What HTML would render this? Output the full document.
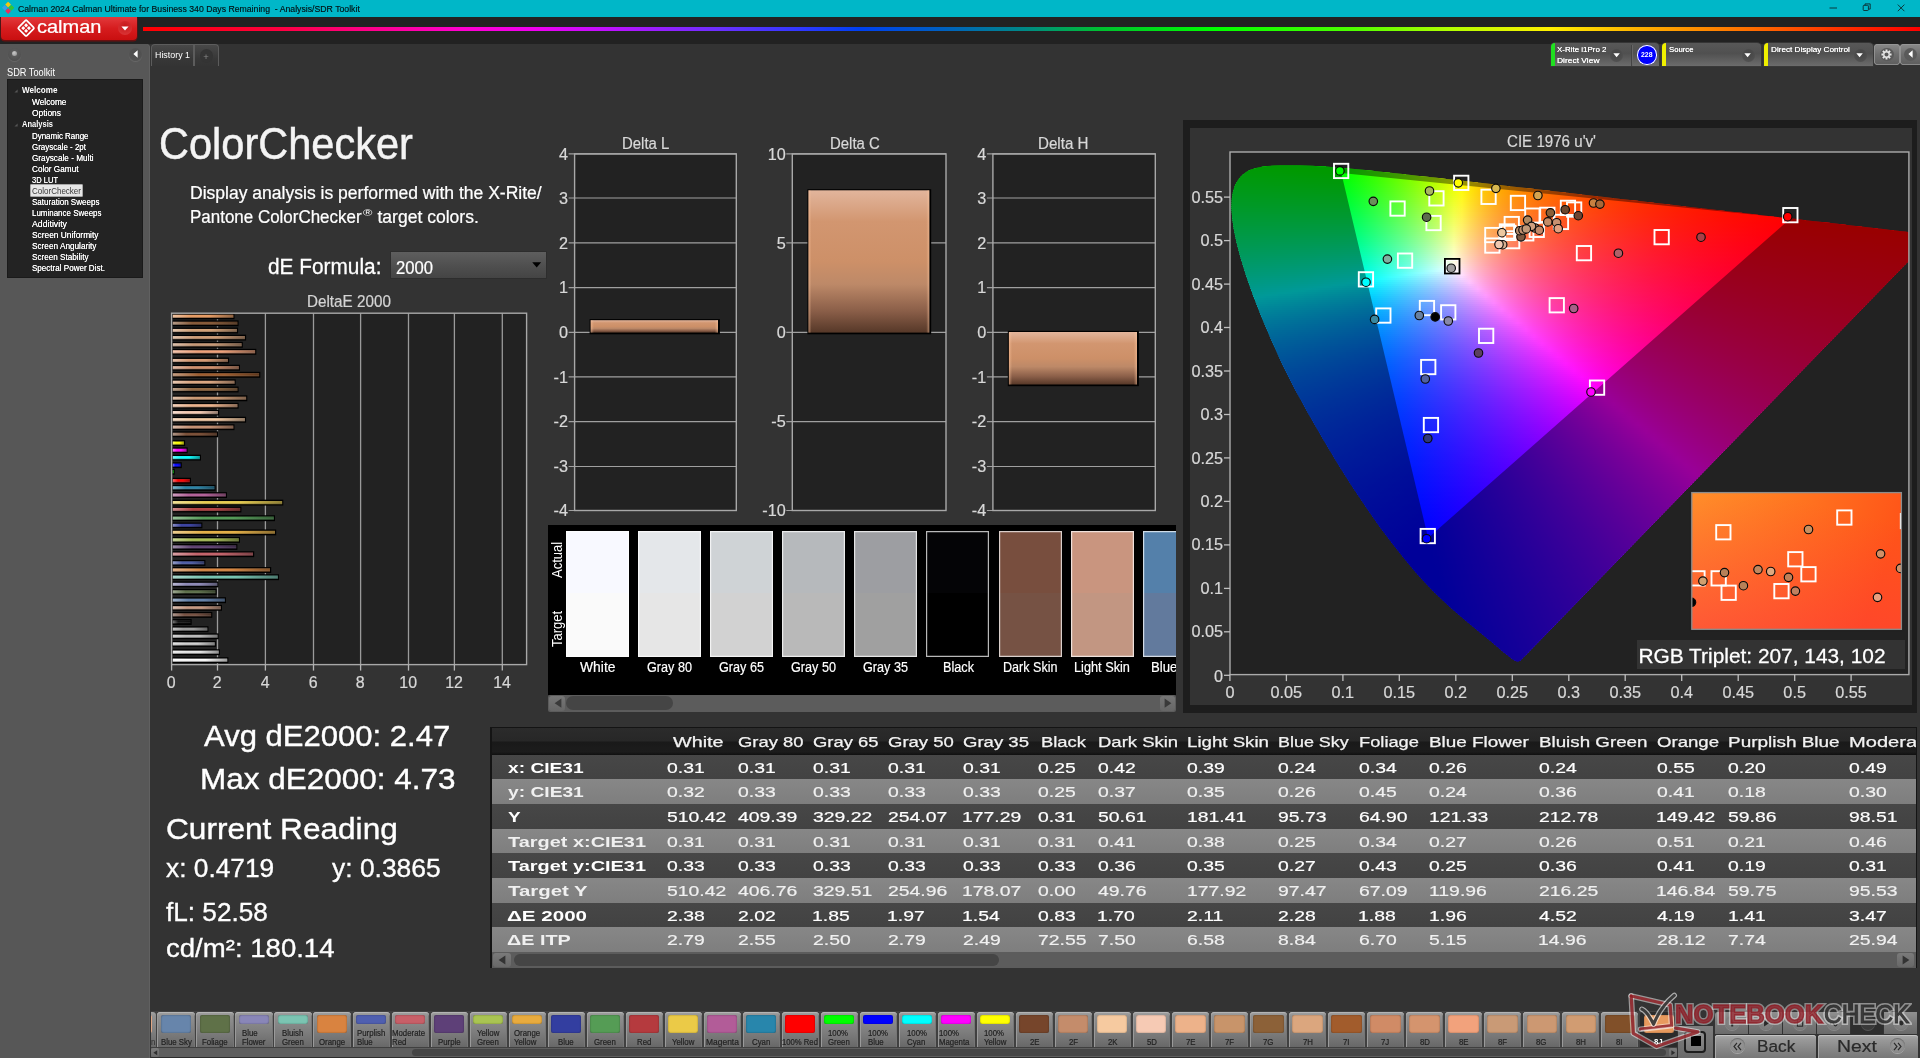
<!DOCTYPE html>
<html><head><meta charset="utf-8"><title>Calman ColorChecker</title>
<style>
html,body{margin:0;padding:0;background:#333;}
#app{will-change:transform;position:relative;width:1920px;height:1058px;overflow:hidden;background:#333;font-family:"Liberation Sans",sans-serif;}
#app div,#app span,#app svg{position:absolute;}
#app span{white-space:nowrap;line-height:1;transform-origin:0 0;}
#app svg{overflow:visible;}
#app svg text{font-family:"Liberation Sans",sans-serif;}
</style></head><body><div id="app">
<!-- top -->
<div style="left:0.00px;top:0.00px;width:1920.00px;height:17.00px;background:#00b7c8;"></div>
<svg style="left:1.8px;top:2px" width="12.4" height="12.4" viewBox="0 0 14 14"><rect x="4.6" y="0.6" width="4.6" height="4.6" fill="#f2c811" transform="rotate(45 6.9 2.9)"/><rect x="0.9" y="4.3" width="4.6" height="4.6" fill="#3aa0e8" transform="rotate(45 3.2 6.6)"/><rect x="8.3" y="4.3" width="4.6" height="4.6" fill="#35c435" transform="rotate(45 10.6 6.6)"/><rect x="4.6" y="8" width="4.6" height="4.6" fill="#e8305a" transform="rotate(45 6.9 10.3)"/></svg>
<span style="left:17.50px;top:4px;font-size:9.13px;line-height:10px;color:#021013;transform:scaleX(0.9537);white-space:pre;-webkit-text-stroke:0.15px #021013;">Calman 2024 Calman Ultimate for Business 340 Days Remaining  - Analysis/SDR Toolkit</span>
<svg style="left:1820px;top:0" width="100" height="17" viewBox="0 0 100 17" fill="none" stroke="#0c2a2e" stroke-width="0.9"><path d="M9.5 8h7.5"/><rect x="43.2" y="5.3" width="5.2" height="5.2" rx="0.8"/><path d="M45 5.3v-1.4h5.2v5.2h-1.6"/><path d="M77.8 4.6l6.6 6.6M84.4 4.6l-6.6 6.6"/></svg>
<div style="left:0.00px;top:17.00px;width:1920.00px;height:27.00px;background:#222;"></div>
<div style="left:142.50px;top:26.80px;width:1777.50px;height:4.00px;background:linear-gradient(90deg,#ff0000 0%,#ff0040 7.7%,#ff0080 12%,#ff00d0 18%,#f000f0 22%,#c010ff 26%,#6a30ff 32.5%,#3038ff 37%,#0040f0 40.3%,#0060c0 45%,#008888 49.5%,#00c030 53.9%,#00ff00 60.3%,#50ff00 68.2%,#b0ff00 73.4%,#fff000 79.1%,#ffb400 83.9%,#ff6e00 90.4%,#ff3000 95.6%,#ff0000 100%);"></div>
<div style="left:1.00px;top:17.00px;width:136.00px;height:22.60px;background:linear-gradient(#e23a3c,#d61c1e 50%,#c90f10);border-radius:0 0 4px 4px;box-shadow:0 1px 0 0.6px #6a1010;"></div>
<svg style="left:16.6px;top:19px" width="18.2" height="18.2" viewBox="0 0 20 20"><g transform="rotate(45 10 10)" fill="none" stroke="#fff" stroke-width="1.9"><rect x="3.6" y="3.6" width="12.8" height="12.8" rx="1.2"/></g><g transform="rotate(45 10 10)" fill="#fff"><rect x="6.2" y="6.2" width="3.2" height="3.2" rx="0.6"/><rect x="10.6" y="6.2" width="3.2" height="3.2" rx="0.6"/><rect x="6.2" y="10.6" width="3.2" height="3.2" rx="0.6"/><rect x="10.6" y="10.6" width="3.2" height="3.2" rx="0.6"/></g></svg>
<span style="left:37.00px;top:16px;font-size:18.30px;line-height:21px;color:#fff;-webkit-text-stroke-width:0.24px;transform:scaleX(1.0933);">calman</span>
<div style="left:117.50px;top:21.00px;width:14.00px;height:14.00px;border-radius:50%;background:radial-gradient(circle at 50% 35%,#c8181a,#dd3a3c);"></div>
<svg style="left:120.5px;top:26.2px" width="8" height="5" viewBox="0 0 8 5"><path d="M0.4 0.5h7.2L4 4.6z" fill="#fff"/></svg>
<div style="left:0.00px;top:43.50px;width:149.50px;height:1014.50px;background:#575757;border-radius:0 4px 0 0;box-shadow:inset -1px 0 0 #616161;"></div>
<div style="left:7.50px;top:47.50px;width:13.00px;height:13.00px;border-radius:50%;background:radial-gradient(circle at 50% 40%,#5a5a5a 30%,#505050 70%);box-shadow:0 1px 1px #6a6a6a;"></div>
<div style="left:11.50px;top:50.80px;width:5.00px;height:5.00px;border-radius:50%;background:radial-gradient(circle at 40% 35%,#c8c8c8,#8a8a8a);"></div>
<div style="left:128.50px;top:47.50px;width:13.00px;height:13.00px;border-radius:50%;background:radial-gradient(circle at 50% 40%,#4c4c4c,#565656);box-shadow:0 1px 1px #6a6a6a;"></div>
<svg style="left:133px;top:49.5px" width="5" height="8" viewBox="0 0 5 8"><path d="M4.6 0.3v7.4L0.4 4z" fill="#fff"/></svg>
<span style="left:6.50px;top:67px;font-size:10.29px;line-height:11px;color:#fff;transform:scaleX(0.8961);">SDR Toolkit</span>
<div style="left:7.00px;top:79.00px;width:136.00px;height:199.00px;background:#232323;box-shadow:inset 0 0 0 1px #1a1a1a;"></div>
<span style="left:22.00px;top:85px;font-size:8.55px;line-height:10px;color:#fff;font-weight:700;transform:scaleX(0.9496);">Welcome</span>
<span style="left:32.00px;top:97px;font-size:8.55px;line-height:10px;color:#fff;transform:scaleX(0.9723);text-shadow:0 0 0.6px #fff;">Welcome</span>
<span style="left:32.00px;top:108px;font-size:8.55px;line-height:10px;color:#fff;transform:scaleX(0.9841);text-shadow:0 0 0.6px #fff;">Options</span>
<span style="left:22.00px;top:119px;font-size:8.55px;line-height:10px;color:#fff;font-weight:700;transform:scaleX(0.8814);">Analysis</span>
<span style="left:32.00px;top:131px;font-size:8.55px;line-height:10px;color:#fff;transform:scaleX(0.9288);text-shadow:0 0 0.6px #fff;">Dynamic Range</span>
<span style="left:32.00px;top:142px;font-size:8.55px;line-height:10px;color:#fff;transform:scaleX(0.9314);text-shadow:0 0 0.6px #fff;">Grayscale - 2pt</span>
<span style="left:32.00px;top:153px;font-size:8.55px;line-height:10px;color:#fff;transform:scaleX(0.9588);text-shadow:0 0 0.6px #fff;">Grayscale - Multi</span>
<span style="left:32.00px;top:164px;font-size:8.55px;line-height:10px;color:#fff;transform:scaleX(0.9593);text-shadow:0 0 0.6px #fff;">Color Gamut</span>
<span style="left:32.00px;top:175px;font-size:8.55px;line-height:10px;color:#fff;transform:scaleX(0.8825);text-shadow:0 0 0.6px #fff;">3D LUT</span>
<div style="left:30.70px;top:185.40px;width:51.60px;height:10.60px;background:#e6e6e6;box-shadow:0 0 0 0.6px #fff;"></div>
<span style="left:32.00px;top:186px;font-size:8.55px;line-height:10px;color:#3a3a3a;transform:scaleX(0.9374);">ColorChecker</span>
<span style="left:32.00px;top:197px;font-size:8.55px;line-height:10px;color:#fff;transform:scaleX(0.9404);text-shadow:0 0 0.6px #fff;">Saturation Sweeps</span>
<span style="left:32.00px;top:208px;font-size:8.55px;line-height:10px;color:#fff;transform:scaleX(0.9313);text-shadow:0 0 0.6px #fff;">Luminance Sweeps</span>
<span style="left:32.00px;top:219px;font-size:8.55px;line-height:10px;color:#fff;transform:scaleX(1.0229);text-shadow:0 0 0.6px #fff;">Additivity</span>
<span style="left:32.00px;top:230px;font-size:8.55px;line-height:10px;color:#fff;transform:scaleX(0.9786);text-shadow:0 0 0.6px #fff;">Screen Uniformity</span>
<span style="left:32.00px;top:241px;font-size:8.55px;line-height:10px;color:#fff;transform:scaleX(0.9624);text-shadow:0 0 0.6px #fff;">Screen Angularity</span>
<span style="left:32.00px;top:252px;font-size:8.55px;line-height:10px;color:#fff;transform:scaleX(0.9510);text-shadow:0 0 0.6px #fff;">Screen Stability</span>
<span style="left:32.00px;top:263px;font-size:8.55px;line-height:10px;color:#fff;transform:scaleX(0.9424);text-shadow:0 0 0.6px #fff;">Spectral Power Dist.</span>
<svg style="left:14px;top:88.8px" width="4" height="4" viewBox="0 0 4 4"><path d="M3.6 0.4v3.2H0.4z" fill="#555"/></svg>
<svg style="left:14px;top:122.7px" width="4" height="4" viewBox="0 0 4 4"><path d="M3.6 0.4v3.2H0.4z" fill="#555"/></svg>
<div style="left:151.00px;top:43.60px;width:42.50px;height:23.00px;background:linear-gradient(#484848,#383838 60%,#333);border:1px solid #5c5c5c;border-bottom:none;border-radius:4px 0 0 0;box-sizing:border-box;"></div>
<div style="left:194.00px;top:43.60px;width:24.50px;height:23.00px;background:linear-gradient(#484848,#383838 60%,#333);border:1px solid #5c5c5c;border-bottom:none;border-radius:0 4px 0 0;box-sizing:border-box;"></div>
<span style="left:154.50px;top:50px;font-size:9.13px;line-height:10px;color:#fff;transform:scaleX(0.9716);">History 1</span>
<div style="left:199.50px;top:49.00px;width:13.50px;height:13.50px;border-radius:50%;background:#343434;"></div>
<span style="left:203.20px;top:51px;font-size:9.50px;line-height:11px;color:#888;">+</span>
<div style="left:150.50px;top:66.40px;width:1769.50px;height:991.60px;background:#333;"></div>
<div style="left:1551.00px;top:43.40px;width:107.50px;height:23.00px;background:linear-gradient(#585858,#505050 45%,#6c6c6c);border-radius:4px 4px 0 0;box-shadow:0 0 0 0.8px #3c3c3c;overflow:hidden;"><div style="left:0.00px;top:0.00px;width:4.00px;height:23.00px;background:#20e020;"></div></div><div style="left:1610.00px;top:48.50px;width:13.00px;height:13.00px;border-radius:50%;background:radial-gradient(circle at 50% 35%,#444,#555);"></div><svg style="left:1612.9px;top:53.2px" width="7.2" height="4.4" viewBox="0 0 8 5"><path d="M0.3 0.4h7.4L4 4.7z" fill="#fff"/></svg>
<div style="left:1631.00px;top:45.00px;width:1.00px;height:21.00px;background:#444;box-shadow:1px 0 0 #666;"></div>
<span style="left:1557.00px;top:45px;font-size:8.12px;line-height:9px;color:#fff;transform:scaleX(0.9798);text-shadow:0 0 0.5px #fff;">X-Rite i1Pro 2</span>
<span style="left:1557.00px;top:56px;font-size:8.12px;line-height:9px;color:#fff;transform:scaleX(1.0393);text-shadow:0 0 0.5px #fff;">Direct View</span>
<div style="left:1637.00px;top:45.00px;width:19.50px;height:19.50px;border-radius:50%;background:#0000ff;box-shadow:inset 0 0 0 1px #fff;"></div>
<span style="left:1641.00px;top:51px;font-size:6.96px;line-height:7px;color:#fff;font-weight:700;transform:scaleX(0.9908);">228</span>
<div style="left:1662.00px;top:43.40px;width:98.50px;height:23.00px;background:linear-gradient(#585858,#505050 45%,#6c6c6c);border-radius:4px 4px 0 0;box-shadow:0 0 0 0.8px #3c3c3c;overflow:hidden;"><div style="left:0.00px;top:0.00px;width:4.00px;height:23.00px;background:#f0f000;"></div></div><div style="left:1741.50px;top:48.50px;width:13.00px;height:13.00px;border-radius:50%;background:radial-gradient(circle at 50% 35%,#444,#555);"></div><svg style="left:1744.4px;top:53.2px" width="7.2" height="4.4" viewBox="0 0 8 5"><path d="M0.3 0.4h7.4L4 4.7z" fill="#fff"/></svg>
<span style="left:1669.00px;top:45px;font-size:8.12px;line-height:9px;color:#fff;transform:scaleX(0.9527);text-shadow:0 0 0.5px #fff;">Source</span>
<div style="left:1764.00px;top:43.40px;width:108.50px;height:23.00px;background:linear-gradient(#585858,#505050 45%,#6c6c6c);border-radius:4px 4px 0 0;box-shadow:0 0 0 0.8px #3c3c3c;overflow:hidden;"><div style="left:0.00px;top:0.00px;width:4.00px;height:23.00px;background:#f0f000;"></div></div><div style="left:1853.50px;top:48.50px;width:13.00px;height:13.00px;border-radius:50%;background:radial-gradient(circle at 50% 35%,#444,#555);"></div><svg style="left:1856.4px;top:53.2px" width="7.2" height="4.4" viewBox="0 0 8 5"><path d="M0.3 0.4h7.4L4 4.7z" fill="#fff"/></svg>
<span style="left:1771.00px;top:45px;font-size:8.12px;line-height:9px;color:#fff;transform:scaleX(1.0066);text-shadow:0 0 0.5px #fff;">Direct Display Control</span>
<div style="left:1874.00px;top:43.50px;width:25.50px;height:21.30px;background:linear-gradient(#8a8a8a,#6e6e6e 50%,#5e5e5e);border-radius:4px;box-shadow:0 0 0 0.8px #999 inset;"></div>
<div style="left:1900.00px;top:43.50px;width:24.00px;height:21.30px;background:linear-gradient(#8a8a8a,#6e6e6e 50%,#5e5e5e);border-radius:4px;box-shadow:0 0 0 0.8px #999 inset;"></div>
<div style="left:1880.00px;top:47.50px;width:13.50px;height:13.50px;border-radius:50%;background:#5a5a5a;"></div>
<svg style="left:1881.2px;top:48.8px" width="11" height="11" viewBox="0 0 24 24" fill="none" stroke="#e8e8e8"><circle cx="12" cy="12" r="6" stroke-width="3"/><g stroke-width="4.2"><path d="M12 1v4M12 19v4M1 12h4M19 12h4M4.2 4.2l2.9 2.9M16.9 16.9l2.9 2.9M4.2 19.8l2.9-2.9M16.9 7.1l2.9-2.9"/></g><circle cx="12" cy="12" r="3.2" fill="#5a5a5a" stroke="none"/></svg>
<div style="left:1903.50px;top:47.50px;width:13.50px;height:13.50px;border-radius:50%;background:#5a5a5a;"></div>
<svg style="left:1907.5px;top:50px" width="5" height="8" viewBox="0 0 5 8"><path d="M4.6 0.3v7.4L0.4 4z" fill="#fff"/></svg>
<!-- left -->
<span style="left:159.00px;top:119px;font-size:44.20px;line-height:49px;color:#f4f4f4;transform:scaleX(0.9399);-webkit-text-stroke:0.5px #f4f4f4;">ColorChecker</span>
<span style="left:190.00px;top:183px;font-size:17.54px;line-height:20px;color:#fff;-webkit-text-stroke-width:0.23px;">Display analysis is performed with the X-Rite/</span>
<span style="left:190.00px;top:207px;font-size:17.54px;line-height:20px;color:#fff;-webkit-text-stroke-width:0.23px;transform:scaleX(0.9672);">Pantone ColorChecker</span>
<span style="left:362.60px;top:207px;font-size:9.50px;line-height:11px;color:#fff;transform:scaleX(1.3429);">®</span>
<span style="left:377.50px;top:207px;font-size:17.54px;line-height:20px;color:#fff;-webkit-text-stroke-width:0.23px;">target colors.</span>
<span style="left:267.50px;top:254px;font-size:22.32px;line-height:25px;color:#fff;-webkit-text-stroke-width:0.29px;transform:scaleX(0.9337);">dE Formula:</span>
<div style="left:390.60px;top:252.00px;width:155.50px;height:26.00px;background:linear-gradient(#5e5e5e,#505050 50%,#444);box-shadow:0 0 0 0.8px #2c2c2c;"></div>
<span style="left:395.50px;top:258px;font-size:17.68px;line-height:20px;color:#fff;-webkit-text-stroke-width:0.23px;transform:scaleX(0.9406);">2000</span>
<svg style="left:531.5px;top:262px" width="9.4" height="5.6" viewBox="0 0 10 6"><path d="M0.2 0.3h9.6L5 5.8z" fill="#000"/></svg>
<span style="left:307.40px;top:292px;font-size:16.09px;line-height:18px;color:#d4d4d4;-webkit-text-stroke-width:0.21px;transform:scaleX(0.9476);">DeltaE 2000</span>
<svg style="left:0;top:0" width="560" height="700" viewBox="0 0 560 700"><rect x="171.6" y="313.2" width="355.0" height="351.4" fill="#222"/><path d="M217.5 313.2V664.6" stroke="#9a9a9a" stroke-width="1.3"/><path d="M265.4 313.2V664.6" stroke="#9a9a9a" stroke-width="1.3"/><path d="M313.5 313.2V664.6" stroke="#9a9a9a" stroke-width="1.3"/><path d="M360.6 313.2V664.6" stroke="#9a9a9a" stroke-width="1.3"/><path d="M408.5 313.2V664.6" stroke="#9a9a9a" stroke-width="1.3"/><path d="M454.4 313.2V664.6" stroke="#9a9a9a" stroke-width="1.3"/><path d="M502.3 313.2V664.6" stroke="#9a9a9a" stroke-width="1.3"/><defs><linearGradient id="bg" x1="0" y1="0" x2="0" y2="1"><stop offset="0" stop-color="#fff" stop-opacity=".12"/><stop offset=".4" stop-color="#fff" stop-opacity="0"/><stop offset="1" stop-color="#000" stop-opacity=".4"/></linearGradient><linearGradient id="bh" x1="0" y1="0" x2="1" y2="0"><stop offset="0" stop-color="#fff" stop-opacity=".4"/><stop offset=".3" stop-color="#fff" stop-opacity="0"/><stop offset=".6" stop-color="#000" stop-opacity="0"/><stop offset="1" stop-color="#000" stop-opacity=".4"/></linearGradient></defs><rect x="172.2" y="657.25" width="56.2" height="5.9" fill="#000"/><rect x="172.8" y="658.65" width="54.4" height="3.1" fill="#ffffff"/><rect x="172.8" y="658.65" width="54.4" height="3.1" fill="url(#bh)"/><rect x="172.8" y="658.65" width="54.4" height="3.1" fill="url(#bg)"/><rect x="172.2" y="649.25" width="47.7" height="5.9" fill="#000"/><rect x="172.8" y="650.65" width="45.9" height="3.1" fill="#e6e6e6"/><rect x="172.8" y="650.65" width="45.9" height="3.1" fill="url(#bh)"/><rect x="172.8" y="650.65" width="45.9" height="3.1" fill="url(#bg)"/><rect x="172.2" y="640.95" width="43.7" height="5.9" fill="#000"/><rect x="172.8" y="642.35" width="41.9" height="3.1" fill="#d0d0d0"/><rect x="172.8" y="642.35" width="41.9" height="3.1" fill="url(#bh)"/><rect x="172.8" y="642.35" width="41.9" height="3.1" fill="url(#bg)"/><rect x="172.2" y="633.35" width="46.5" height="5.9" fill="#000"/><rect x="172.8" y="634.75" width="44.7" height="3.1" fill="#b8b8b8"/><rect x="172.8" y="634.75" width="44.7" height="3.1" fill="url(#bh)"/><rect x="172.8" y="634.75" width="44.7" height="3.1" fill="url(#bg)"/><rect x="172.2" y="626.25" width="36.3" height="5.9" fill="#000"/><rect x="172.8" y="627.65" width="34.5" height="3.1" fill="#9a9a9a"/><rect x="172.8" y="627.65" width="34.5" height="3.1" fill="url(#bh)"/><rect x="172.8" y="627.65" width="34.5" height="3.1" fill="url(#bg)"/><rect x="172.2" y="619.05" width="19.5" height="5.9" fill="#000"/><rect x="172.8" y="620.45" width="17.7" height="3.1" fill="#101010"/><rect x="172.8" y="620.45" width="17.7" height="3.1" fill="url(#bh)"/><rect x="172.8" y="620.45" width="17.7" height="3.1" fill="url(#bg)"/><rect x="172.2" y="611.95" width="40.1" height="5.9" fill="#000"/><rect x="172.8" y="613.35" width="38.3" height="3.1" fill="#785040"/><rect x="172.8" y="613.35" width="38.3" height="3.1" fill="url(#bh)"/><rect x="172.8" y="613.35" width="38.3" height="3.1" fill="url(#bg)"/><rect x="172.2" y="604.85" width="49.8" height="5.9" fill="#000"/><rect x="172.8" y="606.25" width="48.0" height="3.1" fill="#c89880"/><rect x="172.8" y="606.25" width="48.0" height="3.1" fill="url(#bh)"/><rect x="172.8" y="606.25" width="48.0" height="3.1" fill="url(#bg)"/><rect x="172.2" y="597.25" width="53.8" height="5.9" fill="#000"/><rect x="172.8" y="598.65" width="52.0" height="3.1" fill="#5c7ca8"/><rect x="172.8" y="598.65" width="52.0" height="3.1" fill="url(#bh)"/><rect x="172.8" y="598.65" width="52.0" height="3.1" fill="url(#bg)"/><rect x="172.2" y="588.95" width="44.4" height="5.9" fill="#000"/><rect x="172.8" y="590.35" width="42.6" height="3.1" fill="#5c7048"/><rect x="172.8" y="590.35" width="42.6" height="3.1" fill="url(#bh)"/><rect x="172.8" y="590.35" width="42.6" height="3.1" fill="url(#bg)"/><rect x="172.2" y="581.45" width="46.3" height="5.9" fill="#000"/><rect x="172.8" y="582.85" width="44.5" height="3.1" fill="#8884b4"/><rect x="172.8" y="582.85" width="44.5" height="3.1" fill="url(#bh)"/><rect x="172.8" y="582.85" width="44.5" height="3.1" fill="url(#bg)"/><rect x="172.2" y="574.25" width="106.8" height="5.9" fill="#000"/><rect x="172.8" y="575.65" width="105.0" height="3.1" fill="#70c4b0"/><rect x="172.8" y="575.65" width="105.0" height="3.1" fill="url(#bh)"/><rect x="172.8" y="575.65" width="105.0" height="3.1" fill="url(#bg)"/><rect x="172.2" y="567.05" width="99.0" height="5.9" fill="#000"/><rect x="172.8" y="568.45" width="97.2" height="3.1" fill="#d8843c"/><rect x="172.8" y="568.45" width="97.2" height="3.1" fill="url(#bh)"/><rect x="172.8" y="568.45" width="97.2" height="3.1" fill="url(#bg)"/><rect x="172.2" y="559.95" width="33.2" height="5.9" fill="#000"/><rect x="172.8" y="561.35" width="31.4" height="3.1" fill="#4c5ca8"/><rect x="172.8" y="561.35" width="31.4" height="3.1" fill="url(#bh)"/><rect x="172.8" y="561.35" width="31.4" height="3.1" fill="url(#bg)"/><rect x="172.2" y="551.25" width="82.0" height="5.9" fill="#000"/><rect x="172.8" y="552.65" width="80.2" height="3.1" fill="#c45c64"/><rect x="172.8" y="552.65" width="80.2" height="3.1" fill="url(#bh)"/><rect x="172.8" y="552.65" width="80.2" height="3.1" fill="url(#bg)"/><rect x="172.2" y="544.05" width="65.2" height="5.9" fill="#000"/><rect x="172.8" y="545.45" width="63.4" height="3.1" fill="#5c3c70"/><rect x="172.8" y="545.45" width="63.4" height="3.1" fill="url(#bh)"/><rect x="172.8" y="545.45" width="63.4" height="3.1" fill="url(#bg)"/><rect x="172.2" y="536.95" width="67.8" height="5.9" fill="#000"/><rect x="172.8" y="538.35" width="66.0" height="3.1" fill="#a8c050"/><rect x="172.8" y="538.35" width="66.0" height="3.1" fill="url(#bh)"/><rect x="172.8" y="538.35" width="66.0" height="3.1" fill="url(#bg)"/><rect x="172.2" y="529.45" width="104.0" height="5.9" fill="#000"/><rect x="172.8" y="530.85" width="102.2" height="3.1" fill="#e4ac3c"/><rect x="172.8" y="530.85" width="102.2" height="3.1" fill="url(#bh)"/><rect x="172.8" y="530.85" width="102.2" height="3.1" fill="url(#bg)"/><rect x="172.2" y="522.45" width="30.2" height="5.9" fill="#000"/><rect x="172.8" y="523.85" width="28.4" height="3.1" fill="#30389c"/><rect x="172.8" y="523.85" width="28.4" height="3.1" fill="url(#bh)"/><rect x="172.8" y="523.85" width="28.4" height="3.1" fill="url(#bg)"/><rect x="172.2" y="515.25" width="102.8" height="5.9" fill="#000"/><rect x="172.8" y="516.65" width="101.0" height="3.1" fill="#4c9850"/><rect x="172.8" y="516.65" width="101.0" height="3.1" fill="url(#bh)"/><rect x="172.8" y="516.65" width="101.0" height="3.1" fill="url(#bg)"/><rect x="172.2" y="506.55" width="69.2" height="5.9" fill="#000"/><rect x="172.8" y="507.95" width="67.4" height="3.1" fill="#b03838"/><rect x="172.8" y="507.95" width="67.4" height="3.1" fill="url(#bh)"/><rect x="172.8" y="507.95" width="67.4" height="3.1" fill="url(#bg)"/><rect x="172.2" y="499.65" width="111.1" height="5.9" fill="#000"/><rect x="172.8" y="501.05" width="109.3" height="3.1" fill="#e8cc48"/><rect x="172.8" y="501.05" width="109.3" height="3.1" fill="url(#bh)"/><rect x="172.8" y="501.05" width="109.3" height="3.1" fill="url(#bg)"/><rect x="172.2" y="492.15" width="54.8" height="5.9" fill="#000"/><rect x="172.8" y="493.55" width="53.0" height="3.1" fill="#b45c98"/><rect x="172.8" y="493.55" width="53.0" height="3.1" fill="url(#bh)"/><rect x="172.8" y="493.55" width="53.0" height="3.1" fill="url(#bg)"/><rect x="172.2" y="484.85" width="43.4" height="5.9" fill="#000"/><rect x="172.8" y="486.25" width="41.6" height="3.1" fill="#2884a8"/><rect x="172.8" y="486.25" width="41.6" height="3.1" fill="url(#bh)"/><rect x="172.8" y="486.25" width="41.6" height="3.1" fill="url(#bg)"/><rect x="172.2" y="477.75" width="18.8" height="5.9" fill="#000"/><rect x="172.8" y="479.15" width="17.0" height="3.1" fill="#ff0000"/><rect x="172.8" y="479.15" width="17.0" height="3.1" fill="url(#bh)"/><rect x="172.8" y="479.15" width="17.0" height="3.1" fill="url(#bg)"/><rect x="172.2" y="468.85" width="2.5" height="5.9" fill="#000"/><rect x="172.8" y="470.25" width="0.8" height="3.1" fill="#00ff00"/><rect x="172.8" y="470.25" width="0.8" height="3.1" fill="url(#bh)"/><rect x="172.8" y="470.25" width="0.8" height="3.1" fill="url(#bg)"/><rect x="172.2" y="462.25" width="9.6" height="5.9" fill="#000"/><rect x="172.8" y="463.65" width="7.8" height="3.1" fill="#0000ff"/><rect x="172.8" y="463.65" width="7.8" height="3.1" fill="url(#bh)"/><rect x="172.8" y="463.65" width="7.8" height="3.1" fill="url(#bg)"/><rect x="172.2" y="454.65" width="28.8" height="5.9" fill="#000"/><rect x="172.8" y="456.05" width="27.0" height="3.1" fill="#00ffff"/><rect x="172.8" y="456.05" width="27.0" height="3.1" fill="url(#bh)"/><rect x="172.8" y="456.05" width="27.0" height="3.1" fill="url(#bg)"/><rect x="172.2" y="447.35" width="15.5" height="5.9" fill="#000"/><rect x="172.8" y="448.75" width="13.7" height="3.1" fill="#ff00ff"/><rect x="172.8" y="448.75" width="13.7" height="3.1" fill="url(#bh)"/><rect x="172.8" y="448.75" width="13.7" height="3.1" fill="url(#bg)"/><rect x="172.2" y="440.15" width="12.9" height="5.9" fill="#000"/><rect x="172.8" y="441.55" width="11.1" height="3.1" fill="#ffff00"/><rect x="172.8" y="441.55" width="11.1" height="3.1" fill="url(#bh)"/><rect x="172.8" y="441.55" width="11.1" height="3.1" fill="url(#bg)"/><rect x="172.2" y="431.35" width="46.0" height="5.9" fill="#000"/><rect x="172.8" y="432.75" width="44.2" height="3.1" fill="#74462c"/><rect x="172.8" y="432.75" width="44.2" height="3.1" fill="url(#bh)"/><rect x="172.8" y="432.75" width="44.2" height="3.1" fill="url(#bg)"/><rect x="172.2" y="424.25" width="62.3" height="5.9" fill="#000"/><rect x="172.8" y="425.65" width="60.5" height="3.1" fill="#c48c6c"/><rect x="172.8" y="425.65" width="60.5" height="3.1" fill="url(#bh)"/><rect x="172.8" y="425.65" width="60.5" height="3.1" fill="url(#bg)"/><rect x="172.2" y="416.75" width="73.9" height="5.9" fill="#000"/><rect x="172.8" y="418.15" width="72.1" height="3.1" fill="#f4c8a0"/><rect x="172.8" y="418.15" width="72.1" height="3.1" fill="url(#bh)"/><rect x="172.8" y="418.15" width="72.1" height="3.1" fill="url(#bg)"/><rect x="172.2" y="409.65" width="47.0" height="5.9" fill="#000"/><rect x="172.8" y="411.05" width="45.2" height="3.1" fill="#f4c8b0"/><rect x="172.8" y="411.05" width="45.2" height="3.1" fill="url(#bh)"/><rect x="172.8" y="411.05" width="45.2" height="3.1" fill="url(#bg)"/><rect x="172.2" y="402.75" width="66.4" height="5.9" fill="#000"/><rect x="172.8" y="404.15" width="64.6" height="3.1" fill="#ecb088"/><rect x="172.8" y="404.15" width="64.6" height="3.1" fill="url(#bh)"/><rect x="172.8" y="404.15" width="64.6" height="3.1" fill="url(#bg)"/><rect x="172.2" y="395.35" width="75.1" height="5.9" fill="#000"/><rect x="172.8" y="396.75" width="73.3" height="3.1" fill="#c8946c"/><rect x="172.8" y="396.75" width="73.3" height="3.1" fill="url(#bh)"/><rect x="172.8" y="396.75" width="73.3" height="3.1" fill="url(#bg)"/><rect x="172.2" y="386.55" width="66.4" height="5.9" fill="#000"/><rect x="172.8" y="387.95" width="64.6" height="3.1" fill="#8c6038"/><rect x="172.8" y="387.95" width="64.6" height="3.1" fill="url(#bh)"/><rect x="172.8" y="387.95" width="64.6" height="3.1" fill="url(#bg)"/><rect x="172.2" y="379.35" width="63.5" height="5.9" fill="#000"/><rect x="172.8" y="380.75" width="61.7" height="3.1" fill="#dca47c"/><rect x="172.8" y="380.75" width="61.7" height="3.1" fill="url(#bh)"/><rect x="172.8" y="380.75" width="61.7" height="3.1" fill="url(#bg)"/><rect x="172.2" y="371.85" width="88.1" height="5.9" fill="#000"/><rect x="172.8" y="373.25" width="86.3" height="3.1" fill="#a05c2c"/><rect x="172.8" y="373.25" width="86.3" height="3.1" fill="url(#bh)"/><rect x="172.8" y="373.25" width="86.3" height="3.1" fill="url(#bg)"/><rect x="172.2" y="364.75" width="67.8" height="5.9" fill="#000"/><rect x="172.8" y="366.15" width="66.0" height="3.1" fill="#d08c68"/><rect x="172.8" y="366.15" width="66.0" height="3.1" fill="url(#bh)"/><rect x="172.8" y="366.15" width="66.0" height="3.1" fill="url(#bg)"/><rect x="172.2" y="357.55" width="56.9" height="5.9" fill="#000"/><rect x="172.8" y="358.95" width="55.1" height="3.1" fill="#d4946c"/><rect x="172.8" y="358.95" width="55.1" height="3.1" fill="url(#bh)"/><rect x="172.8" y="358.95" width="55.1" height="3.1" fill="url(#bg)"/><rect x="172.2" y="348.85" width="84.1" height="5.9" fill="#000"/><rect x="172.8" y="350.25" width="82.3" height="3.1" fill="#f0a078"/><rect x="172.8" y="350.25" width="82.3" height="3.1" fill="url(#bh)"/><rect x="172.8" y="350.25" width="82.3" height="3.1" fill="url(#bg)"/><rect x="172.2" y="341.85" width="70.6" height="5.9" fill="#000"/><rect x="172.8" y="343.25" width="68.8" height="3.1" fill="#c89874"/><rect x="172.8" y="343.25" width="68.8" height="3.1" fill="url(#bh)"/><rect x="172.8" y="343.25" width="68.8" height="3.1" fill="url(#bg)"/><rect x="172.2" y="334.65" width="73.9" height="5.9" fill="#000"/><rect x="172.8" y="336.05" width="72.1" height="3.1" fill="#cc9870"/><rect x="172.8" y="336.05" width="72.1" height="3.1" fill="url(#bh)"/><rect x="172.8" y="336.05" width="72.1" height="3.1" fill="url(#bg)"/><rect x="172.2" y="327.55" width="65.9" height="5.9" fill="#000"/><rect x="172.8" y="328.95" width="64.1" height="3.1" fill="#d09c70"/><rect x="172.8" y="328.95" width="64.1" height="3.1" fill="url(#bh)"/><rect x="172.8" y="328.95" width="64.1" height="3.1" fill="url(#bg)"/><rect x="172.2" y="320.35" width="66.4" height="5.9" fill="#000"/><rect x="172.8" y="321.75" width="64.6" height="3.1" fill="#80502c"/><rect x="172.8" y="321.75" width="64.6" height="3.1" fill="url(#bh)"/><rect x="172.8" y="321.75" width="64.6" height="3.1" fill="url(#bg)"/><rect x="172.2" y="313.35" width="62.3" height="5.9" fill="#000"/><rect x="172.8" y="314.75" width="60.5" height="3.1" fill="#e8985c"/><rect x="172.8" y="314.75" width="60.5" height="3.1" fill="url(#bh)"/><rect x="172.8" y="314.75" width="60.5" height="3.1" fill="url(#bg)"/><rect x="171.6" y="313.2" width="355.0" height="351.4" fill="none" stroke="#a8a8a8" stroke-width="1.4"/><path d="M171.6 664.6v6" stroke="#b4b4b4" stroke-width="1.3"/><path d="M217.5 664.6v6" stroke="#b4b4b4" stroke-width="1.3"/><path d="M265.4 664.6v6" stroke="#b4b4b4" stroke-width="1.3"/><path d="M313.5 664.6v6" stroke="#b4b4b4" stroke-width="1.3"/><path d="M360.6 664.6v6" stroke="#b4b4b4" stroke-width="1.3"/><path d="M408.5 664.6v6" stroke="#b4b4b4" stroke-width="1.3"/><path d="M454.4 664.6v6" stroke="#b4b4b4" stroke-width="1.3"/><path d="M502.3 664.6v6" stroke="#b4b4b4" stroke-width="1.3"/></svg>
<span style="left:166.87px;top:674px;font-size:15.94px;line-height:17px;color:#d8d8d8;-webkit-text-stroke-width:0.21px;">0</span>
<span style="left:212.77px;top:674px;font-size:15.94px;line-height:17px;color:#d8d8d8;-webkit-text-stroke-width:0.21px;">2</span>
<span style="left:260.67px;top:674px;font-size:15.94px;line-height:17px;color:#d8d8d8;-webkit-text-stroke-width:0.21px;">4</span>
<span style="left:308.77px;top:674px;font-size:15.94px;line-height:17px;color:#d8d8d8;-webkit-text-stroke-width:0.21px;">6</span>
<span style="left:355.87px;top:674px;font-size:15.94px;line-height:17px;color:#d8d8d8;-webkit-text-stroke-width:0.21px;">8</span>
<span style="left:399.33px;top:674px;font-size:15.94px;line-height:17px;color:#d8d8d8;-webkit-text-stroke-width:0.21px;">10</span>
<span style="left:445.23px;top:674px;font-size:15.94px;line-height:17px;color:#d8d8d8;-webkit-text-stroke-width:0.21px;">12</span>
<span style="left:493.13px;top:674px;font-size:15.94px;line-height:17px;color:#d8d8d8;-webkit-text-stroke-width:0.21px;">14</span>
<span style="left:204.20px;top:719px;font-size:29.42px;line-height:33px;color:#fff;-webkit-text-stroke-width:0.38px;transform:scaleX(1.0558);">Avg dE2000: 2.47</span>
<span style="left:200.10px;top:762px;font-size:29.42px;line-height:33px;color:#fff;-webkit-text-stroke-width:0.38px;transform:scaleX(1.0703);">Max dE2000: 4.73</span>
<span style="left:165.90px;top:812px;font-size:29.42px;line-height:33px;color:#fff;-webkit-text-stroke-width:0.38px;transform:scaleX(1.0742);">Current Reading</span>
<span style="left:165.90px;top:854px;font-size:25.07px;line-height:28px;color:#fff;-webkit-text-stroke-width:0.33px;transform:scaleX(1.0499);">x: 0.4719</span>
<span style="left:331.80px;top:854px;font-size:25.07px;line-height:28px;color:#fff;-webkit-text-stroke-width:0.33px;transform:scaleX(1.0537);">y: 0.3865</span>
<span style="left:165.90px;top:898px;font-size:25.07px;line-height:28px;color:#fff;-webkit-text-stroke-width:0.33px;transform:scaleX(1.0442);">fL: 52.58</span>
<span style="left:165.90px;top:934px;font-size:25.07px;line-height:28px;color:#fff;-webkit-text-stroke-width:0.33px;transform:scaleX(1.0998);">cd/m²: 180.14</span>
<!-- delta -->
<svg style="left:0;top:0" width="1180" height="530" viewBox="0 0 1180 530"><defs><linearGradient id="dg" x1="0" y1="0" x2="0" y2="1"><stop offset="0" stop-color="#e2b59c"/><stop offset=".22" stop-color="#d29670"/><stop offset=".5" stop-color="#cd9068"/><stop offset=".66" stop-color="#bd8968"/><stop offset=".85" stop-color="#8a5e48"/><stop offset="1" stop-color="#563828"/></linearGradient><linearGradient id="de" x1="0" y1="0" x2="1" y2="0"><stop offset="0" stop-color="#ffc8a0" stop-opacity=".5"/><stop offset=".025" stop-color="#ffc8a0" stop-opacity="0"/><stop offset=".975" stop-color="#ffc8a0" stop-opacity="0"/><stop offset="1" stop-color="#ffc8a0" stop-opacity=".5"/></linearGradient></defs><rect x="574.6" y="153.9" width="161.7" height="356.6" fill="#222"/><path d="M568.6 153.9H736.3" stroke="#a0a0a0" stroke-width="1.2"/><path d="M568.6 198.0H736.3" stroke="#a0a0a0" stroke-width="1.2"/><path d="M568.6 242.9H736.3" stroke="#a0a0a0" stroke-width="1.2"/><path d="M568.6 287.6H736.3" stroke="#a0a0a0" stroke-width="1.2"/><path d="M568.6 332.3H736.3" stroke="#a0a0a0" stroke-width="1.2"/><path d="M568.6 376.9H736.3" stroke="#a0a0a0" stroke-width="1.2"/><path d="M568.6 421.7H736.3" stroke="#a0a0a0" stroke-width="1.2"/><path d="M568.6 466.5H736.3" stroke="#a0a0a0" stroke-width="1.2"/><path d="M568.6 510.5H736.3" stroke="#a0a0a0" stroke-width="1.2"/><rect x="574.6" y="153.9" width="161.7" height="356.6" fill="none" stroke="#a8a8a8" stroke-width="1.4"/><rect x="589.6" y="319.1" width="130.3" height="15.2" fill="#000"/><rect x="590.7" y="320.2" width="127.3" height="12.4" fill="url(#dg)"/><rect x="590.7" y="320.2" width="127.3" height="12.4" fill="url(#de)"/><rect x="792.3" y="153.9" width="153.7" height="356.6" fill="#222"/><path d="M786.3 153.9H946.0" stroke="#a0a0a0" stroke-width="1.2"/><path d="M786.3 242.9H946.0" stroke="#a0a0a0" stroke-width="1.2"/><path d="M786.3 332.3H946.0" stroke="#a0a0a0" stroke-width="1.2"/><path d="M786.3 421.7H946.0" stroke="#a0a0a0" stroke-width="1.2"/><path d="M786.3 510.5H946.0" stroke="#a0a0a0" stroke-width="1.2"/><rect x="792.3" y="153.9" width="153.7" height="356.6" fill="none" stroke="#a8a8a8" stroke-width="1.4"/><rect x="807.4" y="189.2" width="123.8" height="145.1" fill="#000"/><rect x="808.5" y="190.3" width="120.8" height="142.3" fill="url(#dg)"/><rect x="808.5" y="190.3" width="120.8" height="142.3" fill="url(#de)"/><rect x="992.9" y="153.9" width="162.4" height="356.6" fill="#222"/><path d="M986.9 153.9H1155.3" stroke="#a0a0a0" stroke-width="1.2"/><path d="M986.9 198.0H1155.3" stroke="#a0a0a0" stroke-width="1.2"/><path d="M986.9 242.9H1155.3" stroke="#a0a0a0" stroke-width="1.2"/><path d="M986.9 287.6H1155.3" stroke="#a0a0a0" stroke-width="1.2"/><path d="M986.9 332.3H1155.3" stroke="#a0a0a0" stroke-width="1.2"/><path d="M986.9 376.9H1155.3" stroke="#a0a0a0" stroke-width="1.2"/><path d="M986.9 421.7H1155.3" stroke="#a0a0a0" stroke-width="1.2"/><path d="M986.9 466.5H1155.3" stroke="#a0a0a0" stroke-width="1.2"/><path d="M986.9 510.5H1155.3" stroke="#a0a0a0" stroke-width="1.2"/><rect x="992.9" y="153.9" width="162.4" height="356.6" fill="none" stroke="#a8a8a8" stroke-width="1.4"/><rect x="1007.8" y="330.9" width="131.1" height="55.3" fill="#000"/><rect x="1008.9" y="332.0" width="128.1" height="52.5" fill="url(#dg)"/><rect x="1008.9" y="332.0" width="128.1" height="52.5" fill="url(#de)"/></svg>
<span style="left:621.70px;top:134px;font-size:16.67px;line-height:19px;color:#d8d8d8;-webkit-text-stroke-width:0.22px;transform:scaleX(0.8976);">Delta L</span>
<span style="left:558.97px;top:145px;font-size:16.23px;line-height:18px;color:#d8d8d8;-webkit-text-stroke-width:0.21px;">4</span>
<span style="left:558.97px;top:189px;font-size:16.23px;line-height:18px;color:#d8d8d8;-webkit-text-stroke-width:0.21px;">3</span>
<span style="left:558.97px;top:234px;font-size:16.23px;line-height:18px;color:#d8d8d8;-webkit-text-stroke-width:0.21px;">2</span>
<span style="left:558.97px;top:278px;font-size:16.23px;line-height:18px;color:#d8d8d8;-webkit-text-stroke-width:0.21px;">1</span>
<span style="left:558.97px;top:323px;font-size:16.23px;line-height:18px;color:#d8d8d8;-webkit-text-stroke-width:0.21px;">0</span>
<span style="left:553.57px;top:368px;font-size:16.23px;line-height:18px;color:#d8d8d8;-webkit-text-stroke-width:0.21px;">-1</span>
<span style="left:553.57px;top:412px;font-size:16.23px;line-height:18px;color:#d8d8d8;-webkit-text-stroke-width:0.21px;">-2</span>
<span style="left:553.57px;top:457px;font-size:16.23px;line-height:18px;color:#d8d8d8;-webkit-text-stroke-width:0.21px;">-3</span>
<span style="left:553.57px;top:501px;font-size:16.23px;line-height:18px;color:#d8d8d8;-webkit-text-stroke-width:0.21px;">-4</span>
<span style="left:830.00px;top:134px;font-size:16.67px;line-height:19px;color:#d8d8d8;-webkit-text-stroke-width:0.22px;transform:scaleX(0.8961);">Delta C</span>
<span style="left:767.64px;top:145px;font-size:16.23px;line-height:18px;color:#d8d8d8;-webkit-text-stroke-width:0.21px;">10</span>
<span style="left:776.67px;top:234px;font-size:16.23px;line-height:18px;color:#d8d8d8;-webkit-text-stroke-width:0.21px;">5</span>
<span style="left:776.67px;top:323px;font-size:16.23px;line-height:18px;color:#d8d8d8;-webkit-text-stroke-width:0.21px;">0</span>
<span style="left:771.27px;top:412px;font-size:16.23px;line-height:18px;color:#d8d8d8;-webkit-text-stroke-width:0.21px;">-5</span>
<span style="left:762.24px;top:501px;font-size:16.23px;line-height:18px;color:#d8d8d8;-webkit-text-stroke-width:0.21px;">-10</span>
<span style="left:1038.30px;top:134px;font-size:16.67px;line-height:19px;color:#d8d8d8;-webkit-text-stroke-width:0.22px;transform:scaleX(0.9087);">Delta H</span>
<span style="left:977.27px;top:145px;font-size:16.23px;line-height:18px;color:#d8d8d8;-webkit-text-stroke-width:0.21px;">4</span>
<span style="left:977.27px;top:189px;font-size:16.23px;line-height:18px;color:#d8d8d8;-webkit-text-stroke-width:0.21px;">3</span>
<span style="left:977.27px;top:234px;font-size:16.23px;line-height:18px;color:#d8d8d8;-webkit-text-stroke-width:0.21px;">2</span>
<span style="left:977.27px;top:278px;font-size:16.23px;line-height:18px;color:#d8d8d8;-webkit-text-stroke-width:0.21px;">1</span>
<span style="left:977.27px;top:323px;font-size:16.23px;line-height:18px;color:#d8d8d8;-webkit-text-stroke-width:0.21px;">0</span>
<span style="left:971.87px;top:368px;font-size:16.23px;line-height:18px;color:#d8d8d8;-webkit-text-stroke-width:0.21px;">-1</span>
<span style="left:971.87px;top:412px;font-size:16.23px;line-height:18px;color:#d8d8d8;-webkit-text-stroke-width:0.21px;">-2</span>
<span style="left:971.87px;top:457px;font-size:16.23px;line-height:18px;color:#d8d8d8;-webkit-text-stroke-width:0.21px;">-3</span>
<span style="left:971.87px;top:501px;font-size:16.23px;line-height:18px;color:#d8d8d8;-webkit-text-stroke-width:0.21px;">-4</span>
<!-- swatch -->
<div style="left:548.30px;top:525.00px;width:627.70px;height:170.00px;background:#000;"></div>
<div style="left:548.30px;top:525.00px;width:627.70px;height:170.00px;overflow:hidden;"><div style="left:17.70px;top:5.70px;width:63.00px;height:126.00px;background:linear-gradient(#f8f9ff 49.2%,#fafafa 49.2%);box-shadow:inset 0 0 0 1.2px rgba(255,255,255,.72);"></div><div style="left:89.80px;top:5.70px;width:63.00px;height:126.00px;background:linear-gradient(#e4e7ea 49.2%,#e6e6e6 49.2%);box-shadow:inset 0 0 0 1.2px rgba(255,255,255,.72);"></div><div style="left:161.90px;top:5.70px;width:63.00px;height:126.00px;background:linear-gradient(#cfd3d6 49.2%,#d2d2d2 49.2%);box-shadow:inset 0 0 0 1.2px rgba(255,255,255,.72);"></div><div style="left:234.00px;top:5.70px;width:63.00px;height:126.00px;background:linear-gradient(#b6b9bc 49.2%,#b9b9b9 49.2%);box-shadow:inset 0 0 0 1.2px rgba(255,255,255,.72);"></div><div style="left:306.10px;top:5.70px;width:63.00px;height:126.00px;background:linear-gradient(#9d9ea2 49.2%,#a0a0a0 49.2%);box-shadow:inset 0 0 0 1.2px rgba(255,255,255,.72);"></div><div style="left:378.20px;top:5.70px;width:63.00px;height:126.00px;background:linear-gradient(#040406 49.2%,#000000 49.2%);box-shadow:inset 0 0 0 1.2px rgba(255,255,255,.72);"></div><div style="left:450.30px;top:5.70px;width:63.00px;height:126.00px;background:linear-gradient(#784e3e 49.2%,#765244 49.2%);box-shadow:inset 0 0 0 1.2px rgba(255,255,255,.72);"></div><div style="left:522.40px;top:5.70px;width:63.00px;height:126.00px;background:linear-gradient(#c9957f 49.2%,#c29682 49.2%);box-shadow:inset 0 0 0 1.2px rgba(255,255,255,.72);"></div><div style="left:594.50px;top:5.70px;width:63.00px;height:126.00px;background:linear-gradient(#5480aa 49.2%,#627a9d 49.2%);box-shadow:inset 0 0 0 1.2px rgba(255,255,255,.72);"></div></div>
<span style="left:579.75px;top:659px;font-size:14.06px;line-height:16px;color:#fff;-webkit-text-stroke-width:0.18px;transform:scaleX(0.9879);">White</span>
<span style="left:647.10px;top:659px;font-size:14.06px;line-height:16px;color:#fff;-webkit-text-stroke-width:0.18px;transform:scaleX(0.8999);">Gray 80</span>
<span style="left:719.20px;top:659px;font-size:14.06px;line-height:16px;color:#fff;-webkit-text-stroke-width:0.18px;transform:scaleX(0.8999);">Gray 65</span>
<span style="left:791.30px;top:659px;font-size:14.06px;line-height:16px;color:#fff;-webkit-text-stroke-width:0.18px;transform:scaleX(0.8999);">Gray 50</span>
<span style="left:863.40px;top:659px;font-size:14.06px;line-height:16px;color:#fff;-webkit-text-stroke-width:0.18px;transform:scaleX(0.8999);">Gray 35</span>
<span style="left:942.50px;top:659px;font-size:14.06px;line-height:16px;color:#fff;-webkit-text-stroke-width:0.18px;transform:scaleX(0.9018);">Black</span>
<span style="left:1002.85px;top:659px;font-size:14.06px;line-height:16px;color:#fff;-webkit-text-stroke-width:0.18px;transform:scaleX(0.8944);">Dark Skin</span>
<span style="left:1074.20px;top:659px;font-size:14.06px;line-height:16px;color:#fff;-webkit-text-stroke-width:0.18px;transform:scaleX(0.9070);">Light Skin</span>
<div style="left:548.30px;top:655.00px;width:627.70px;height:30.00px;overflow:hidden;"><span style="left:602.30px;top:4px;font-size:14.06px;line-height:16px;color:#fff;-webkit-text-stroke-width:0.18px;transform:scaleX(0.9373);">Blue Sky</span></div>
<span style="left:550px;top:578px;font-size:14px;line-height:14px;color:#fff;transform-origin:0 0;transform:rotate(-90deg) scaleX(0.93);width:60px;">Actual</span>
<span style="left:550px;top:647px;font-size:14px;line-height:14px;color:#fff;transform-origin:0 0;transform:rotate(-90deg) scaleX(0.93);">Target</span>
<div style="left:548.30px;top:695.00px;width:627.70px;height:16.80px;background:#5c5c5c;border-radius:2px;"></div>
<div style="left:549.30px;top:696.00px;width:15.50px;height:14.80px;background:linear-gradient(#767676,#666);border-radius:3px;"></div>
<div style="left:1159.70px;top:696.00px;width:15.50px;height:14.80px;background:linear-gradient(#767676,#666);border-radius:3px;"></div>
<svg style="left:553.5px;top:698.2px" width="8" height="10.4" viewBox="0 0 8 10"><path d="M7.4 0.4v9.2L0.6 5z" fill="#3a3a3a"/></svg>
<svg style="left:1163.6px;top:698.2px" width="8" height="10.4" viewBox="0 0 8 10"><path d="M0.6 0.4v9.2L7.4 5z" fill="#3a3a3a"/></svg>
<div style="left:566.30px;top:696.30px;width:106.50px;height:14.20px;background:#454545;border-radius:7px;"></div>
<!-- cie -->
<div style="left:1183.00px;top:120.00px;width:733.60px;height:592.90px;background:#1d1d1d;"></div>
<div style="left:1190.20px;top:127.50px;width:721.70px;height:577.70px;background:#333;"></div>
<div style="left:1230.00px;top:152.00px;width:678.90px;height:522.60px;background:#222;"></div>
<div style="left:1230.0px;top:152.0px;width:678.9px;height:522.6px;overflow:hidden;"><div style="left:0;top:0;width:678.9px;height:522.6px;clip-path:polygon(290.0px 509.0px,289.9px 509.0px,289.9px 508.9px,289.8px 509.0px,289.7px 509.1px,289.5px 509.1px,289.3px 509.1px,289.1px 509.0px,289.0px 509.2px,288.9px 509.3px,288.8px 509.5px,288.6px 509.5px,288.4px 509.5px,288.0px 509.5px,287.7px 509.5px,287.4px 509.5px,287.0px 509.5px,286.6px 509.4px,286.2px 509.3px,285.6px 509.1px,284.8px 508.6px,283.7px 508.0px,282.5px 507.2px,281.2px 506.2px,279.6px 505.0px,277.9px 503.6px,275.8px 502.0px,273.5px 500.2px,270.9px 498.0px,268.1px 495.6px,265.1px 493.0px,261.7px 490.1px,257.9px 487.0px,253.7px 483.6px,249.1px 479.7px,244.0px 475.5px,238.5px 471.0px,232.6px 466.1px,226.2px 460.6px,219.3px 454.4px,211.9px 447.6px,204.0px 439.9px,195.4px 431.1px,185.8px 420.4px,174.8px 407.3px,162.7px 392.0px,149.8px 374.9px,136.4px 355.8px,122.3px 334.8px,107.9px 311.9px,93.4px 287.8px,79.1px 263.1px,65.3px 237.9px,52.6px 212.9px,41.5px 188.6px,31.7px 165.4px,23.2px 143.7px,16.2px 123.9px,10.7px 106.3px,6.6px 90.8px,3.8px 77.2px,2.1px 65.5px,1.5px 55.5px,1.8px 46.9px,3.0px 39.4px,5.1px 33.1px,8.1px 27.8px,11.7px 23.5px,16.0px 20.1px,20.8px 17.6px,26.0px 15.9px,31.6px 14.7px,37.5px 14.0px,43.7px 13.5px,50.0px 13.3px,56.5px 13.2px,62.9px 13.2px,69.3px 13.3px,75.8px 13.5px,82.5px 13.8px,89.4px 14.2px,96.5px 14.6px,103.8px 15.2px,111.3px 15.8px,119.1px 16.5px,127.2px 17.2px,135.6px 18.1px,144.4px 19.0px,153.5px 19.9px,163.0px 20.9px,172.8px 22.0px,183.1px 23.2px,193.8px 24.4px,205.0px 25.6px,216.6px 26.9px,228.7px 28.3px,241.3px 29.7px,254.3px 31.2px,267.8px 32.8px,281.8px 34.4px,296.2px 36.1px,311.1px 37.8px,326.4px 39.5px,342.0px 41.3px,358.0px 43.2px,374.3px 45.0px,390.8px 46.9px,407.4px 48.8px,423.8px 50.7px,439.8px 52.6px,455.7px 54.4px,471.5px 56.2px,487.0px 58.0px,502.0px 59.7px,516.2px 61.3px,529.8px 62.9px,542.8px 64.4px,555.0px 65.8px,566.6px 67.1px,577.4px 68.4px,587.5px 69.5px,596.9px 70.6px,605.6px 71.6px,613.7px 72.6px,621.3px 73.4px,628.5px 74.2px,635.2px 75.0px,641.7px 75.8px,647.6px 76.5px,653.2px 77.1px,658.4px 77.7px,663.2px 78.3px,667.6px 78.8px,671.6px 79.2px,675.0px 79.6px,678.1px 80.0px,681.0px 80.3px,683.6px 80.6px,685.9px 80.9px,688.0px 81.1px,689.8px 81.3px,691.3px 81.5px,692.6px 81.6px,693.7px 81.8px,694.8px 81.9px,695.8px 82.0px,696.8px 82.1px,697.6px 82.2px,698.4px 82.3px,699.3px 82.4px,700.1px 82.5px,700.9px 82.6px,701.7px 82.7px,702.3px 82.8px,702.8px 82.8px,703.1px 82.8px,703.4px 82.9px,703.6px 82.9px,703.8px 82.9px,703.9px 82.9px,704.0px 83.0px);"><div style="left:32px;top:12px;width:64px;height:2.5px;background:linear-gradient(90deg,#00ff00,#00ff00,#00ff00,#00ff00,#00ff00,#00ff00,#00ff00,#00ff00,#00ff00)"></div><div style="left:24px;top:14px;width:96px;height:2.5px;background:linear-gradient(90deg,#00ff04,#00ff03,#00ff02,#00ff00,#00ff00,#00ff00,#00ff00,#00ff00,#00ff00,#00ff00,#00ff00,#03ff00,#10ff00)"></div><div style="left:16px;top:16px;width:128px;height:2.5px;background:linear-gradient(90deg,#00ff08,#00ff07,#00ff06,#00ff05,#00ff03,#00ff02,#00ff01,#00ff00,#00ff00,#00ff00,#00ff00,#00ff00,#03ff00,#10ff00,#1dff00,#2bff00,#39ff00)"></div><div style="left:16px;top:18px;width:144px;height:2.5px;background:linear-gradient(90deg,#00ff0b,#00ff0a,#00ff09,#00ff08,#00ff07,#00ff05,#00ff04,#00ff03,#00ff02,#00ff00,#00ff00,#00ff00,#02ff00,#0fff00,#1cff00,#2aff00,#39ff00,#47ff00,#57ff00)"></div><div style="left:8px;top:20px;width:168px;height:2.5px;background:linear-gradient(90deg,#00ff0f,#00ff0e,#00ff0d,#00ff0c,#00ff0b,#00ff0a,#00ff08,#00ff07,#00ff06,#00ff05,#00ff04,#00ff02,#00ff01,#01ff00,#0eff00,#1cff00,#2aff00,#38ff00,#47ff00,#56ff00,#66ff00,#77ff00)"></div><div style="left:8px;top:22px;width:192px;height:2.5px;background:linear-gradient(90deg,#00ff12,#00ff11,#00ff10,#00ff0f,#00ff0e,#00ff0d,#00ff0c,#00ff0a,#00ff09,#00ff08,#00ff07,#00ff06,#00ff05,#00ff03,#0eff02,#1bff00,#29ff00,#37ff00,#46ff00,#56ff00,#66ff00,#77ff00,#88ff00,#9aff00,#acff00)"></div><div style="left:8px;top:24px;width:208px;height:2.5px;background:linear-gradient(90deg,#00ff14,#00ff14,#00ff13,#00ff12,#00ff11,#00ff10,#00ff0f,#00ff0e,#00ff0d,#00ff0b,#00ff0a,#00ff09,#00ff08,#00ff07,#0dff05,#1aff04,#28ff03,#37ff01,#46ff00,#55ff00,#66ff00,#76ff00,#88ff00,#9aff00,#acff00,#c0ff00,#d4ff00)"></div><div style="left:8px;top:26px;width:224px;height:2.5px;background:linear-gradient(90deg,#00ff17,#00ff17,#00ff16,#00ff15,#00ff14,#00ff13,#00ff12,#00ff11,#00ff10,#00ff0f,#00ff0e,#00ff0d,#00ff0b,#00ff0a,#0cff09,#1aff08,#28ff06,#36ff05,#45ff03,#55ff02,#65ff00,#76ff00,#87ff00,#9aff00,#acff00,#c0ff00,#d4ff00,#eaff00,#fffe00)"></div><div style="left:0px;top:28px;width:248px;height:2.5px;background:linear-gradient(90deg,#00ff1b,#00ff1a,#00ff1a,#00ff19,#00ff18,#00ff17,#00ff16,#00ff15,#00ff14,#00ff13,#00ff12,#00ff11,#00ff10,#00ff0f,#00ff0e,#0bff0c,#19ff0b,#27ff0a,#36ff09,#45ff07,#55ff06,#65ff04,#76ff03,#87ff01,#9aff00,#acff00,#c0ff00,#d5ff00,#eaff00,#fffe00,#ffe900,#ffd600)"></div><div style="left:0px;top:30px;width:264px;height:2.5px;background:linear-gradient(90deg,#00ff1e,#00ff1d,#00ff1d,#00ff1c,#00ff1b,#00ff1a,#00ff19,#00ff18,#00ff17,#00ff16,#00ff15,#00ff14,#00ff13,#00ff12,#00ff11,#0bff10,#18ff0f,#27ff0e,#35ff0c,#44ff0b,#54ff0a,#65ff08,#76ff07,#87ff05,#99ff04,#acff02,#c0ff00,#d5ff00,#eaff00,#fffd00,#ffe800,#ffd500,#ffc500,#ffb600)"></div><div style="left:0px;top:32px;width:280px;height:2.5px;background:linear-gradient(90deg,#00ff21,#00ff20,#00ff20,#00ff1f,#00ff1e,#00ff1d,#00ff1c,#00ff1c,#00ff1b,#00ff1a,#00ff19,#00ff18,#00ff17,#00ff16,#00ff15,#0aff14,#18ff13,#26ff11,#35ff10,#44ff0f,#54ff0e,#64ff0c,#75ff0b,#87ff09,#99ff08,#adff06,#c0ff05,#d5ff03,#ebff01,#fffd00,#ffe700,#ffd500,#ffc400,#ffb500,#ffa800,#ff9c00)"></div><div style="left:0px;top:34px;width:304px;height:2.5px;background:linear-gradient(90deg,#00ff24,#00ff23,#00ff23,#00ff22,#00ff21,#00ff20,#00ff20,#00ff1f,#00ff1e,#00ff1d,#00ff1c,#00ff1b,#00ff1a,#00ff19,#00ff18,#09ff17,#17ff16,#25ff15,#34ff14,#43ff13,#53ff12,#64ff10,#75ff0f,#87ff0e,#99ff0c,#adff0b,#c1ff09,#d5ff08,#ebff06,#fffc04,#ffe702,#ffd400,#ffc300,#ffb500,#ffa700,#ff9b00,#ff9000,#ff8600,#ff7d00)"></div><div style="left:0px;top:36px;width:320px;height:2.5px;background:linear-gradient(90deg,#00ff27,#00ff26,#00ff26,#00ff25,#00ff24,#00ff24,#00ff23,#00ff22,#00ff21,#00ff21,#00ff20,#00ff1f,#00ff1e,#00ff1d,#00ff1c,#08ff1b,#16ff1a,#25ff19,#33ff18,#43ff17,#53ff16,#63ff14,#75ff13,#87ff12,#99ff11,#adff0f,#c1ff0e,#d6ff0c,#ecff0b,#fffb09,#ffe606,#ffd304,#ffc303,#ffb401,#ffa700,#ff9b00,#ff9000,#ff8600,#ff7d00,#ff7400,#ff6d00)"></div><div style="left:0px;top:38px;width:336px;height:2.5px;background:linear-gradient(90deg,#00ff2a,#00ff2a,#00ff29,#00ff28,#00ff28,#00ff27,#00ff26,#00ff26,#00ff25,#00ff24,#00ff23,#00ff22,#00ff22,#00ff21,#00ff20,#08ff1f,#16ff1e,#24ff1d,#33ff1c,#42ff1b,#52ff1a,#63ff19,#74ff17,#86ff16,#99ff15,#adff14,#c1ff12,#d6ff11,#ecff0f,#fffb0d,#ffe60b,#ffd309,#ffc206,#ffb305,#ffa603,#ff9a02,#ff8f00,#ff8500,#ff7c00,#ff7400,#ff6c00,#ff6500,#ff5e00)"></div><div style="left:0px;top:40px;width:352px;height:2.5px;background:linear-gradient(90deg,#00ff2d,#00ff2d,#00ff2c,#00ff2b,#00ff2b,#00ff2a,#00ff2a,#00ff29,#00ff28,#00ff27,#00ff27,#00ff26,#00ff25,#00ff24,#00ff24,#07ff23,#15ff22,#23ff21,#32ff20,#42ff1f,#52ff1e,#63ff1d,#74ff1c,#86ff1b,#99ff19,#adff18,#c1ff17,#d6ff15,#edff14,#fffa12,#ffe50f,#ffd20d,#ffc10a,#ffb308,#ffa506,#ff9905,#ff8e03,#ff8402,#ff7b01,#ff7300,#ff6b00,#ff6400,#ff5e00,#ff5700,#ff5200)"></div><div style="left:0px;top:42px;width:368px;height:2.5px;background:linear-gradient(90deg,#00ff30,#00ff30,#00ff2f,#00ff2f,#00ff2e,#00ff2d,#00ff2d,#00ff2c,#00ff2c,#00ff2b,#00ff2a,#00ff2a,#00ff29,#00ff28,#00ff27,#06ff27,#14ff26,#23ff25,#32ff24,#41ff23,#52ff22,#62ff21,#74ff20,#86ff1f,#99ff1e,#adff1d,#c1ff1b,#d7ff1a,#edff19,#fffa17,#ffe414,#ffd111,#ffc10e,#ffb20c,#ffa50a,#ff9908,#ff8e07,#ff8405,#ff7b04,#ff7202,#ff6b01,#ff6400,#ff5d00,#ff5700,#ff5100,#ff4c00,#ff4700)"></div><div style="left:0px;top:44px;width:384px;height:2.5px;background:linear-gradient(90deg,#00ff33,#00ff33,#00ff32,#00ff32,#00ff31,#00ff31,#00ff30,#00ff30,#00ff2f,#00ff2e,#00ff2e,#00ff2d,#00ff2d,#00ff2c,#00ff2b,#05ff2a,#13ff2a,#22ff29,#31ff28,#41ff27,#51ff26,#62ff25,#74ff24,#86ff23,#99ff22,#adff21,#c1ff20,#d7ff1f,#edff1e,#fff91c,#ffe418,#ffd115,#ffc012,#ffb110,#ffa40e,#ff980c,#ff8d0a,#ff8308,#ff7a07,#ff7205,#ff6a04,#ff6303,#ff5c02,#ff5601,#ff5000,#ff4b00,#ff4600,#ff4100,#ff3d00)"></div><div style="left:0px;top:46px;width:408px;height:2.5px;background:linear-gradient(90deg,#00ff37,#00ff36,#00ff36,#00ff35,#00ff35,#00ff34,#00ff34,#00ff33,#00ff33,#00ff32,#00ff31,#00ff31,#00ff30,#00ff30,#00ff2f,#04ff2e,#13ff2e,#21ff2d,#30ff2c,#40ff2b,#51ff2b,#62ff2a,#73ff29,#86ff28,#99ff27,#adff26,#c1ff25,#d7ff24,#eeff23,#fff921,#ffe31d,#ffd019,#ffbf16,#ffb114,#ffa311,#ff970f,#ff8c0d,#ff820b,#ff7909,#ff7108,#ff6907,#ff6205,#ff5c04,#ff5603,#ff5002,#ff4b01,#ff4600,#ff4100,#ff3d00,#ff3800,#ff3400,#ff3100)"></div><div style="left:0px;top:48px;width:424px;height:2.5px;background:linear-gradient(90deg,#00ff3a,#00ff39,#00ff39,#00ff38,#00ff38,#00ff38,#00ff37,#00ff37,#00ff36,#00ff36,#00ff35,#00ff35,#00ff34,#00ff33,#00ff33,#04ff32,#12ff32,#21ff31,#30ff30,#40ff30,#50ff2f,#61ff2e,#73ff2d,#85ff2c,#99ff2c,#adff2b,#c2ff2a,#d7ff29,#eeff28,#fff826,#ffe221,#ffd01e,#ffbf1a,#ffb017,#ffa315,#ff9712,#ff8c10,#ff820e,#ff790c,#ff700b,#ff6909,#ff6208,#ff5b07,#ff5505,#ff4f04,#ff4a03,#ff4502,#ff4001,#ff3c00,#ff3800,#ff3400,#ff3000,#ff2d00,#ff2900)"></div><div style="left:0px;top:50px;width:440px;height:2.5px;background:linear-gradient(90deg,#00ff3d,#00ff3d,#00ff3c,#00ff3c,#00ff3b,#00ff3b,#00ff3b,#00ff3a,#00ff3a,#00ff39,#00ff39,#00ff38,#00ff38,#00ff37,#00ff37,#03ff36,#11ff36,#20ff35,#2fff34,#3fff34,#50ff33,#61ff32,#73ff32,#85ff31,#99ff30,#adff2f,#c2ff2f,#d8ff2e,#efff2d,#fff72b,#ffe226,#ffcf22,#ffbe1e,#ffaf1b,#ffa218,#ff9616,#ff8b13,#ff8111,#ff780f,#ff700e,#ff680c,#ff610a,#ff5a09,#ff5408,#ff4f07,#ff4905,#ff4404,#ff4003,#ff3b02,#ff3702,#ff3301,#ff3000,#ff2c00,#ff2900,#ff2600,#ff2300)"></div><div style="left:0px;top:52px;width:456px;height:2.5px;background:linear-gradient(90deg,#00ff40,#00ff40,#00ff3f,#00ff3f,#00ff3f,#00ff3e,#00ff3e,#00ff3e,#00ff3d,#00ff3d,#00ff3c,#00ff3c,#00ff3c,#00ff3b,#00ff3b,#02ff3a,#10ff3a,#1fff39,#2fff39,#3fff38,#4fff38,#60ff37,#72ff36,#85ff36,#99ff35,#adff34,#c2ff34,#d8ff33,#efff32,#fff730,#ffe12b,#ffce26,#ffbd22,#ffaf1f,#ffa11c,#ff9519,#ff8a17,#ff8014,#ff7712,#ff6f10,#ff670f,#ff600d,#ff5a0c,#ff540a,#ff4e09,#ff4908,#ff4407,#ff3f06,#ff3b05,#ff3704,#ff3303,#ff2f02,#ff2c01,#ff2800,#ff2500,#ff2200,#ff2000,#ff1d00)"></div><div style="left:0px;top:54px;width:472px;height:2.5px;background:linear-gradient(90deg,#00ff43,#00ff43,#00ff43,#00ff42,#00ff42,#00ff42,#00ff42,#00ff41,#00ff41,#00ff41,#00ff40,#00ff40,#00ff3f,#00ff3f,#00ff3f,#01ff3e,#10ff3e,#1eff3d,#2eff3d,#3eff3c,#4fff3c,#60ff3b,#72ff3b,#85ff3a,#98ff3a,#adff39,#c2ff39,#d8ff38,#f0ff37,#fff635,#ffe12f,#ffce2b,#ffbd27,#ffae23,#ffa020,#ff941d,#ff8a1a,#ff8018,#ff7715,#ff6e13,#ff6711,#ff6010,#ff590e,#ff530d,#ff4d0b,#ff480a,#ff4309,#ff3f08,#ff3a07,#ff3606,#ff3205,#ff2f04,#ff2b03,#ff2802,#ff2501,#ff2201,#ff1f00,#ff1c00,#ff1a00,#ff1700)"></div><div style="left:0px;top:56px;width:496px;height:2.5px;background:linear-gradient(90deg,#00ff47,#00ff46,#00ff46,#00ff46,#00ff46,#00ff45,#00ff45,#00ff45,#00ff45,#00ff44,#00ff44,#00ff44,#00ff43,#00ff43,#00ff43,#00ff42,#0fff42,#1eff42,#2dff41,#3dff41,#4eff40,#60ff40,#72ff40,#85ff3f,#98ff3f,#adff3e,#c2ff3e,#d9ff3d,#f0ff3c,#fff63a,#ffe034,#ffcd2f,#ffbc2b,#ffad27,#ffa023,#ff9420,#ff891d,#ff7f1b,#ff7618,#ff6e16,#ff6614,#ff5f12,#ff5811,#ff520f,#ff4d0e,#ff470c,#ff430b,#ff3e0a,#ff3a09,#ff3508,#ff3207,#ff2e06,#ff2b05,#ff2704,#ff2403,#ff2102,#ff1e02,#ff1c01,#ff1900,#ff1700,#ff1500,#ff1200,#ff1000)"></div><div style="left:0px;top:58px;width:512px;height:2.5px;background:linear-gradient(90deg,#00ff4a,#00ff4a,#00ff49,#00ff49,#00ff49,#00ff49,#00ff49,#00ff48,#00ff48,#00ff48,#00ff48,#00ff48,#00ff47,#00ff47,#00ff47,#00ff47,#0eff46,#1dff46,#2dff46,#3dff45,#4eff45,#5fff45,#71ff44,#84ff44,#98ff44,#adff43,#c2ff43,#d9ff42,#f1ff42,#fff53f,#ffdf39,#ffcc33,#ffbb2f,#ffac2b,#ff9f27,#ff9324,#ff8821,#ff7e1e,#ff751b,#ff6d19,#ff6517,#ff5e15,#ff5813,#ff5212,#ff4c10,#ff470f,#ff420d,#ff3d0c,#ff390b,#ff350a,#ff3109,#ff2d08,#ff2a07,#ff2706,#ff2405,#ff2104,#ff1e03,#ff1b03,#ff1902,#ff1601,#ff1401,#ff1200,#ff1000,#ff0e00,#ff0c00)"></div><div style="left:0px;top:60px;width:528px;height:2.5px;background:linear-gradient(90deg,#00ff4d,#00ff4d,#00ff4d,#00ff4d,#00ff4d,#00ff4c,#00ff4c,#00ff4c,#00ff4c,#00ff4c,#00ff4c,#00ff4b,#00ff4b,#00ff4b,#00ff4b,#00ff4b,#0dff4b,#1cff4a,#2cff4a,#3cff4a,#4dff4a,#5fff49,#71ff49,#84ff49,#98ff49,#adff48,#c3ff48,#d9ff48,#f1ff47,#fff444,#ffdf3e,#ffcc38,#ffbb33,#ffac2f,#ff9e2b,#ff9227,#ff8724,#ff7e21,#ff741e,#ff6c1c,#ff651a,#ff5e18,#ff5716,#ff5114,#ff4b12,#ff4611,#ff410f,#ff3d0e,#ff380d,#ff340c,#ff300b,#ff2d09,#ff2908,#ff2608,#ff2307,#ff2006,#ff1d05,#ff1b04,#ff1803,#ff1603,#ff1402,#ff1101,#ff0f01,#ff0d00,#ff0b00,#ff0900,#ff0800)"></div><div style="left:0px;top:62px;width:544px;height:2.5px;background:linear-gradient(90deg,#00ff50,#00ff50,#00ff50,#00ff50,#00ff50,#00ff50,#00ff50,#00ff50,#00ff50,#00ff50,#00ff50,#00ff4f,#00ff4f,#00ff4f,#00ff4f,#00ff4f,#0cff4f,#1cff4f,#2bff4f,#3cff4e,#4dff4e,#5eff4e,#71ff4e,#84ff4e,#98ff4e,#adff4d,#c3ff4d,#daff4d,#f2ff4d,#fff449,#ffde42,#ffcb3c,#ffba37,#ffab33,#ff9e2e,#ff922b,#ff8727,#ff7d24,#ff7422,#ff6c1f,#ff641d,#ff5d1a,#ff5618,#ff5017,#ff4b15,#ff4613,#ff4112,#ff3c10,#ff380f,#ff340e,#ff300d,#ff2c0b,#ff290a,#ff2609,#ff2308,#ff2007,#ff1d07,#ff1a06,#ff1805,#ff1504,#ff1304,#ff1103,#ff0f02,#ff0d02,#ff0b01,#ff0900,#ff0700,#ff0600,#ff0400)"></div><div style="left:0px;top:64px;width:560px;height:2.5px;background:linear-gradient(90deg,#00ff54,#00ff54,#00ff54,#00ff54,#00ff54,#00ff54,#00ff54,#00ff54,#00ff54,#00ff54,#00ff53,#00ff53,#00ff53,#00ff53,#00ff53,#00ff53,#0cff53,#1bff53,#2bff53,#3bff53,#4cff53,#5eff53,#70ff53,#84ff53,#98ff53,#adff53,#c3ff52,#daff52,#f2ff52,#fff34e,#ffdd47,#ffca41,#ffb93b,#ffaa37,#ff9d32,#ff912e,#ff862b,#ff7c28,#ff7325,#ff6b22,#ff631f,#ff5c1d,#ff561b,#ff5019,#ff4a17,#ff4516,#ff4014,#ff3b12,#ff3711,#ff3310,#ff2f0e,#ff2c0d,#ff280c,#ff250b,#ff220a,#ff1f09,#ff1c08,#ff1a07,#ff1707,#ff1506,#ff1305,#ff1004,#ff0e04,#ff0c03,#ff0a02,#ff0902,#ff0701,#ff0501,#ff0300,#ff0200,#ff0000)"></div><div style="left:0px;top:66px;width:576px;height:2.5px;background:linear-gradient(90deg,#00ff57,#00ff57,#00ff57,#00ff57,#00ff57,#00ff57,#00ff57,#00ff57,#00ff57,#00ff57,#00ff57,#00ff57,#00ff57,#00ff57,#00ff58,#00ff58,#0bff58,#1aff58,#2aff58,#3aff58,#4cff58,#5eff58,#70ff58,#84ff58,#98ff58,#adff58,#c3ff58,#daff58,#f3ff58,#fff354,#ffdd4c,#ffc946,#ffb940,#ffaa3b,#ff9c36,#ff9032,#ff852e,#ff7b2b,#ff7228,#ff6a25,#ff6322,#ff5c20,#ff551e,#ff4f1c,#ff491a,#ff4418,#ff3f16,#ff3b15,#ff3713,#ff3312,#ff2f10,#ff2b0f,#ff280e,#ff250d,#ff220c,#ff1f0b,#ff1c0a,#ff1909,#ff1708,#ff1407,#ff1207,#ff1006,#ff0e05,#ff0c05,#ff0a04,#ff0803,#ff0603,#ff0502,#ff0301,#ff0101,#ff0000,#ff0000,#ff0000)"></div><div style="left:0px;top:68px;width:600px;height:2.5px;background:linear-gradient(90deg,#00ff5b,#00ff5b,#00ff5b,#00ff5b,#00ff5b,#00ff5b,#00ff5b,#00ff5b,#00ff5b,#00ff5b,#00ff5b,#00ff5c,#00ff5c,#00ff5c,#00ff5c,#00ff5c,#0aff5c,#19ff5c,#29ff5c,#3aff5c,#4bff5c,#5dff5d,#70ff5d,#83ff5d,#98ff5d,#adff5d,#c3ff5d,#dbff5d,#f3ff5e,#fff259,#ffdc51,#ffc94a,#ffb844,#ffa93f,#ff9b3a,#ff8f36,#ff8432,#ff7b2e,#ff722b,#ff6928,#ff6225,#ff5b23,#ff5420,#ff4e1e,#ff491c,#ff441a,#ff3f18,#ff3a17,#ff3615,#ff3214,#ff2e12,#ff2b11,#ff2710,#ff240f,#ff210e,#ff1e0d,#ff1b0c,#ff190b,#ff160a,#ff1409,#ff1208,#ff0f07,#ff0d07,#ff0b06,#ff0a05,#ff0805,#ff0604,#ff0403,#ff0303,#ff0102,#ff0002,#ff0001,#ff0001,#ff0000,#ff0000,#ff0000)"></div><div style="left:0px;top:70px;width:616px;height:2.5px;background:linear-gradient(90deg,#00ff5e,#00ff5e,#00ff5e,#00ff5e,#00ff5f,#00ff5f,#00ff5f,#00ff5f,#00ff5f,#00ff5f,#00ff5f,#00ff60,#00ff60,#00ff60,#00ff60,#00ff60,#09ff60,#19ff61,#29ff61,#39ff61,#4bff61,#5dff62,#70ff62,#83ff62,#98ff62,#adff63,#c4ff63,#dbff63,#f4ff63,#fff15e,#ffdb56,#ffc84f,#ffb748,#ffa843,#ff9b3e,#ff8f39,#ff8435,#ff7a31,#ff712e,#ff692b,#ff6128,#ff5a25,#ff5423,#ff4e21,#ff481f,#ff431d,#ff3e1b,#ff3a19,#ff3517,#ff3116,#ff2e14,#ff2a13,#ff2712,#ff2311,#ff200f,#ff1e0e,#ff1b0d,#ff180c,#ff160b,#ff130b,#ff110a,#ff0f09,#ff0d08,#ff0b07,#ff0907,#ff0706,#ff0505,#ff0405,#ff0204,#ff0103,#ff0003,#ff0002,#ff0002,#ff0001,#ff0001,#ff0000,#ff0000,#ff0000)"></div><div style="left:0px;top:72px;width:632px;height:2.5px;background:linear-gradient(90deg,#00ff62,#00ff62,#00ff62,#00ff62,#00ff62,#00ff62,#00ff63,#00ff63,#00ff63,#00ff63,#00ff64,#00ff64,#00ff64,#00ff64,#00ff64,#00ff65,#08ff65,#18ff65,#28ff66,#39ff66,#4aff66,#5cff67,#6fff67,#83ff67,#98ff68,#adff68,#c4ff68,#dbff69,#f4ff69,#fff164,#ffdb5b,#ffc754,#ffb64d,#ffa747,#ff9a42,#ff8e3d,#ff8339,#ff7935,#ff7031,#ff682e,#ff602b,#ff5928,#ff5326,#ff4d23,#ff4821,#ff421f,#ff3e1d,#ff391b,#ff351a,#ff3118,#ff2d16,#ff2915,#ff2614,#ff2312,#ff2011,#ff1d10,#ff1a0f,#ff180e,#ff150d,#ff130c,#ff110b,#ff0f0a,#ff0c0a,#ff0a09,#ff0908,#ff0707,#ff0507,#ff0306,#ff0205,#ff0005,#ff0004,#ff0004,#ff0003,#ff0003,#ff0002,#ff0002,#ff0001,#ff0001,#ff0000,#ff0000)"></div><div style="left:0px;top:74px;width:648px;height:2.5px;background:linear-gradient(90deg,#00ff65,#00ff65,#00ff66,#00ff66,#00ff66,#00ff66,#00ff67,#00ff67,#00ff67,#00ff67,#00ff68,#00ff68,#00ff68,#00ff69,#00ff69,#00ff69,#07ff6a,#17ff6a,#27ff6a,#38ff6b,#4aff6b,#5cff6c,#6fff6c,#83ff6d,#97ff6d,#adff6e,#c4ff6e,#dcff6f,#f5ff6f,#fff069,#ffda60,#ffc758,#ffb651,#ffa74b,#ff9945,#ff8d40,#ff823c,#ff7838,#ff6f34,#ff6731,#ff602e,#ff592b,#ff5228,#ff4c26,#ff4723,#ff4221,#ff3d1f,#ff381d,#ff341c,#ff301a,#ff2c18,#ff2917,#ff2616,#ff2214,#ff1f13,#ff1c12,#ff1a11,#ff1710,#ff150f,#ff120e,#ff100d,#ff0e0c,#ff0c0b,#ff0a0a,#ff0809,#ff0609,#ff0508,#ff0307,#ff0107,#ff0006,#ff0005,#ff0005,#ff0004,#ff0004,#ff0003,#ff0003,#ff0002,#ff0002,#ff0001,#ff0001,#ff0000,#ff0000)"></div><div style="left:0px;top:76px;width:664px;height:2.5px;background:linear-gradient(90deg,#00ff69,#00ff69,#00ff69,#00ff69,#00ff6a,#00ff6a,#00ff6a,#00ff6b,#00ff6b,#00ff6b,#00ff6c,#00ff6c,#00ff6d,#00ff6d,#00ff6d,#00ff6e,#07ff6e,#16ff6f,#26ff6f,#37ff70,#49ff70,#5bff71,#6eff71,#82ff72,#97ff73,#adff73,#c4ff74,#dcff75,#f5ff75,#ffef6f,#ffd965,#ffc65d,#ffb556,#ffa64f,#ff9849,#ff8c44,#ff823f,#ff783b,#ff6f37,#ff6734,#ff5f31,#ff582e,#ff522b,#ff4c28,#ff4626,#ff4124,#ff3c22,#ff3820,#ff341e,#ff301c,#ff2c1b,#ff2819,#ff2518,#ff2216,#ff1f15,#ff1c14,#ff1912,#ff1711,#ff1410,#ff120f,#ff100e,#ff0e0d,#ff0b0d,#ff0a0c,#ff080b,#ff060a,#ff0409,#ff0209,#ff0108,#ff0007,#ff0007,#ff0006,#ff0005,#ff0005,#ff0004,#ff0004,#ff0003,#ff0003,#ff0002,#ff0002,#ff0001,#ff0001,#ff0001,#ff0000)"></div><div style="left:0px;top:78px;width:680px;height:2.5px;background:linear-gradient(90deg,#00ff6c,#00ff6d,#00ff6d,#00ff6d,#00ff6e,#00ff6e,#00ff6e,#00ff6f,#00ff6f,#00ff70,#00ff70,#00ff70,#00ff71,#00ff71,#00ff72,#00ff72,#06ff73,#15ff73,#26ff74,#37ff75,#48ff75,#5bff76,#6eff77,#82ff77,#97ff78,#adff79,#c4ff7a,#dcff7b,#f6ff7b,#ffef75,#ffd86a,#ffc562,#ffb45a,#ffa553,#ff984d,#ff8c48,#ff8143,#ff773f,#ff6e3b,#ff6637,#ff5e34,#ff5730,#ff512e,#ff4b2b,#ff4628,#ff4026,#ff3c24,#ff3722,#ff3320,#ff2f1e,#ff2b1d,#ff281b,#ff2419,#ff2118,#ff1e17,#ff1b15,#ff1914,#ff1613,#ff1412,#ff1111,#ff0f10,#ff0d0f,#ff0b0e,#ff090d,#ff070c,#ff050c,#ff040b,#ff020a,#ff0009,#ff0009,#ff0008,#ff0007,#ff0007,#ff0006,#ff0006,#ff0005,#ff0004,#ff0004,#ff0003,#ff0003,#ff0002,#ff0002,#ff0002,#ff0001,#ff0001,#ff0000)"></div><div style="left:0px;top:80px;width:680px;height:2.5px;background:linear-gradient(90deg,#00ff70,#00ff70,#00ff71,#00ff71,#00ff71,#00ff72,#00ff72,#00ff73,#00ff73,#00ff74,#00ff74,#00ff75,#00ff75,#00ff76,#00ff76,#00ff77,#05ff78,#15ff78,#25ff79,#36ff7a,#48ff7a,#5aff7b,#6eff7c,#82ff7d,#97ff7e,#adff7f,#c4ff80,#ddff81,#f6ff82,#ffee7a,#ffd870,#ffc467,#ffb35f,#ffa458,#ff9751,#ff8b4c,#ff8047,#ff7642,#ff6d3e,#ff653a,#ff5e36,#ff5733,#ff5030,#ff4a2d,#ff452b,#ff4028,#ff3b26,#ff3624,#ff3222,#ff2e20,#ff2b1f,#ff271d,#ff241b,#ff211a,#ff1e19,#ff1b17,#ff1816,#ff1615,#ff1314,#ff1113,#ff0f11,#ff0d10,#ff0b10,#ff090f,#ff070e,#ff050d,#ff030c,#ff020b,#ff000b,#ff000a,#ff0009,#ff0009,#ff0008,#ff0007,#ff0007,#ff0006,#ff0006,#ff0005,#ff0004,#ff0004,#ff0003,#ff0003,#ff0003,#ff0002,#ff0002,#ff0001)"></div><div style="left:0px;top:82px;width:680px;height:2.5px;background:linear-gradient(90deg,#00ff73,#00ff74,#00ff74,#00ff75,#00ff75,#00ff76,#00ff76,#00ff77,#00ff77,#00ff78,#00ff78,#00ff79,#00ff7a,#00ff7a,#00ff7b,#00ff7c,#04ff7c,#14ff7d,#24ff7e,#35ff7f,#47ff80,#5aff81,#6dff81,#82ff82,#97ff83,#adff85,#c5ff86,#ddff87,#f7ff88,#ffed80,#ffd775,#ffc46b,#ffb363,#ffa45c,#ff9655,#ff8a4f,#ff7f4a,#ff7545,#ff6d41,#ff643d,#ff5d39,#ff5636,#ff5033,#ff4a30,#ff442d,#ff3f2b,#ff3a29,#ff3626,#ff3224,#ff2e22,#ff2a21,#ff271f,#ff231d,#ff201c,#ff1d1a,#ff1a19,#ff1818,#ff1516,#ff1315,#ff1014,#ff0e13,#ff0c12,#ff0a11,#ff0810,#ff060f,#ff040e,#ff030d,#ff010d,#ff000c,#ff000b,#ff000a,#ff000a,#ff0009,#ff0008,#ff0008,#ff0007,#ff0007,#ff0006,#ff0006,#ff0005,#ff0005,#ff0004,#ff0004,#ff0003,#ff0003,#ff0002)"></div><div style="left:0px;top:84px;width:680px;height:2.5px;background:linear-gradient(90deg,#00ff77,#00ff78,#00ff78,#00ff79,#00ff79,#00ff7a,#00ff7a,#00ff7b,#00ff7c,#00ff7c,#00ff7d,#00ff7d,#00ff7e,#00ff7f,#00ff80,#00ff80,#03ff81,#13ff82,#23ff83,#35ff84,#47ff85,#59ff86,#6dff87,#82ff88,#97ff89,#adff8a,#c5ff8c,#deff8d,#f7ff8e,#ffed86,#ffd67a,#ffc370,#ffb268,#ffa360,#ff9559,#ff8953,#ff7e4e,#ff7549,#ff6c44,#ff6440,#ff5c3c,#ff5539,#ff4f36,#ff4933,#ff4430,#ff3e2d,#ff3a2b,#ff3529,#ff3127,#ff2d25,#ff2923,#ff2621,#ff231f,#ff201e,#ff1d1c,#ff1a1b,#ff1719,#ff1518,#ff1217,#ff1016,#ff0e15,#ff0c14,#ff0a13,#ff0812,#ff0611,#ff0410,#ff020f,#ff010e,#ff000d,#ff000c,#ff000c,#ff000b,#ff000a,#ff000a,#ff0009,#ff0008,#ff0008,#ff0007,#ff0007,#ff0006,#ff0006,#ff0005,#ff0005,#ff0004,#ff0004,#ff0003)"></div><div style="left:0px;top:86px;width:680px;height:2.5px;background:linear-gradient(90deg,#00ff7b,#00ff7b,#00ff7c,#00ff7c,#00ff7d,#00ff7e,#00ff7e,#00ff7f,#00ff80,#00ff80,#00ff81,#00ff82,#00ff83,#00ff84,#00ff84,#00ff85,#02ff86,#12ff87,#23ff88,#34ff89,#46ff8a,#59ff8b,#6dff8d,#81ff8e,#97ff8f,#adff90,#c5ff92,#deff93,#f8ff95,#ffec8b,#ffd680,#ffc275,#ffb16c,#ffa264,#ff955d,#ff8957,#ff7e51,#ff744c,#ff6b48,#ff6343,#ff5b3f,#ff553c,#ff4e38,#ff4835,#ff4332,#ff3e30,#ff392d,#ff352b,#ff3029,#ff2d27,#ff2925,#ff2523,#ff2221,#ff1f20,#ff1c1e,#ff191d,#ff171b,#ff141a,#ff1219,#ff0f17,#ff0d16,#ff0b15,#ff0914,#ff0713,#ff0512,#ff0411,#ff0210,#ff000f,#ff000f,#ff000e,#ff000d,#ff000c,#ff000c,#ff000b,#ff000a,#ff000a,#ff0009,#ff0008,#ff0008,#ff0007,#ff0007,#ff0006,#ff0006,#ff0005,#ff0005,#ff0004)"></div><div style="left:0px;top:88px;width:680px;height:2.5px;background:linear-gradient(90deg,#00ff7e,#00ff7f,#00ff80,#00ff80,#00ff81,#00ff82,#00ff82,#00ff83,#00ff84,#00ff85,#00ff86,#00ff86,#00ff87,#00ff88,#00ff89,#00ff8a,#01ff8b,#11ff8c,#22ff8d,#33ff8e,#46ff90,#58ff91,#6cff92,#81ff94,#97ff95,#adff97,#c5ff98,#deff9a,#f9ff9b,#ffeb91,#ffd585,#ffc17a,#ffb071,#ffa169,#ff9461,#ff885b,#ff7d55,#ff7350,#ff6a4b,#ff6246,#ff5b42,#ff543f,#ff4d3b,#ff4838,#ff4235,#ff3d32,#ff3830,#ff342d,#ff302b,#ff2c29,#ff2827,#ff2525,#ff2123,#ff1e21,#ff1b20,#ff191e,#ff161d,#ff141b,#ff111a,#ff0f19,#ff0d18,#ff0b17,#ff0916,#ff0714,#ff0513,#ff0313,#ff0112,#ff0011,#ff0010,#ff000f,#ff000e,#ff000e,#ff000d,#ff000c,#ff000b,#ff000b,#ff000a,#ff0009,#ff0009,#ff0008,#ff0008,#ff0007,#ff0007,#ff0006,#ff0006,#ff0005)"></div><div style="left:0px;top:90px;width:680px;height:2.5px;background:linear-gradient(90deg,#00ff82,#00ff83,#00ff84,#00ff84,#00ff85,#00ff86,#00ff87,#00ff87,#00ff88,#00ff89,#00ff8a,#00ff8b,#00ff8c,#00ff8d,#00ff8e,#00ff8f,#00ff90,#10ff91,#21ff93,#33ff94,#45ff95,#58ff97,#6cff98,#81ff99,#97ff9b,#adff9d,#c5ff9e,#dfffa0,#f9ffa2,#ffeb97,#ffd48a,#ffc17f,#ffaf76,#ffa06d,#ff9366,#ff875f,#ff7c59,#ff7253,#ff694e,#ff6149,#ff5a45,#ff5341,#ff4d3e,#ff473b,#ff4137,#ff3c35,#ff3832,#ff332f,#ff2f2d,#ff2b2b,#ff2829,#ff2427,#ff2125,#ff1e23,#ff1b22,#ff1820,#ff151f,#ff131d,#ff111c,#ff0e1b,#ff0c19,#ff0a18,#ff0817,#ff0616,#ff0415,#ff0314,#ff0113,#ff0012,#ff0011,#ff0010,#ff0010,#ff000f,#ff000e,#ff000d,#ff000d,#ff000c,#ff000b,#ff000b,#ff000a,#ff0009,#ff0009,#ff0008,#ff0008,#ff0007,#ff0007,#ff0006)"></div><div style="left:0px;top:92px;width:680px;height:2.5px;background:linear-gradient(90deg,#00ff86,#00ff87,#00ff87,#00ff88,#00ff89,#00ff8a,#00ff8b,#00ff8c,#00ff8d,#00ff8e,#00ff8e,#00ff90,#00ff91,#00ff92,#00ff93,#00ff94,#00ff95,#0fff96,#20ff98,#32ff99,#44ff9b,#58ff9c,#6cff9e,#81ff9f,#96ffa1,#adffa3,#c6ffa5,#dfffa7,#faffa9,#ffea9d,#ffd390,#ffc084,#ffaf7a,#ffa072,#ff926a,#ff8663,#ff7b5c,#ff7257,#ff6951,#ff614d,#ff5948,#ff5244,#ff4c41,#ff463d,#ff413a,#ff3c37,#ff3734,#ff3332,#ff2f2f,#ff2b2d,#ff272b,#ff2429,#ff2027,#ff1d25,#ff1a24,#ff1822,#ff1520,#ff121f,#ff101d,#ff0e1c,#ff0c1b,#ff0a1a,#ff0819,#ff0617,#ff0416,#ff0215,#ff0014,#ff0013,#ff0013,#ff0012,#ff0011,#ff0010,#ff000f,#ff000e,#ff000e,#ff000d,#ff000c,#ff000c,#ff000b,#ff000a,#ff000a,#ff0009,#ff0009,#ff0008,#ff0008,#ff0007)"></div><div style="left:0px;top:94px;width:680px;height:2.5px;background:linear-gradient(90deg,#00ff8a,#00ff8b,#00ff8b,#00ff8c,#00ff8d,#00ff8e,#00ff8f,#00ff90,#00ff91,#00ff92,#00ff93,#00ff94,#00ff95,#00ff96,#00ff98,#00ff99,#00ff9a,#0fff9c,#20ff9d,#31ff9f,#44ffa0,#57ffa2,#6bffa4,#80ffa5,#96ffa7,#aeffa9,#c6ffab,#dfffae,#faffb0,#ffe9a3,#ffd395,#ffbf89,#ffae7f,#ff9f76,#ff916e,#ff8567,#ff7b60,#ff715a,#ff6855,#ff6050,#ff584b,#ff5247,#ff4b43,#ff4640,#ff403d,#ff3b3a,#ff3637,#ff3234,#ff2e32,#ff2a2f,#ff262d,#ff232b,#ff2029,#ff1d27,#ff1a25,#ff1724,#ff1422,#ff1221,#ff101f,#ff0d1e,#ff0b1c,#ff091b,#ff071a,#ff0519,#ff0318,#ff0217,#ff0016,#ff0015,#ff0014,#ff0013,#ff0012,#ff0011,#ff0010,#ff0010,#ff000f,#ff000e,#ff000e,#ff000d,#ff000c,#ff000c,#ff000b,#ff000a,#ff000a,#ff0009,#ff0009,#ff0008)"></div><div style="left:0px;top:96px;width:680px;height:2.5px;background:linear-gradient(90deg,#00ff8e,#00ff8f,#00ff8f,#00ff90,#00ff91,#00ff92,#00ff93,#00ff94,#00ff95,#00ff96,#00ff98,#00ff99,#00ff9a,#00ff9b,#00ff9d,#00ff9e,#00ffa0,#0effa1,#1fffa3,#31ffa4,#43ffa6,#56ffa8,#6bffaa,#80ffac,#96ffae,#aeffb0,#c6ffb2,#e0ffb4,#fbffb7,#ffe9a9,#ffd29b,#ffbe8f,#ffad84,#ff9e7a,#ff9172,#ff856a,#ff7a64,#ff705e,#ff6758,#ff5f53,#ff584e,#ff514a,#ff4b46,#ff4543,#ff3f3f,#ff3a3c,#ff3639,#ff3136,#ff2d34,#ff2931,#ff262f,#ff222d,#ff1f2b,#ff1c29,#ff1927,#ff1625,#ff1424,#ff1122,#ff0f21,#ff0d1f,#ff0b1e,#ff091d,#ff071c,#ff051a,#ff0319,#ff0118,#ff0017,#ff0016,#ff0015,#ff0014,#ff0013,#ff0013,#ff0012,#ff0011,#ff0010,#ff000f,#ff000f,#ff000e,#ff000d,#ff000d,#ff000c,#ff000b,#ff000b,#ff000a,#ff000a,#ff0009)"></div><div style="left:8px;top:98px;width:672px;height:2.5px;background:linear-gradient(90deg,#00ff92,#00ff93,#00ff94,#00ff95,#00ff96,#00ff98,#00ff99,#00ff9a,#00ff9b,#00ff9c,#00ff9e,#00ff9f,#00ffa0,#00ffa2,#00ffa3,#00ffa5,#0dffa6,#1effa8,#30ffaa,#42ffac,#56ffae,#6affb0,#80ffb2,#96ffb4,#aeffb6,#c6ffb9,#e0ffbb,#fcffbe,#ffe8af,#ffd1a1,#ffbd94,#ffac89,#ff9d7f,#ff9076,#ff846e,#ff7967,#ff6f61,#ff665b,#ff5e56,#ff5751,#ff504d,#ff4a49,#ff4445,#ff3f42,#ff3a3f,#ff353b,#ff3139,#ff2d36,#ff2934,#ff2531,#ff222f,#ff1f2d,#ff1b2b,#ff1929,#ff1627,#ff1326,#ff1124,#ff0e23,#ff0c21,#ff0a20,#ff081e,#ff061d,#ff041c,#ff021b,#ff011a,#ff0019,#ff0018,#ff0017,#ff0016,#ff0015,#ff0014,#ff0013,#ff0012,#ff0011,#ff0011,#ff0010,#ff000f,#ff000e,#ff000e,#ff000d,#ff000d,#ff000c,#ff000b,#ff000b,#ff000a)"></div><div style="left:8px;top:100px;width:672px;height:2.5px;background:linear-gradient(90deg,#00ff96,#00ff97,#00ff99,#00ff9a,#00ff9b,#00ff9c,#00ff9d,#00ff9e,#00ffa0,#00ffa1,#00ffa2,#00ffa4,#00ffa5,#00ffa7,#00ffa8,#00ffaa,#0cffac,#1dffae,#2fffaf,#42ffb1,#55ffb4,#6affb6,#7fffb8,#96ffba,#aeffbd,#c7ffbf,#e1ffc2,#fcffc5,#ffe7b5,#ffd0a6,#ffbd99,#ffab8e,#ff9c83,#ff8f7a,#ff8372,#ff786b,#ff6e65,#ff665f,#ff5e59,#ff5655,#ff4f50,#ff494c,#ff4348,#ff3e44,#ff3941,#ff343e,#ff303b,#ff2c38,#ff2836,#ff2533,#ff2131,#ff1e2f,#ff1b2d,#ff182b,#ff1529,#ff1327,#ff1026,#ff0e24,#ff0c23,#ff0a21,#ff0820,#ff061f,#ff041d,#ff021c,#ff001b,#ff001a,#ff0019,#ff0018,#ff0017,#ff0016,#ff0015,#ff0014,#ff0013,#ff0013,#ff0012,#ff0011,#ff0010,#ff0010,#ff000f,#ff000e,#ff000e,#ff000d,#ff000c,#ff000c,#ff000b)"></div><div style="left:8px;top:102px;width:672px;height:2.5px;background:linear-gradient(90deg,#00ff9a,#00ff9c,#00ff9d,#00ff9e,#00ff9f,#00ffa0,#00ffa2,#00ffa3,#00ffa4,#00ffa6,#00ffa7,#00ffa9,#00ffaa,#00ffac,#00ffae,#00ffaf,#0bffb1,#1cffb3,#2effb5,#41ffb7,#55ffba,#6affbc,#7fffbe,#96ffc1,#aeffc4,#c7ffc6,#e1ffc9,#fdffcc,#ffe6bc,#ffd0ac,#ffbc9e,#ffab92,#ff9c88,#ff8e7f,#ff8276,#ff776f,#ff6e68,#ff6562,#ff5d5d,#ff5558,#ff4f53,#ff484f,#ff434b,#ff3d47,#ff3844,#ff3440,#ff2f3d,#ff2b3b,#ff2838,#ff2435,#ff2133,#ff1d31,#ff1a2f,#ff172d,#ff152b,#ff1229,#ff1027,#ff0d26,#ff0b24,#ff0923,#ff0721,#ff0520,#ff031f,#ff011e,#ff001c,#ff001b,#ff001a,#ff0019,#ff0018,#ff0017,#ff0016,#ff0015,#ff0015,#ff0014,#ff0013,#ff0012,#ff0011,#ff0011,#ff0010,#ff000f,#ff000f,#ff000e,#ff000d,#ff000d,#ff000c)"></div><div style="left:8px;top:104px;width:672px;height:2.5px;background:linear-gradient(90deg,#00ff9f,#00ffa0,#00ffa1,#00ffa2,#00ffa3,#00ffa5,#00ffa6,#00ffa7,#00ffa9,#00ffaa,#00ffac,#00ffae,#00ffaf,#00ffb1,#00ffb3,#00ffb5,#0affb7,#1bffb9,#2effbb,#41ffbd,#54ffc0,#69ffc2,#7fffc5,#96ffc7,#aeffca,#c7ffcd,#e2ffd0,#feffd4,#ffe6c2,#ffcfb2,#ffbba4,#ffaa97,#ff9b8d,#ff8d83,#ff817a,#ff7773,#ff6d6c,#ff6466,#ff5c60,#ff555b,#ff4e56,#ff4851,#ff424d,#ff3d4a,#ff3846,#ff3343,#ff2f40,#ff2b3d,#ff273a,#ff2338,#ff2035,#ff1d33,#ff1a31,#ff172f,#ff142d,#ff122b,#ff0f29,#ff0d28,#ff0b26,#ff0924,#ff0723,#ff0522,#ff0320,#ff011f,#ff001e,#ff001d,#ff001c,#ff001b,#ff001a,#ff0019,#ff0018,#ff0017,#ff0016,#ff0015,#ff0014,#ff0013,#ff0013,#ff0012,#ff0011,#ff0010,#ff0010,#ff000f,#ff000e,#ff000e,#ff000d)"></div><div style="left:8px;top:106px;width:672px;height:2.5px;background:linear-gradient(90deg,#00ffa3,#00ffa4,#00ffa5,#00ffa6,#00ffa8,#00ffa9,#00ffab,#00ffac,#00ffae,#00ffaf,#00ffb1,#00ffb3,#00ffb4,#00ffb6,#00ffb8,#00ffba,#09ffbc,#1bffbf,#2dffc1,#40ffc3,#54ffc6,#69ffc8,#7fffcb,#96ffce,#aeffd1,#c7ffd4,#e2ffd8,#feffdb,#ffe5c8,#ffceb7,#ffbaa9,#ffa99c,#ff9a91,#ff8c87,#ff807f,#ff7677,#ff6c70,#ff6369,#ff5b63,#ff545e,#ff4d59,#ff4754,#ff4150,#ff3c4c,#ff3749,#ff3245,#ff2e42,#ff2a3f,#ff263c,#ff233a,#ff1f37,#ff1c35,#ff1933,#ff1631,#ff142f,#ff112d,#ff0f2b,#ff0c29,#ff0a28,#ff0826,#ff0625,#ff0423,#ff0222,#ff0121,#ff001f,#ff001e,#ff001d,#ff001c,#ff001b,#ff001a,#ff0019,#ff0018,#ff0017,#ff0016,#ff0015,#ff0014,#ff0014,#ff0013,#ff0012,#ff0011,#ff0011,#ff0010,#ff000f,#ff000f,#ff000e)"></div><div style="left:8px;top:108px;width:672px;height:2.5px;background:linear-gradient(90deg,#00ffa7,#00ffa8,#00ffa9,#00ffab,#00ffac,#00ffae,#00ffaf,#00ffb1,#00ffb2,#00ffb4,#00ffb6,#00ffb8,#00ffba,#00ffbc,#00ffbe,#00ffc0,#08ffc2,#1affc4,#2cffc7,#3fffc9,#53ffcc,#68ffcf,#7effd2,#95ffd5,#aeffd8,#c7ffdc,#e2ffdf,#ffffe3,#ffe4cf,#ffcdbd,#ffb9ae,#ffa8a1,#ff9996,#ff8c8c,#ff8083,#ff757b,#ff6b73,#ff626d,#ff5a67,#ff5361,#ff4c5c,#ff4657,#ff4153,#ff3b4f,#ff364b,#ff3248,#ff2d44,#ff2941,#ff263e,#ff223c,#ff1f39,#ff1c37,#ff1935,#ff1632,#ff1330,#ff112f,#ff0e2d,#ff0c2b,#ff0a29,#ff0828,#ff0626,#ff0425,#ff0223,#ff0022,#ff0021,#ff0020,#ff001e,#ff001d,#ff001c,#ff001b,#ff001a,#ff0019,#ff0018,#ff0017,#ff0016,#ff0016,#ff0015,#ff0014,#ff0013,#ff0013,#ff0012,#ff0011,#ff0010,#ff0010,#ff000f)"></div><div style="left:8px;top:110px;width:672px;height:2.5px;background:linear-gradient(90deg,#00ffab,#00ffac,#00ffae,#00ffaf,#00ffb1,#00ffb2,#00ffb4,#00ffb5,#00ffb7,#00ffb9,#00ffbb,#00ffbd,#00ffbf,#00ffc1,#00ffc3,#00ffc5,#07ffc8,#19ffca,#2bffcd,#3fffd0,#53ffd2,#68ffd5,#7effd9,#95ffdc,#aeffdf,#c8ffe3,#e3ffe7,#fffeea,#ffe3d5,#ffccc3,#ffb9b4,#ffa7a6,#ff989b,#ff8b90,#ff7f87,#ff747e,#ff6a77,#ff6270,#ff5a6a,#ff5264,#ff4c5f,#ff465a,#ff4056,#ff3b52,#ff364e,#ff314a,#ff2d47,#ff2944,#ff2541,#ff213e,#ff1e3b,#ff1b39,#ff1837,#ff1534,#ff1232,#ff1030,#ff0e2e,#ff0b2d,#ff092b,#ff0729,#ff0528,#ff0326,#ff0125,#ff0024,#ff0022,#ff0021,#ff0020,#ff001f,#ff001e,#ff001c,#ff001b,#ff001a,#ff0019,#ff0019,#ff0018,#ff0017,#ff0016,#ff0015,#ff0014,#ff0014,#ff0013,#ff0012,#ff0012,#ff0011,#ff0010)"></div><div style="left:8px;top:112px;width:672px;height:2.5px;background:linear-gradient(90deg,#00ffaf,#00ffb1,#00ffb2,#00ffb4,#00ffb5,#00ffb7,#00ffb9,#00ffba,#00ffbc,#00ffbe,#00ffc0,#00ffc2,#00ffc4,#00ffc6,#00ffc9,#00ffcb,#06ffce,#18ffd0,#2affd3,#3effd6,#52ffd9,#67ffdc,#7effdf,#95ffe3,#aeffe7,#c8ffea,#e3ffee,#fffef1,#ffe3dc,#ffccc9,#ffb8b9,#ffa6ab,#ff979f,#ff8a95,#ff7e8b,#ff7382,#ff6a7b,#ff6174,#ff596d,#ff5267,#ff4b62,#ff455d,#ff3f58,#ff3a54,#ff3550,#ff304d,#ff2c49,#ff2846,#ff2443,#ff2140,#ff1d3d,#ff1a3b,#ff1739,#ff1536,#ff1234,#ff0f32,#ff0d30,#ff0b2e,#ff092d,#ff062b,#ff0529,#ff0328,#ff0126,#ff0025,#ff0024,#ff0022,#ff0021,#ff0020,#ff001f,#ff001e,#ff001d,#ff001c,#ff001b,#ff001a,#ff0019,#ff0018,#ff0017,#ff0016,#ff0016,#ff0015,#ff0014,#ff0013,#ff0013,#ff0012,#ff0011)"></div><div style="left:8px;top:114px;width:672px;height:2.5px;background:linear-gradient(90deg,#00ffb3,#00ffb5,#00ffb6,#00ffb8,#00ffba,#00ffbb,#00ffbd,#00ffbf,#00ffc1,#00ffc3,#00ffc5,#00ffc7,#00ffca,#00ffcc,#00ffce,#00ffd1,#05ffd4,#17ffd6,#2affd9,#3dffdc,#52ffdf,#67ffe3,#7dffe6,#95ffea,#aeffee,#c8fff2,#e4fff6,#fffdf9,#ffe2e2,#ffcbcf,#ffb7bf,#ffa6b1,#ff96a4,#ff8999,#ff7d8f,#ff7286,#ff697e,#ff6077,#ff5870,#ff516a,#ff4a65,#ff4460,#ff3e5b,#ff3957,#ff3453,#ff304f,#ff2b4c,#ff2748,#ff2445,#ff2042,#ff1d40,#ff1a3d,#ff173b,#ff1438,#ff1136,#ff0f34,#ff0c32,#ff0a30,#ff082e,#ff062d,#ff042b,#ff0229,#ff0028,#ff0027,#ff0025,#ff0024,#ff0023,#ff0021,#ff0020,#ff001f,#ff001e,#ff001d,#ff001c,#ff001b,#ff001a,#ff0019,#ff0018,#ff0017,#ff0017,#ff0016,#ff0015,#ff0014,#ff0014,#ff0013,#ff0012)"></div><div style="left:8px;top:116px;width:664px;height:2.5px;background:linear-gradient(90deg,#00ffb8,#00ffb9,#00ffbb,#00ffbd,#00ffbe,#00ffc0,#00ffc2,#00ffc4,#00ffc6,#00ffc8,#00ffca,#00ffcd,#00ffcf,#00ffd1,#00ffd4,#00ffd7,#04ffda,#16ffdc,#29ffdf,#3cffe3,#51ffe6,#67ffea,#7dffed,#95fff1,#aefff5,#c8fffa,#e4fffe,#fefbff,#ffe1e9,#ffcad5,#ffb6c4,#ffa5b6,#ff96a9,#ff889d,#ff7c93,#ff728a,#ff6882,#ff5f7b,#ff5774,#ff506e,#ff4968,#ff4363,#ff3e5e,#ff385a,#ff3355,#ff2f52,#ff2b4e,#ff274b,#ff2347,#ff2044,#ff1c42,#ff193f,#ff163c,#ff133a,#ff1138,#ff0e36,#ff0c34,#ff0a32,#ff0730,#ff052e,#ff032d,#ff022b,#ff0029,#ff0028,#ff0027,#ff0025,#ff0024,#ff0023,#ff0022,#ff0020,#ff001f,#ff001e,#ff001d,#ff001c,#ff001b,#ff001a,#ff0019,#ff0019,#ff0018,#ff0017,#ff0016,#ff0015,#ff0015,#ff0014)"></div><div style="left:8px;top:118px;width:664px;height:2.5px;background:linear-gradient(90deg,#00ffbc,#00ffbe,#00ffbf,#00ffc1,#00ffc3,#00ffc5,#00ffc7,#00ffc9,#00ffcb,#00ffcd,#00ffd0,#00ffd2,#00ffd4,#00ffd7,#00ffda,#00ffdd,#03ffe0,#15ffe3,#28ffe6,#3cffe9,#50ffed,#66fff0,#7dfff4,#95fff8,#aefffd,#c7fdff,#dff8ff,#f7f3ff,#ffe0f0,#ffc9db,#ffb5ca,#ffa4bb,#ff95ae,#ff87a2,#ff7b98,#ff718e,#ff6786,#ff5e7e,#ff5677,#ff4f71,#ff496b,#ff4366,#ff3d61,#ff385c,#ff3358,#ff2e54,#ff2a50,#ff264d,#ff224a,#ff1f47,#ff1c44,#ff1941,#ff163e,#ff133c,#ff103a,#ff0e38,#ff0b36,#ff0934,#ff0732,#ff0530,#ff032e,#ff012d,#ff002b,#ff0029,#ff0028,#ff0027,#ff0025,#ff0024,#ff0023,#ff0022,#ff0021,#ff001f,#ff001e,#ff001d,#ff001c,#ff001c,#ff001b,#ff001a,#ff0019,#ff0018,#ff0017,#ff0016,#ff0016,#ff0015)"></div><div style="left:8px;top:120px;width:664px;height:2.5px;background:linear-gradient(90deg,#00ffc0,#00ffc2,#00ffc4,#00ffc6,#00ffc8,#00ffca,#00ffcc,#00ffce,#00ffd0,#00ffd2,#00ffd5,#00ffd7,#00ffda,#00ffdd,#00ffe0,#00ffe3,#02ffe6,#14ffe9,#27ffec,#3bfff0,#50fff4,#66fff7,#7dfffc,#94feff,#aafaff,#c1f5ff,#d8f1ff,#f0ecff,#ffdff6,#ffc8e2,#ffb4d0,#ffa3c0,#ff94b3,#ff86a6,#ff7b9c,#ff7092,#ff668a,#ff5e82,#ff567b,#ff4e74,#ff486e,#ff4269,#ff3c64,#ff375f,#ff325b,#ff2e57,#ff2953,#ff254f,#ff224c,#ff1e49,#ff1b46,#ff1843,#ff1540,#ff123e,#ff103c,#ff0d39,#ff0b37,#ff0935,#ff0633,#ff0432,#ff0230,#ff012e,#ff002d,#ff002b,#ff002a,#ff0028,#ff0027,#ff0025,#ff0024,#ff0023,#ff0022,#ff0021,#ff0020,#ff001f,#ff001e,#ff001d,#ff001c,#ff001b,#ff001a,#ff0019,#ff0018,#ff0018,#ff0017,#ff0016)"></div><div style="left:8px;top:122px;width:664px;height:2.5px;background:linear-gradient(90deg,#00ffc5,#00ffc6,#00ffc8,#00ffca,#00ffcc,#00ffce,#00ffd1,#00ffd3,#00ffd5,#00ffd8,#00ffda,#00ffdd,#00ffe0,#00ffe3,#00ffe5,#00ffe9,#01ffec,#13ffef,#26fff3,#3afff7,#4ffffa,#65ffff,#7afbff,#90f7ff,#a6f2ff,#bceeff,#d2e9ff,#e9e5ff,#ffdffd,#ffc7e8,#ffb3d5,#ffa2c5,#ff93b7,#ff86ab,#ff7aa0,#ff6f96,#ff658d,#ff5d85,#ff557e,#ff4e77,#ff4771,#ff416c,#ff3b66,#ff3662,#ff315d,#ff2d59,#ff2955,#ff2552,#ff214e,#ff1e4b,#ff1a48,#ff1745,#ff1442,#ff1240,#ff0f3e,#ff0d3b,#ff0a39,#ff0837,#ff0635,#ff0433,#ff0231,#ff0030,#ff002e,#ff002c,#ff002b,#ff002a,#ff0028,#ff0027,#ff0026,#ff0024,#ff0023,#ff0022,#ff0021,#ff0020,#ff001f,#ff001e,#ff001d,#ff001c,#ff001b,#ff001a,#ff0019,#ff0019,#ff0018,#ff0017)"></div><div style="left:16px;top:124px;width:648px;height:2.5px;background:linear-gradient(90deg,#00ffcb,#00ffcd,#00ffcf,#00ffd1,#00ffd3,#00ffd6,#00ffd8,#00ffda,#00ffdd,#00ffe0,#00ffe2,#00ffe5,#00ffe8,#00ffeb,#00ffef,#00fff2,#12fff6,#25fff9,#3afffd,#4efdff,#62f8ff,#77f4ff,#8cf0ff,#a1ecff,#b7e7ff,#cde3ff,#e3deff,#fad9ff,#ffc6ee,#ffb3db,#ffa1cb,#ff92bc,#ff85b0,#ff79a4,#ff6e9a,#ff6591,#ff5c89,#ff5481,#ff4d7b,#ff4674,#ff406f,#ff3b69,#ff3564,#ff3160,#ff2c5c,#ff2858,#ff2454,#ff2050,#ff1d4d,#ff1a4a,#ff1747,#ff1444,#ff1142,#ff0e3f,#ff0c3d,#ff0a3b,#ff0739,#ff0537,#ff0335,#ff0133,#ff0031,#ff0030,#ff002e,#ff002c,#ff002b,#ff002a,#ff0028,#ff0027,#ff0026,#ff0024,#ff0023,#ff0022,#ff0021,#ff0020,#ff001f,#ff001e,#ff001d,#ff001c,#ff001b,#ff001a,#ff001a,#ff0019)"></div><div style="left:16px;top:126px;width:648px;height:2.5px;background:linear-gradient(90deg,#00ffd0,#00ffd2,#00ffd4,#00ffd6,#00ffd8,#00ffdb,#00ffdd,#00ffe0,#00ffe2,#00ffe5,#00ffe8,#00ffeb,#00ffee,#00fff1,#00fff5,#00fff8,#11fffc,#24feff,#38faff,#4bf6ff,#5ff2ff,#73eeff,#88e9ff,#9ce5ff,#b2e1ff,#c7dcff,#ddd7ff,#f3d3ff,#ffc6f4,#ffb2e1,#ffa0d0,#ff91c1,#ff84b4,#ff78a9,#ff6d9e,#ff6495,#ff5b8d,#ff5385,#ff4c7e,#ff4578,#ff3f72,#ff3a6c,#ff3567,#ff3062,#ff2b5e,#ff275a,#ff2356,#ff2053,#ff1c4f,#ff194c,#ff1649,#ff1346,#ff1044,#ff0e41,#ff0b3f,#ff093d,#ff073a,#ff0538,#ff0336,#ff0135,#ff0033,#ff0031,#ff0030,#ff002e,#ff002c,#ff002b,#ff002a,#ff0028,#ff0027,#ff0026,#ff0025,#ff0023,#ff0022,#ff0021,#ff0020,#ff001f,#ff001e,#ff001d,#ff001c,#ff001c,#ff001b,#ff001a)"></div><div style="left:16px;top:128px;width:648px;height:2.5px;background:linear-gradient(90deg,#00ffd4,#00ffd6,#00ffd9,#00ffdb,#00ffdd,#00ffe0,#00ffe2,#00ffe5,#00ffe8,#00ffeb,#00ffee,#00fff1,#00fff4,#00fff8,#00fffb,#00ffff,#10fbff,#23f7ff,#35f3ff,#49efff,#5cebff,#70e7ff,#84e3ff,#98dfff,#addaff,#c2d6ff,#d7d1ff,#edcdff,#ffc5fb,#ffb1e7,#ff9fd5,#ff90c6,#ff83b9,#ff77ad,#ff6ca2,#ff6399,#ff5a90,#ff5288,#ff4b81,#ff457b,#ff3f75,#ff396f,#ff346a,#ff2f65,#ff2b61,#ff275d,#ff2359,#ff1f55,#ff1c52,#ff184e,#ff154b,#ff1348,#ff1046,#ff0d43,#ff0b41,#ff093e,#ff063c,#ff043a,#ff0238,#ff0036,#ff0034,#ff0033,#ff0031,#ff002f,#ff002e,#ff002c,#ff002b,#ff002a,#ff0028,#ff0027,#ff0026,#ff0025,#ff0024,#ff0022,#ff0021,#ff0020,#ff001f,#ff001e,#ff001e,#ff001d,#ff001c,#ff001b)"></div><div style="left:16px;top:130px;width:648px;height:2.5px;background:linear-gradient(90deg,#00ffd9,#00ffdb,#00ffdd,#00ffe0,#00ffe2,#00ffe5,#00ffe8,#00ffea,#00ffed,#00fff0,#00fff3,#00fff7,#00fffa,#00fffe,#00fdff,#00f9ff,#0ff5ff,#21f1ff,#33edff,#46e9ff,#59e5ff,#6ce1ff,#80ddff,#94d8ff,#a8d4ff,#bdd0ff,#d2cbff,#e7c7ff,#fdc2ff,#ffb0ed,#ff9edb,#ff8fcb,#ff82be,#ff76b1,#ff6ca7,#ff629d,#ff5994,#ff528c,#ff4a85,#ff447e,#ff3e78,#ff3872,#ff336d,#ff2e68,#ff2a63,#ff265f,#ff225b,#ff1e57,#ff1b54,#ff1851,#ff154d,#ff124a,#ff0f48,#ff0d45,#ff0a43,#ff0840,#ff063e,#ff043c,#ff023a,#ff0038,#ff0036,#ff0034,#ff0033,#ff0031,#ff002f,#ff002e,#ff002c,#ff002b,#ff002a,#ff0028,#ff0027,#ff0026,#ff0025,#ff0024,#ff0023,#ff0022,#ff0021,#ff0020,#ff001f,#ff001e,#ff001d,#ff001c)"></div><div style="left:16px;top:132px;width:648px;height:2.5px;background:linear-gradient(90deg,#00ffdd,#00ffe0,#00ffe2,#00ffe5,#00ffe7,#00ffea,#00ffed,#00fff0,#00fff3,#00fff6,#00fff9,#00fffd,#00feff,#00faff,#00f6ff,#00f3ff,#0defff,#1febff,#31e7ff,#44e3ff,#56dfff,#69dbff,#7cd7ff,#90d3ff,#a4ceff,#b8caff,#ccc5ff,#e1c1ff,#f6bcff,#ffaff3,#ff9ee0,#ff8ed0,#ff81c2,#ff75b6,#ff6bab,#ff61a1,#ff5998,#ff518f,#ff4a88,#ff4381,#ff3d7b,#ff3875,#ff326f,#ff2e6a,#ff2966,#ff2561,#ff215d,#ff1e5a,#ff1a56,#ff1753,#ff1450,#ff114d,#ff0f4a,#ff0c47,#ff0a44,#ff0742,#ff0540,#ff033e,#ff013b,#ff003a,#ff0038,#ff0036,#ff0034,#ff0032,#ff0031,#ff002f,#ff002e,#ff002c,#ff002b,#ff002a,#ff0028,#ff0027,#ff0026,#ff0025,#ff0024,#ff0023,#ff0022,#ff0021,#ff0020,#ff001f,#ff001e,#ff001d)"></div><div style="left:16px;top:134px;width:640px;height:2.5px;background:linear-gradient(90deg,#00ffe2,#00ffe5,#00ffe7,#00ffea,#00ffed,#00ffef,#00fff2,#00fff5,#00fff8,#00fffc,#00ffff,#00fbff,#00f8ff,#00f4ff,#00f0ff,#00edff,#0ce9ff,#1ee5ff,#2fe1ff,#41ddff,#54d9ff,#66d5ff,#79d1ff,#8ccdff,#a0c9ff,#b3c4ff,#c7c0ff,#dcbbff,#f0b7ff,#ffaef9,#ff9de6,#ff8dd6,#ff80c7,#ff74ba,#ff6aaf,#ff60a5,#ff589b,#ff5093,#ff498b,#ff4284,#ff3c7e,#ff3778,#ff3272,#ff2d6d,#ff2968,#ff2464,#ff2160,#ff1d5c,#ff1a58,#ff1755,#ff1452,#ff114f,#ff0e4c,#ff0c49,#ff0946,#ff0744,#ff0542,#ff033f,#ff013d,#ff003b,#ff0039,#ff0037,#ff0036,#ff0034,#ff0032,#ff0031,#ff002f,#ff002e,#ff002c,#ff002b,#ff002a,#ff0028,#ff0027,#ff0026,#ff0025,#ff0024,#ff0023,#ff0022,#ff0021,#ff0020,#ff001f)"></div><div style="left:16px;top:136px;width:640px;height:2.5px;background:linear-gradient(90deg,#00ffe7,#00ffea,#00ffec,#00ffef,#00fff2,#00fff5,#00fff8,#00fffb,#00fffe,#00fcff,#00f9ff,#00f6ff,#00f2ff,#00eeff,#00ebff,#00e7ff,#0be3ff,#1cdfff,#2edcff,#3fd8ff,#51d4ff,#63d0ff,#76ccff,#88c7ff,#9cc3ff,#afbfff,#c2bbff,#d6b6ff,#ebb2ff,#ffadff,#ff9cec,#ff8ddb,#ff7fcc,#ff73bf,#ff69b3,#ff5fa9,#ff579f,#ff4f96,#ff488f,#ff4187,#ff3c81,#ff367b,#ff3175,#ff2c70,#ff286b,#ff2466,#ff2062,#ff1c5e,#ff195b,#ff1657,#ff1354,#ff1051,#ff0d4e,#ff0b4b,#ff0948,#ff0646,#ff0443,#ff0241,#ff003f,#ff003d,#ff003b,#ff0039,#ff0037,#ff0035,#ff0034,#ff0032,#ff0031,#ff002f,#ff002e,#ff002c,#ff002b,#ff002a,#ff0029,#ff0027,#ff0026,#ff0025,#ff0024,#ff0023,#ff0022,#ff0021,#ff0020)"></div><div style="left:16px;top:138px;width:640px;height:2.5px;background:linear-gradient(90deg,#00ffec,#00ffee,#00fff1,#00fff4,#00fff7,#00fffa,#00fffd,#00feff,#00faff,#00f7ff,#00f3ff,#00f0ff,#00ecff,#00e9ff,#00e5ff,#00e2ff,#0adeff,#1bdaff,#2cd6ff,#3dd2ff,#4fceff,#60caff,#73c6ff,#85c2ff,#98beff,#abbaff,#beb5ff,#d1b1ff,#e5adff,#f9a8ff,#ff9bf1,#ff8ce0,#ff7ed1,#ff72c3,#ff68b7,#ff5ead,#ff56a3,#ff4e9a,#ff4792,#ff418b,#ff3b84,#ff357e,#ff3078,#ff2c73,#ff276e,#ff2369,#ff1f65,#ff1c61,#ff185d,#ff1559,#ff1256,#ff0f53,#ff0d50,#ff0a4d,#ff084a,#ff0648,#ff0445,#ff0243,#ff0041,#ff003e,#ff003c,#ff003a,#ff0039,#ff0037,#ff0035,#ff0034,#ff0032,#ff0030,#ff002f,#ff002e,#ff002c,#ff002b,#ff002a,#ff0029,#ff0027,#ff0026,#ff0025,#ff0024,#ff0023,#ff0022,#ff0021)"></div><div style="left:16px;top:140px;width:640px;height:2.5px;background:linear-gradient(90deg,#00fff1,#00fff3,#00fff6,#00fff9,#00fffc,#00ffff,#00fbff,#00f8ff,#00f5ff,#00f1ff,#00eeff,#00ebff,#00e7ff,#00e3ff,#00e0ff,#00dcff,#09d9ff,#19d5ff,#2ad1ff,#3bcdff,#4cc9ff,#5ec5ff,#70c1ff,#82bdff,#94b9ff,#a6b5ff,#b9b1ff,#ccacff,#e0a8ff,#f3a3ff,#ff9af7,#ff8be5,#ff7dd6,#ff72c8,#ff67bc,#ff5eb1,#ff55a7,#ff4d9e,#ff4695,#ff408e,#ff3a87,#ff3481,#ff2f7b,#ff2b75,#ff2670,#ff226b,#ff1f67,#ff1b63,#ff185f,#ff155b,#ff1258,#ff0f55,#ff0c52,#ff0a4f,#ff074c,#ff0549,#ff0347,#ff0144,#ff0042,#ff0040,#ff003e,#ff003c,#ff003a,#ff0038,#ff0037,#ff0035,#ff0033,#ff0032,#ff0030,#ff002f,#ff002e,#ff002c,#ff002b,#ff002a,#ff0029,#ff0027,#ff0026,#ff0025,#ff0024,#ff0023,#ff0022)"></div><div style="left:16px;top:142px;width:632px;height:2.5px;background:linear-gradient(90deg,#00fff6,#00fff8,#00fffb,#00fffe,#00fcff,#00f9ff,#00f6ff,#00f3ff,#00efff,#00ecff,#00e9ff,#00e5ff,#00e2ff,#00deff,#00dbff,#00d7ff,#08d3ff,#18d0ff,#28ccff,#39c8ff,#4ac4ff,#5bc0ff,#6dbcff,#7eb8ff,#90b4ff,#a2b0ff,#b5acff,#c8a8ff,#dba3ff,#ee9fff,#ff99fd,#ff8aea,#ff7cdb,#ff71cc,#ff66c0,#ff5db5,#ff54aa,#ff4ca1,#ff4599,#ff3f91,#ff398a,#ff3484,#ff2f7e,#ff2a78,#ff2673,#ff226e,#ff1e6a,#ff1a65,#ff1761,#ff145e,#ff115a,#ff0e57,#ff0c54,#ff0951,#ff074e,#ff054b,#ff0249,#ff0046,#ff0044,#ff0042,#ff0040,#ff003e,#ff003c,#ff003a,#ff0038,#ff0036,#ff0035,#ff0033,#ff0032,#ff0030,#ff002f,#ff002e,#ff002c,#ff002b,#ff002a,#ff0029,#ff0028,#ff0026,#ff0025,#ff0024)"></div><div style="left:16px;top:144px;width:632px;height:2.5px;background:linear-gradient(90deg,#00fffb,#00fffe,#00fdff,#00faff,#00f7ff,#00f4ff,#00f1ff,#00eeff,#00eaff,#00e7ff,#00e4ff,#00e0ff,#00ddff,#00d9ff,#00d6ff,#00d2ff,#06ceff,#16cbff,#27c7ff,#37c3ff,#48bfff,#59bcff,#6ab8ff,#7bb4ff,#8db0ff,#9eabff,#b1a7ff,#c3a3ff,#d69fff,#e99aff,#fc96ff,#ff89f0,#ff7be0,#ff70d1,#ff65c4,#ff5cb9,#ff53ae,#ff4ca5,#ff459c,#ff3e94,#ff388d,#ff3387,#ff2e80,#ff297b,#ff2575,#ff2171,#ff1d6c,#ff1a68,#ff1664,#ff1360,#ff105c,#ff0e59,#ff0b56,#ff0953,#ff0650,#ff044d,#ff024a,#ff0048,#ff0046,#ff0043,#ff0041,#ff003f,#ff003d,#ff003b,#ff003a,#ff0038,#ff0036,#ff0035,#ff0033,#ff0032,#ff0030,#ff002f,#ff002e,#ff002c,#ff002b,#ff002a,#ff0029,#ff0028,#ff0027,#ff0025)"></div><div style="left:24px;top:146px;width:624px;height:2.5px;background:linear-gradient(90deg,#00fbff,#00f8ff,#00f5ff,#00f2ff,#00efff,#00ecff,#00e9ff,#00e5ff,#00e2ff,#00dfff,#00dbff,#00d8ff,#00d4ff,#00d1ff,#00cdff,#05caff,#15c6ff,#25c2ff,#35bfff,#46bbff,#56b7ff,#67b3ff,#78afff,#89abff,#9ba7ff,#ada3ff,#bf9fff,#d19aff,#e396ff,#f692ff,#ff88f5,#ff7ae4,#ff6fd6,#ff64c9,#ff5bbd,#ff52b2,#ff4ba9,#ff44a0,#ff3d98,#ff3890,#ff328a,#ff2d83,#ff297e,#ff2478,#ff2073,#ff1c6e,#ff196a,#ff1666,#ff1362,#ff105e,#ff0d5b,#ff0a58,#ff0855,#ff0652,#ff034f,#ff014c,#ff004a,#ff0047,#ff0045,#ff0043,#ff0041,#ff003f,#ff003d,#ff003b,#ff0039,#ff0038,#ff0036,#ff0034,#ff0033,#ff0032,#ff0030,#ff002f,#ff002d,#ff002c,#ff002b,#ff002a,#ff0029,#ff0028,#ff0027)"></div><div style="left:24px;top:148px;width:624px;height:2.5px;background:linear-gradient(90deg,#00f6ff,#00f3ff,#00f0ff,#00edff,#00eaff,#00e7ff,#00e4ff,#00e1ff,#00ddff,#00daff,#00d7ff,#00d3ff,#00d0ff,#00ccff,#00c9ff,#04c5ff,#14c1ff,#24beff,#33baff,#43b6ff,#54b2ff,#64afff,#75abff,#86a7ff,#97a3ff,#a99fff,#ba9aff,#cc96ff,#de92ff,#f18eff,#ff87fb,#ff7aea,#ff6eda,#ff63cd,#ff5ac1,#ff52b6,#ff4aac,#ff43a3,#ff3d9b,#ff3794,#ff318d,#ff2c86,#ff2880,#ff237b,#ff2076,#ff1c71,#ff186c,#ff1568,#ff1264,#ff0f60,#ff0c5d,#ff0a5a,#ff0757,#ff0554,#ff0351,#ff014e,#ff004b,#ff0049,#ff0047,#ff0045,#ff0042,#ff0040,#ff003e,#ff003d,#ff003b,#ff0039,#ff0037,#ff0036,#ff0034,#ff0033,#ff0031,#ff0030,#ff002f,#ff002d,#ff002c,#ff002b,#ff002a,#ff0029,#ff0028)"></div><div style="left:24px;top:150px;width:616px;height:2.5px;background:linear-gradient(90deg,#00f2ff,#00efff,#00ecff,#00e9ff,#00e5ff,#00e2ff,#00dfff,#00dcff,#00d9ff,#00d5ff,#00d2ff,#00cfff,#00cbff,#00c8ff,#00c4ff,#03c1ff,#13bdff,#22b9ff,#32b6ff,#41b2ff,#51aeff,#62aaff,#72a6ff,#83a2ff,#949eff,#a59aff,#b696ff,#c892ff,#da8eff,#ec8aff,#fe85ff,#ff79ef,#ff6ddf,#ff62d1,#ff59c5,#ff51ba,#ff49b0,#ff42a7,#ff3c9e,#ff3697,#ff3190,#ff2c89,#ff2783,#ff237d,#ff1f78,#ff1b73,#ff186f,#ff146a,#ff1166,#ff0e63,#ff0c5f,#ff095c,#ff0758,#ff0455,#ff0253,#ff0050,#ff004d,#ff004b,#ff0048,#ff0046,#ff0044,#ff0042,#ff0040,#ff003e,#ff003c,#ff003a,#ff0039,#ff0037,#ff0036,#ff0034,#ff0033,#ff0031,#ff0030,#ff002f,#ff002d,#ff002c,#ff002b,#ff002a)"></div><div style="left:24px;top:152px;width:616px;height:2.5px;background:linear-gradient(90deg,#00edff,#00eaff,#00e7ff,#00e4ff,#00e1ff,#00deff,#00dbff,#00d7ff,#00d4ff,#00d1ff,#00cdff,#00caff,#00c7ff,#00c3ff,#00c0ff,#03bcff,#11b9ff,#21b5ff,#30b1ff,#40aeff,#4faaff,#5fa6ff,#6fa2ff,#809eff,#909aff,#a196ff,#b292ff,#c38eff,#d58aff,#e786ff,#f981ff,#ff78f4,#ff6ce4,#ff61d6,#ff58c9,#ff50be,#ff48b4,#ff41aa,#ff3ba2,#ff359a,#ff3093,#ff2b8c,#ff2686,#ff2280,#ff1e7b,#ff1a76,#ff1771,#ff146d,#ff1169,#ff0e65,#ff0b61,#ff095e,#ff065a,#ff0457,#ff0254,#ff0052,#ff004f,#ff004c,#ff004a,#ff0048,#ff0046,#ff0043,#ff0041,#ff0040,#ff003e,#ff003c,#ff003a,#ff0039,#ff0037,#ff0035,#ff0034,#ff0033,#ff0031,#ff0030,#ff002f,#ff002d,#ff002c,#ff002b)"></div><div style="left:24px;top:154px;width:616px;height:2.5px;background:linear-gradient(90deg,#00e8ff,#00e5ff,#00e2ff,#00dfff,#00dcff,#00d9ff,#00d6ff,#00d3ff,#00d0ff,#00ccff,#00c9ff,#00c6ff,#00c2ff,#00bfff,#00bcff,#02b8ff,#10b5ff,#1fb1ff,#2eadff,#3eaaff,#4da6ff,#5da2ff,#6d9eff,#7d9aff,#8d97ff,#9e93ff,#ae8fff,#bf8aff,#d086ff,#e282ff,#f37eff,#ff77f9,#ff6be9,#ff60da,#ff57cd,#ff4fc2,#ff47b7,#ff40ae,#ff3aa5,#ff349d,#ff2f96,#ff2a8f,#ff2589,#ff2183,#ff1d7d,#ff1a78,#ff1674,#ff136f,#ff106b,#ff0d67,#ff0a63,#ff0860,#ff055c,#ff0359,#ff0156,#ff0053,#ff0051,#ff004e,#ff004c,#ff0049,#ff0047,#ff0045,#ff0043,#ff0041,#ff003f,#ff003d,#ff003c,#ff003a,#ff0038,#ff0037,#ff0035,#ff0034,#ff0032,#ff0031,#ff0030,#ff002f,#ff002d,#ff002c)"></div><div style="left:24px;top:156px;width:616px;height:2.5px;background:linear-gradient(90deg,#00e4ff,#00e1ff,#00deff,#00dbff,#00d8ff,#00d5ff,#00d2ff,#00cfff,#00cbff,#00c8ff,#00c5ff,#00c2ff,#00beff,#00bbff,#00b7ff,#01b4ff,#0fb0ff,#1eadff,#2da9ff,#3ca6ff,#4ba2ff,#5a9eff,#6a9aff,#7a97ff,#8a93ff,#9a8fff,#ab8bff,#bb87ff,#cc83ff,#dd7fff,#ef7aff,#ff76fe,#ff6aed,#ff60df,#ff56d2,#ff4ec6,#ff46bb,#ff3fb1,#ff39a8,#ff33a0,#ff2e99,#ff2992,#ff258b,#ff2186,#ff1d80,#ff197b,#ff1676,#ff1271,#ff0f6d,#ff0c69,#ff0a65,#ff0762,#ff055e,#ff035b,#ff0058,#ff0055,#ff0053,#ff0050,#ff004d,#ff004b,#ff0049,#ff0047,#ff0045,#ff0043,#ff0041,#ff003f,#ff003d,#ff003b,#ff003a,#ff0038,#ff0037,#ff0035,#ff0034,#ff0032,#ff0031,#ff0030,#ff002f,#ff002d)"></div><div style="left:24px;top:158px;width:608px;height:2.5px;background:linear-gradient(90deg,#00e0ff,#00ddff,#00daff,#00d7ff,#00d4ff,#00d1ff,#00ceff,#00caff,#00c7ff,#00c4ff,#00c1ff,#00beff,#00baff,#00b7ff,#00b3ff,#00b0ff,#0eadff,#1da9ff,#2ba5ff,#3aa2ff,#499eff,#589aff,#6897ff,#7793ff,#878fff,#978bff,#a787ff,#b783ff,#c87fff,#d97bff,#ea77ff,#fb73ff,#ff69f2,#ff5fe3,#ff55d6,#ff4dca,#ff45bf,#ff3fb5,#ff38ac,#ff33a4,#ff2d9c,#ff2895,#ff248e,#ff2088,#ff1c83,#ff187d,#ff1578,#ff1274,#ff0f6f,#ff0c6b,#ff0968,#ff0764,#ff0460,#ff025d,#ff005a,#ff0057,#ff0054,#ff0052,#ff004f,#ff004d,#ff004a,#ff0048,#ff0046,#ff0044,#ff0042,#ff0040,#ff003e,#ff003d,#ff003b,#ff0039,#ff0038,#ff0036,#ff0035,#ff0034,#ff0032,#ff0031,#ff0030)"></div><div style="left:24px;top:160px;width:608px;height:2.5px;background:linear-gradient(90deg,#00dcff,#00d9ff,#00d6ff,#00d3ff,#00d0ff,#00cdff,#00caff,#00c6ff,#00c3ff,#00c0ff,#00bdff,#00baff,#00b6ff,#00b3ff,#00b0ff,#00acff,#0da9ff,#1ba5ff,#2aa2ff,#389eff,#479aff,#5697ff,#6593ff,#748fff,#848cff,#9488ff,#a384ff,#b480ff,#c47cff,#d478ff,#e574ff,#f66fff,#ff68f7,#ff5ee8,#ff54da,#ff4cce,#ff45c3,#ff3eb9,#ff37af,#ff32a7,#ff2d9f,#ff2898,#ff2391,#ff1f8b,#ff1b85,#ff1780,#ff147b,#ff1176,#ff0e72,#ff0b6e,#ff096a,#ff0666,#ff0462,#ff015f,#ff005c,#ff0059,#ff0056,#ff0053,#ff0051,#ff004e,#ff004c,#ff004a,#ff0048,#ff0046,#ff0044,#ff0042,#ff0040,#ff003e,#ff003c,#ff003b,#ff0039,#ff0038,#ff0036,#ff0035,#ff0033,#ff0032,#ff0031)"></div><div style="left:24px;top:162px;width:608px;height:2.5px;background:linear-gradient(90deg,#00d8ff,#00d5ff,#00d2ff,#00cfff,#00ccff,#00c9ff,#00c6ff,#00c3ff,#00bfff,#00bcff,#00b9ff,#00b6ff,#00b3ff,#00afff,#00acff,#00a8ff,#0ca5ff,#1aa2ff,#289eff,#379bff,#4597ff,#5493ff,#6390ff,#728cff,#8188ff,#9084ff,#a080ff,#b07cff,#c079ff,#d074ff,#e170ff,#f16cff,#ff67fc,#ff5dec,#ff53de,#ff4bd2,#ff44c6,#ff3dbc,#ff37b3,#ff31aa,#ff2ca2,#ff279b,#ff2294,#ff1e8e,#ff1a88,#ff1782,#ff137d,#ff1078,#ff0d74,#ff0a70,#ff086c,#ff0568,#ff0364,#ff0161,#ff005e,#ff005b,#ff0058,#ff0055,#ff0053,#ff0050,#ff004e,#ff004b,#ff0049,#ff0047,#ff0045,#ff0043,#ff0041,#ff003f,#ff003e,#ff003c,#ff003a,#ff0039,#ff0037,#ff0036,#ff0035,#ff0033,#ff0032)"></div><div style="left:24px;top:164px;width:608px;height:2.5px;background:linear-gradient(90deg,#00d4ff,#00d1ff,#00ceff,#00cbff,#00c8ff,#00c5ff,#00c2ff,#00bfff,#00bcff,#00b8ff,#00b5ff,#00b2ff,#00afff,#00acff,#00a8ff,#00a5ff,#0ba1ff,#199eff,#279bff,#3597ff,#4393ff,#5290ff,#608cff,#6f88ff,#7e85ff,#8d81ff,#9d7dff,#ac79ff,#bc75ff,#cc71ff,#dc6dff,#ec69ff,#fd65ff,#ff5cf1,#ff52e3,#ff4ad6,#ff43ca,#ff3cc0,#ff36b6,#ff30ad,#ff2ba5,#ff269e,#ff2297,#ff1d90,#ff1a8b,#ff1685,#ff1380,#ff107b,#ff0d76,#ff0a72,#ff076e,#ff056a,#ff0266,#ff0063,#ff0060,#ff005d,#ff005a,#ff0057,#ff0054,#ff0052,#ff004f,#ff004d,#ff004b,#ff0049,#ff0047,#ff0045,#ff0043,#ff0041,#ff003f,#ff003d,#ff003c,#ff003a,#ff0039,#ff0037,#ff0036,#ff0034,#ff0033)"></div><div style="left:32px;top:166px;width:592px;height:2.5px;background:linear-gradient(90deg,#00cdff,#00caff,#00c7ff,#00c4ff,#00c1ff,#00beff,#00bbff,#00b8ff,#00b5ff,#00b2ff,#00aeff,#00abff,#00a8ff,#00a5ff,#00a1ff,#0a9eff,#189bff,#2697ff,#3394ff,#4290ff,#508cff,#5e89ff,#6d85ff,#7c82ff,#8a7eff,#9a7aff,#a976ff,#b872ff,#c86eff,#d86aff,#e866ff,#f862ff,#ff5bf6,#ff51e7,#ff49da,#ff42ce,#ff3bc3,#ff35ba,#ff2fb1,#ff2aa8,#ff25a1,#ff219a,#ff1d93,#ff198d,#ff1587,#ff1282,#ff0f7d,#ff0c79,#ff0974,#ff0770,#ff046c,#ff0268,#ff0065,#ff0062,#ff005f,#ff005c,#ff0059,#ff0056,#ff0053,#ff0051,#ff004f,#ff004c,#ff004a,#ff0048,#ff0046,#ff0044,#ff0042,#ff0040,#ff003f,#ff003d,#ff003b,#ff003a,#ff0038,#ff0037,#ff0036)"></div><div style="left:32px;top:168px;width:592px;height:2.5px;background:linear-gradient(90deg,#00c9ff,#00c6ff,#00c3ff,#00c0ff,#00bdff,#00baff,#00b7ff,#00b4ff,#00b1ff,#00aeff,#00abff,#00a8ff,#00a4ff,#00a1ff,#009eff,#099bff,#1797ff,#2494ff,#3290ff,#408dff,#4e89ff,#5c86ff,#6a82ff,#797eff,#887bff,#9677ff,#a673ff,#b56fff,#c46bff,#d467ff,#e463ff,#f45fff,#ff5afa,#ff51eb,#ff48de,#ff41d2,#ff3ac7,#ff34bd,#ff2eb4,#ff29ac,#ff24a4,#ff209d,#ff1c96,#ff1890,#ff158a,#ff1185,#ff0e80,#ff0b7b,#ff0876,#ff0672,#ff036e,#ff016a,#ff0067,#ff0064,#ff0060,#ff005d,#ff005a,#ff0058,#ff0055,#ff0053,#ff0050,#ff004e,#ff004c,#ff0049,#ff0047,#ff0045,#ff0044,#ff0042,#ff0040,#ff003e,#ff003d,#ff003b,#ff003a,#ff0038,#ff0037)"></div><div style="left:32px;top:170px;width:592px;height:2.5px;background:linear-gradient(90deg,#00c5ff,#00c3ff,#00c0ff,#00bdff,#00baff,#00b7ff,#00b4ff,#00b1ff,#00aeff,#00abff,#00a7ff,#00a4ff,#00a1ff,#009eff,#009bff,#0897ff,#1694ff,#2391ff,#308dff,#3e8aff,#4c86ff,#5a83ff,#687fff,#767bff,#8578ff,#9374ff,#a270ff,#b16cff,#c069ff,#d065ff,#df61ff,#ef5dff,#ff59ff,#ff50f0,#ff47e2,#ff40d6,#ff39cb,#ff33c1,#ff2eb7,#ff28af,#ff24a7,#ff1fa0,#ff1b99,#ff1793,#ff148d,#ff1187,#ff0d82,#ff0b7d,#ff0879,#ff0574,#ff0370,#ff016d,#ff0069,#ff0065,#ff0062,#ff005f,#ff005c,#ff0059,#ff0057,#ff0054,#ff0052,#ff004f,#ff004d,#ff004b,#ff0049,#ff0047,#ff0045,#ff0043,#ff0041,#ff0040,#ff003e,#ff003c,#ff003b,#ff0039,#ff0038)"></div><div style="left:32px;top:172px;width:592px;height:2.5px;background:linear-gradient(90deg,#00c2ff,#00bfff,#00bcff,#00b9ff,#00b6ff,#00b3ff,#00b0ff,#00adff,#00aaff,#00a7ff,#00a4ff,#00a1ff,#009eff,#009bff,#0097ff,#0794ff,#1491ff,#228dff,#2f8aff,#3c87ff,#4a83ff,#5880ff,#667cff,#7478ff,#8275ff,#9171ff,#9f6dff,#ae6aff,#bd66ff,#cc62ff,#db5eff,#eb5aff,#fa56ff,#ff4ff4,#ff46e6,#ff3fda,#ff38cf,#ff32c4,#ff2dbb,#ff28b2,#ff23aa,#ff1ea2,#ff1a9c,#ff1795,#ff138f,#ff108a,#ff0d84,#ff0a80,#ff077b,#ff0577,#ff0272,#ff006f,#ff006b,#ff0067,#ff0064,#ff0061,#ff005e,#ff005b,#ff0058,#ff0056,#ff0053,#ff0051,#ff004f,#ff004c,#ff004a,#ff0048,#ff0046,#ff0045,#ff0043,#ff0041,#ff003f,#ff003e,#ff003c,#ff003b,#ff0039)"></div><div style="left:32px;top:174px;width:584px;height:2.5px;background:linear-gradient(90deg,#00beff,#00bcff,#00b9ff,#00b6ff,#00b3ff,#00b0ff,#00adff,#00aaff,#00a7ff,#00a4ff,#00a1ff,#009eff,#009bff,#0097ff,#0094ff,#0791ff,#138eff,#208aff,#2e87ff,#3b83ff,#4880ff,#567dff,#6479ff,#7175ff,#7f72ff,#8e6eff,#9c6bff,#ab67ff,#b963ff,#c85fff,#d75bff,#e657ff,#f653ff,#ff4ef9,#ff45eb,#ff3ede,#ff37d2,#ff31c8,#ff2cbe,#ff27b5,#ff22ad,#ff1ea5,#ff1a9e,#ff1698,#ff1292,#ff0f8c,#ff0c87,#ff0982,#ff067d,#ff0479,#ff0275,#ff0071,#ff006d,#ff0069,#ff0066,#ff0063,#ff0060,#ff005d,#ff005a,#ff0057,#ff0055,#ff0052,#ff0050,#ff004e,#ff004c,#ff004a,#ff0048,#ff0046,#ff0044,#ff0042,#ff0041,#ff003f,#ff003d,#ff003c)"></div><div style="left:32px;top:176px;width:584px;height:2.5px;background:linear-gradient(90deg,#00bbff,#00b8ff,#00b5ff,#00b3ff,#00b0ff,#00adff,#00aaff,#00a7ff,#00a4ff,#00a1ff,#009eff,#009bff,#0097ff,#0094ff,#0091ff,#068eff,#128bff,#1f87ff,#2c84ff,#3981ff,#477dff,#547aff,#6176ff,#6f73ff,#7d6fff,#8b6bff,#9968ff,#a764ff,#b660ff,#c45dff,#d359ff,#e255ff,#f151ff,#ff4dfd,#ff44ef,#ff3de2,#ff36d6,#ff30cb,#ff2bc1,#ff26b8,#ff21b0,#ff1da8,#ff19a1,#ff159b,#ff1294,#ff0e8f,#ff0b89,#ff0884,#ff067f,#ff037b,#ff0177,#ff0073,#ff006f,#ff006b,#ff0068,#ff0065,#ff0062,#ff005f,#ff005c,#ff0059,#ff0057,#ff0054,#ff0052,#ff004f,#ff004d,#ff004b,#ff0049,#ff0047,#ff0045,#ff0044,#ff0042,#ff0040,#ff003f,#ff003d)"></div><div style="left:32px;top:178px;width:584px;height:2.5px;background:linear-gradient(90deg,#00b8ff,#00b5ff,#00b2ff,#00afff,#00acff,#00aaff,#00a7ff,#00a4ff,#00a1ff,#009eff,#009bff,#0098ff,#0094ff,#0091ff,#008eff,#058bff,#1188ff,#1e84ff,#2b81ff,#387eff,#457aff,#5277ff,#5f73ff,#6d70ff,#7a6cff,#8869ff,#9665ff,#a462ff,#b35eff,#c15aff,#d056ff,#de53ff,#ed4fff,#fc4bff,#ff43f3,#ff3ce6,#ff36da,#ff30cf,#ff2ac5,#ff25bc,#ff20b3,#ff1cab,#ff18a4,#ff149d,#ff1197,#ff0e91,#ff0b8c,#ff0887,#ff0582,#ff037d,#ff0079,#ff0075,#ff0071,#ff006d,#ff006a,#ff0066,#ff0063,#ff0060,#ff005d,#ff005b,#ff0058,#ff0056,#ff0053,#ff0051,#ff004f,#ff004d,#ff004b,#ff0049,#ff0047,#ff0045,#ff0043,#ff0042,#ff0040,#ff003e)"></div><div style="left:32px;top:180px;width:584px;height:2.5px;background:linear-gradient(90deg,#00b5ff,#00b2ff,#00afff,#00acff,#00a9ff,#00a6ff,#00a4ff,#00a1ff,#009eff,#009bff,#0098ff,#0095ff,#0091ff,#008eff,#008bff,#0488ff,#1085ff,#1d82ff,#2a7eff,#367bff,#4378ff,#5074ff,#5d71ff,#6b6dff,#786aff,#8666ff,#9363ff,#a15fff,#af5bff,#bd58ff,#cc54ff,#da50ff,#e94cff,#f848ff,#ff42f7,#ff3bea,#ff35de,#ff2fd2,#ff29c8,#ff24bf,#ff1fb6,#ff1bae,#ff17a7,#ff14a0,#ff109a,#ff0d94,#ff0a8e,#ff0789,#ff0484,#ff027f,#ff007b,#ff0077,#ff0073,#ff006f,#ff006c,#ff0068,#ff0065,#ff0062,#ff005f,#ff005c,#ff005a,#ff0057,#ff0055,#ff0052,#ff0050,#ff004e,#ff004c,#ff004a,#ff0048,#ff0046,#ff0045,#ff0043,#ff0041,#ff0040)"></div><div style="left:32px;top:182px;width:576px;height:2.5px;background:linear-gradient(90deg,#00b1ff,#00afff,#00acff,#00a9ff,#00a6ff,#00a3ff,#00a1ff,#009eff,#009bff,#0098ff,#0095ff,#0092ff,#008fff,#008bff,#0088ff,#0385ff,#1082ff,#1c7fff,#287cff,#3578ff,#4275ff,#4e72ff,#5b6eff,#686bff,#7667ff,#8364ff,#9160ff,#9e5dff,#ac59ff,#ba55ff,#c852ff,#d74eff,#e54aff,#f446ff,#ff41fc,#ff3aee,#ff34e1,#ff2ed6,#ff28cc,#ff23c2,#ff1fb9,#ff1ab1,#ff16aa,#ff13a3,#ff0f9c,#ff0c96,#ff0991,#ff068b,#ff0486,#ff0181,#ff007d,#ff0079,#ff0075,#ff0071,#ff006e,#ff006a,#ff0067,#ff0064,#ff0061,#ff005e,#ff005b,#ff0059,#ff0056,#ff0054,#ff0052,#ff0050,#ff004d,#ff004b,#ff004a,#ff0048,#ff0046,#ff0044,#ff0042)"></div><div style="left:32px;top:184px;width:576px;height:2.5px;background:linear-gradient(90deg,#00aeff,#00acff,#00a9ff,#00a6ff,#00a3ff,#00a0ff,#009eff,#009bff,#0098ff,#0095ff,#0092ff,#008fff,#008cff,#0089ff,#0086ff,#0382ff,#0f7fff,#1b7cff,#2779ff,#3376ff,#4072ff,#4d6fff,#596cff,#6668ff,#7365ff,#8161ff,#8e5eff,#9b5aff,#a957ff,#b753ff,#c54fff,#d34cff,#e148ff,#ef44ff,#fe40ff,#ff39f2,#ff33e5,#ff2dda,#ff27cf,#ff22c5,#ff1ebd,#ff1ab4,#ff16ad,#ff12a6,#ff0f9f,#ff0b99,#ff0893,#ff068e,#ff0389,#ff0184,#ff007f,#ff007b,#ff0077,#ff0073,#ff006f,#ff006c,#ff0069,#ff0066,#ff0063,#ff0060,#ff005d,#ff005a,#ff0058,#ff0055,#ff0053,#ff0051,#ff004f,#ff004d,#ff004b,#ff0049,#ff0047,#ff0045,#ff0044)"></div><div style="left:40px;top:186px;width:568px;height:2.5px;background:linear-gradient(90deg,#00a9ff,#00a6ff,#00a3ff,#00a0ff,#009eff,#009bff,#0098ff,#0095ff,#0092ff,#008fff,#008cff,#0089ff,#0086ff,#0083ff,#0280ff,#0e7dff,#1a79ff,#2676ff,#3273ff,#3e70ff,#4b6cff,#5869ff,#6466ff,#7162ff,#7e5fff,#8b5bff,#9958ff,#a654ff,#b451ff,#c14dff,#cf49ff,#dd46ff,#eb42ff,#fa3eff,#ff38f6,#ff32e9,#ff2cdd,#ff26d3,#ff22c9,#ff1dc0,#ff19b7,#ff15b0,#ff11a8,#ff0ea2,#ff0b9b,#ff0895,#ff0590,#ff028b,#ff0086,#ff0081,#ff007d,#ff0079,#ff0075,#ff0071,#ff006e,#ff006a,#ff0067,#ff0064,#ff0061,#ff005f,#ff005c,#ff0059,#ff0057,#ff0055,#ff0052,#ff0050,#ff004e,#ff004c,#ff004a,#ff0048,#ff0047,#ff0045)"></div><div style="left:40px;top:188px;width:568px;height:2.5px;background:linear-gradient(90deg,#00a6ff,#00a3ff,#00a0ff,#009dff,#009bff,#0098ff,#0095ff,#0092ff,#008fff,#008cff,#0089ff,#0086ff,#0083ff,#0080ff,#017dff,#0d7aff,#1977ff,#2574ff,#3171ff,#3d6dff,#496aff,#5667ff,#6263ff,#6f60ff,#7c5dff,#8959ff,#9656ff,#a352ff,#b14fff,#be4bff,#cc47ff,#da44ff,#e840ff,#f63cff,#ff37fa,#ff31ed,#ff2be1,#ff26d6,#ff21cc,#ff1cc3,#ff18ba,#ff14b2,#ff10ab,#ff0da4,#ff0a9e,#ff0798,#ff0492,#ff028d,#ff0088,#ff0084,#ff007f,#ff007b,#ff0077,#ff0073,#ff0070,#ff006c,#ff0069,#ff0066,#ff0063,#ff0060,#ff005e,#ff005b,#ff0059,#ff0056,#ff0054,#ff0052,#ff0050,#ff004e,#ff004c,#ff004a,#ff0048,#ff0046)"></div><div style="left:40px;top:190px;width:560px;height:2.5px;background:linear-gradient(90deg,#00a3ff,#00a0ff,#009dff,#009bff,#0098ff,#0095ff,#0092ff,#008fff,#008dff,#008aff,#0087ff,#0084ff,#0081ff,#007eff,#007bff,#0c78ff,#1874ff,#2471ff,#2f6eff,#3b6bff,#4868ff,#5464ff,#6061ff,#6d5eff,#7a5aff,#8657ff,#9353ff,#a050ff,#ae4cff,#bb49ff,#c845ff,#d642ff,#e43eff,#f23aff,#ff36fe,#ff30f1,#ff2ae5,#ff25da,#ff20cf,#ff1bc6,#ff17bd,#ff13b5,#ff10ae,#ff0ca7,#ff09a0,#ff069a,#ff0495,#ff018f,#ff008a,#ff0086,#ff0081,#ff007d,#ff0079,#ff0075,#ff0072,#ff006e,#ff006b,#ff0068,#ff0065,#ff0062,#ff005f,#ff005d,#ff005a,#ff0058,#ff0055,#ff0053,#ff0051,#ff004f,#ff004d,#ff004b,#ff0049)"></div><div style="left:40px;top:192px;width:560px;height:2.5px;background:linear-gradient(90deg,#00a0ff,#009dff,#009bff,#0098ff,#0095ff,#0092ff,#0090ff,#008dff,#008aff,#0087ff,#0084ff,#0081ff,#007eff,#007bff,#0078ff,#0b75ff,#1772ff,#226fff,#2e6cff,#3a68ff,#4665ff,#5262ff,#5e5fff,#6b5bff,#7758ff,#8455ff,#9151ff,#9e4eff,#ab4aff,#b847ff,#c543ff,#d240ff,#e03cff,#ee38ff,#fc35ff,#ff2ff5,#ff29e8,#ff24dd,#ff1fd3,#ff1ac9,#ff16c0,#ff12b8,#ff0fb1,#ff0caa,#ff08a3,#ff069d,#ff0397,#ff0092,#ff008d,#ff0088,#ff0083,#ff007f,#ff007b,#ff0077,#ff0073,#ff0070,#ff006d,#ff0069,#ff0066,#ff0064,#ff0061,#ff005e,#ff005c,#ff0059,#ff0057,#ff0055,#ff0052,#ff0050,#ff004e,#ff004c,#ff004b)"></div><div style="left:40px;top:194px;width:560px;height:2.5px;background:linear-gradient(90deg,#009dff,#009bff,#0098ff,#0095ff,#0093ff,#0090ff,#008dff,#008aff,#0087ff,#0084ff,#0082ff,#007fff,#007cff,#0079ff,#0076ff,#0a73ff,#1670ff,#216cff,#2d69ff,#3966ff,#4563ff,#5160ff,#5d5dff,#6959ff,#7556ff,#8253ff,#8e4fff,#9b4cff,#a848ff,#b545ff,#c241ff,#cf3eff,#dc3aff,#ea37ff,#f833ff,#ff2ef9,#ff28ec,#ff23e1,#ff1ed6,#ff1acc,#ff15c3,#ff12bb,#ff0eb4,#ff0bac,#ff08a6,#ff059f,#ff029a,#ff0094,#ff008f,#ff008a,#ff0085,#ff0081,#ff007d,#ff0079,#ff0075,#ff0072,#ff006e,#ff006b,#ff0068,#ff0065,#ff0062,#ff0060,#ff005d,#ff005b,#ff0058,#ff0056,#ff0054,#ff0052,#ff0050,#ff004e,#ff004c)"></div><div style="left:40px;top:196px;width:560px;height:2.5px;background:linear-gradient(90deg,#009bff,#0098ff,#0095ff,#0093ff,#0090ff,#008dff,#008aff,#0088ff,#0085ff,#0082ff,#007fff,#007cff,#0079ff,#0076ff,#0073ff,#0a70ff,#156dff,#206aff,#2c67ff,#3764ff,#4361ff,#4f5eff,#5b5aff,#6757ff,#7354ff,#7f51ff,#8c4dff,#984aff,#a546ff,#b243ff,#bf3fff,#cc3cff,#d938ff,#e635ff,#f431ff,#ff2dfd,#ff27f0,#ff22e4,#ff1dda,#ff19d0,#ff15c7,#ff11be,#ff0db6,#ff0aaf,#ff07a8,#ff04a2,#ff019c,#ff0096,#ff0091,#ff008c,#ff0088,#ff0083,#ff007f,#ff007b,#ff0077,#ff0074,#ff0070,#ff006d,#ff006a,#ff0067,#ff0064,#ff0061,#ff005f,#ff005c,#ff005a,#ff0057,#ff0055,#ff0053,#ff0051,#ff004f,#ff004d)"></div><div style="left:40px;top:198px;width:552px;height:2.5px;background:linear-gradient(90deg,#0098ff,#0095ff,#0093ff,#0090ff,#008dff,#008bff,#0088ff,#0085ff,#0082ff,#0080ff,#007dff,#007aff,#0077ff,#0074ff,#0071ff,#096eff,#146bff,#1f68ff,#2b65ff,#3662ff,#425fff,#4d5bff,#5958ff,#6555ff,#7152ff,#7d4eff,#894bff,#9648ff,#a244ff,#af41ff,#bc3eff,#c83aff,#d537ff,#e333ff,#f02fff,#fd2cff,#ff26f4,#ff21e8,#ff1cdd,#ff18d3,#ff14ca,#ff10c1,#ff0cb9,#ff09b2,#ff06ab,#ff03a4,#ff019e,#ff0099,#ff0093,#ff008e,#ff008a,#ff0085,#ff0081,#ff007d,#ff0079,#ff0075,#ff0072,#ff006f,#ff006c,#ff0068,#ff0066,#ff0063,#ff0060,#ff005e,#ff005b,#ff0059,#ff0057,#ff0054,#ff0052,#ff0050)"></div><div style="left:40px;top:200px;width:552px;height:2.5px;background:linear-gradient(90deg,#0096ff,#0093ff,#0090ff,#008eff,#008bff,#0088ff,#0086ff,#0083ff,#0080ff,#007dff,#007aff,#0077ff,#0075ff,#0072ff,#006fff,#086cff,#1369ff,#1e66ff,#2963ff,#3560ff,#405dff,#4c59ff,#5756ff,#6353ff,#6f50ff,#7b4dff,#8749ff,#9346ff,#a043ff,#ac3fff,#b93cff,#c538ff,#d235ff,#df31ff,#ec2eff,#f92aff,#ff25f8,#ff20eb,#ff1be0,#ff17d6,#ff13cd,#ff0fc4,#ff0cbc,#ff08b5,#ff05ae,#ff03a7,#ff00a1,#ff009b,#ff0096,#ff0091,#ff008c,#ff0087,#ff0083,#ff007f,#ff007b,#ff0077,#ff0074,#ff0070,#ff006d,#ff006a,#ff0067,#ff0064,#ff0062,#ff005f,#ff005d,#ff005a,#ff0058,#ff0056,#ff0054,#ff0052)"></div><div style="left:40px;top:202px;width:552px;height:2.5px;background:linear-gradient(90deg,#0093ff,#0090ff,#008eff,#008bff,#0089ff,#0086ff,#0083ff,#0080ff,#007eff,#007bff,#0078ff,#0075ff,#0072ff,#006fff,#006dff,#076aff,#1267ff,#1d64ff,#2861ff,#335eff,#3f5aff,#4a57ff,#5654ff,#6151ff,#6d4eff,#794bff,#8547ff,#9144ff,#9d41ff,#a93dff,#b63aff,#c237ff,#cf33ff,#dc30ff,#e92cff,#f628ff,#ff24fb,#ff1fef,#ff1ae4,#ff16d9,#ff12d0,#ff0ec7,#ff0bbf,#ff08b7,#ff05b0,#ff02aa,#ff00a3,#ff009d,#ff0098,#ff0093,#ff008e,#ff0089,#ff0085,#ff0081,#ff007d,#ff0079,#ff0076,#ff0072,#ff006f,#ff006c,#ff0069,#ff0066,#ff0063,#ff0061,#ff005e,#ff005c,#ff0059,#ff0057,#ff0055,#ff0053)"></div><div style="left:48px;top:204px;width:544px;height:2.5px;background:linear-gradient(90deg,#008eff,#008bff,#0089ff,#0086ff,#0083ff,#0081ff,#007eff,#007bff,#0079ff,#0076ff,#0073ff,#0070ff,#006dff,#006aff,#0767ff,#1164ff,#1c62ff,#275eff,#325bff,#3d58ff,#4955ff,#5452ff,#5f4fff,#6b4cff,#7749ff,#8245ff,#8e42ff,#9a3fff,#a73cff,#b338ff,#bf35ff,#cc31ff,#d82eff,#e52aff,#f227ff,#ff23ff,#ff1ef3,#ff1ae7,#ff15dd,#ff11d3,#ff0dca,#ff0ac2,#ff07ba,#ff04b3,#ff01ac,#ff00a6,#ff00a0,#ff009a,#ff0095,#ff0090,#ff008b,#ff0087,#ff0083,#ff007f,#ff007b,#ff0077,#ff0074,#ff0071,#ff006d,#ff006a,#ff0068,#ff0065,#ff0062,#ff0060,#ff005d,#ff005b,#ff0059,#ff0056,#ff0054)"></div><div style="left:48px;top:206px;width:544px;height:2.5px;background:linear-gradient(90deg,#008cff,#0089ff,#0086ff,#0084ff,#0081ff,#007fff,#007cff,#0079ff,#0076ff,#0074ff,#0071ff,#006eff,#006bff,#0068ff,#0665ff,#1162ff,#1b5fff,#265cff,#3159ff,#3c56ff,#4753ff,#5250ff,#5e4dff,#694aff,#7547ff,#8044ff,#8c40ff,#983dff,#a43aff,#b037ff,#bc33ff,#c930ff,#d52cff,#e229ff,#ee25ff,#fb22ff,#ff1df6,#ff19eb,#ff14e0,#ff10d6,#ff0dcd,#ff09c5,#ff06bd,#ff03b5,#ff00af,#ff00a8,#ff00a2,#ff009d,#ff0097,#ff0092,#ff008d,#ff0089,#ff0085,#ff0081,#ff007d,#ff0079,#ff0076,#ff0072,#ff006f,#ff006c,#ff0069,#ff0066,#ff0064,#ff0061,#ff005f,#ff005c,#ff005a,#ff0058,#ff0056)"></div><div style="left:48px;top:208px;width:536px;height:2.5px;background:linear-gradient(90deg,#0089ff,#0087ff,#0084ff,#0082ff,#007fff,#007cff,#007aff,#0077ff,#0074ff,#0071ff,#006fff,#006cff,#0069ff,#0066ff,#0563ff,#1060ff,#1a5dff,#255aff,#3058ff,#3b55ff,#4651ff,#514eff,#5c4bff,#6748ff,#7345ff,#7e42ff,#8a3fff,#963bff,#a138ff,#ad35ff,#b932ff,#c52eff,#d22bff,#de27ff,#eb24ff,#f720ff,#ff1cfa,#ff18ee,#ff13e3,#ff0fd9,#ff0cd0,#ff08c8,#ff05c0,#ff02b8,#ff00b1,#ff00ab,#ff00a5,#ff009f,#ff0099,#ff0094,#ff0090,#ff008b,#ff0087,#ff0083,#ff007f,#ff007b,#ff0077,#ff0074,#ff0071,#ff006e,#ff006b,#ff0068,#ff0065,#ff0063,#ff0060,#ff005e,#ff005b,#ff0059)"></div><div style="left:48px;top:210px;width:536px;height:2.5px;background:linear-gradient(90deg,#0087ff,#0085ff,#0082ff,#007fff,#007dff,#007aff,#0077ff,#0075ff,#0072ff,#006fff,#006dff,#006aff,#0067ff,#0064ff,#0561ff,#0f5eff,#195bff,#2459ff,#2f56ff,#3953ff,#4450ff,#4f4dff,#5a4aff,#6546ff,#7143ff,#7c40ff,#883dff,#933aff,#9f37ff,#ab33ff,#b730ff,#c32dff,#cf29ff,#db26ff,#e722ff,#f41fff,#ff1bfe,#ff17f2,#ff13e7,#ff0fdd,#ff0bd3,#ff08ca,#ff04c2,#ff02bb,#ff00b4,#ff00ad,#ff00a7,#ff00a1,#ff009c,#ff0097,#ff0092,#ff008d,#ff0089,#ff0085,#ff0081,#ff007d,#ff0079,#ff0076,#ff0073,#ff006f,#ff006c,#ff006a,#ff0067,#ff0064,#ff0062,#ff005f,#ff005d,#ff005b)"></div><div style="left:48px;top:212px;width:536px;height:2.5px;background:linear-gradient(90deg,#0085ff,#0082ff,#0080ff,#007dff,#007bff,#0078ff,#0075ff,#0073ff,#0070ff,#006dff,#006aff,#0068ff,#0065ff,#0062ff,#045fff,#0e5cff,#195aff,#2357ff,#2e54ff,#3851ff,#434eff,#4e4bff,#5948ff,#6445ff,#6f42ff,#7a3eff,#853bff,#9138ff,#9c35ff,#a832ff,#b42eff,#c02bff,#cc28ff,#d824ff,#e421ff,#f01eff,#fd1aff,#ff16f5,#ff12ea,#ff0ee0,#ff0ad6,#ff07cd,#ff04c5,#ff01be,#ff00b6,#ff00b0,#ff00a9,#ff00a4,#ff009e,#ff0099,#ff0094,#ff008f,#ff008b,#ff0086,#ff0082,#ff007f,#ff007b,#ff0078,#ff0074,#ff0071,#ff006e,#ff006b,#ff0068,#ff0066,#ff0063,#ff0061,#ff005e,#ff005c)"></div><div style="left:48px;top:214px;width:536px;height:2.5px;background:linear-gradient(90deg,#0083ff,#0080ff,#007eff,#007bff,#0078ff,#0076ff,#0073ff,#0071ff,#006eff,#006bff,#0068ff,#0066ff,#0063ff,#0060ff,#035dff,#0d5bff,#1858ff,#2255ff,#2c52ff,#374fff,#424cff,#4c49ff,#5746ff,#6243ff,#6d40ff,#783dff,#833aff,#8f37ff,#9a33ff,#a530ff,#b12dff,#bd2aff,#c926ff,#d523ff,#e120ff,#ed1cff,#f919ff,#ff15f9,#ff11ed,#ff0de3,#ff09d9,#ff06d0,#ff03c8,#ff00c0,#ff00b9,#ff00b2,#ff00ac,#ff00a6,#ff00a0,#ff009b,#ff0096,#ff0091,#ff008d,#ff0088,#ff0084,#ff0080,#ff007d,#ff0079,#ff0076,#ff0073,#ff0070,#ff006d,#ff006a,#ff0067,#ff0065,#ff0062,#ff0060,#ff005d)"></div><div style="left:48px;top:216px;width:528px;height:2.5px;background:linear-gradient(90deg,#0081ff,#007eff,#007bff,#0079ff,#0076ff,#0074ff,#0071ff,#006fff,#006cff,#0069ff,#0067ff,#0064ff,#0061ff,#005eff,#035cff,#0d59ff,#1756ff,#2153ff,#2b50ff,#364dff,#404aff,#4b47ff,#5644ff,#6041ff,#6b3eff,#763bff,#8138ff,#8c35ff,#9832ff,#a32fff,#ae2bff,#ba28ff,#c625ff,#d122ff,#dd1eff,#e91bff,#f518ff,#ff14fc,#ff10f1,#ff0ce6,#ff08dc,#ff05d3,#ff02cb,#ff00c3,#ff00bc,#ff00b5,#ff00ae,#ff00a8,#ff00a3,#ff009d,#ff0098,#ff0093,#ff008f,#ff008a,#ff0086,#ff0082,#ff007f,#ff007b,#ff0078,#ff0074,#ff0071,#ff006e,#ff006b,#ff0069,#ff0066,#ff0064,#ff0061)"></div><div style="left:48px;top:218px;width:528px;height:2.5px;background:linear-gradient(90deg,#007eff,#007cff,#0079ff,#0077ff,#0074ff,#0072ff,#006fff,#006dff,#006aff,#0067ff,#0065ff,#0062ff,#005fff,#005cff,#025aff,#0c57ff,#1654ff,#2051ff,#2a4eff,#354bff,#3f49ff,#4946ff,#5443ff,#5f40ff,#693dff,#743aff,#7f37ff,#8a33ff,#9530ff,#a12dff,#ac2aff,#b727ff,#c324ff,#ce20ff,#da1dff,#e61aff,#f216ff,#fe13ff,#ff0ff4,#ff0be9,#ff08df,#ff04d6,#ff01ce,#ff00c6,#ff00be,#ff00b7,#ff00b1,#ff00ab,#ff00a5,#ff009f,#ff009a,#ff0095,#ff0091,#ff008c,#ff0088,#ff0084,#ff0080,#ff007d,#ff0079,#ff0076,#ff0073,#ff0070,#ff006d,#ff006a,#ff0068,#ff0065,#ff0062)"></div><div style="left:56px;top:220px;width:520px;height:2.5px;background:linear-gradient(90deg,#007aff,#0077ff,#0075ff,#0072ff,#0070ff,#006dff,#006bff,#0068ff,#0065ff,#0063ff,#0060ff,#005dff,#005bff,#0158ff,#0b55ff,#1552ff,#1f4fff,#294dff,#334aff,#3e47ff,#4844ff,#5341ff,#5d3eff,#683bff,#7238ff,#7d35ff,#8832ff,#932fff,#9e2cff,#a929ff,#b525ff,#c022ff,#cc1fff,#d71cff,#e318ff,#ef15ff,#fb12ff,#ff0ef8,#ff0aed,#ff07e3,#ff03d9,#ff00d1,#ff00c8,#ff00c1,#ff00ba,#ff00b3,#ff00ad,#ff00a7,#ff00a2,#ff009c,#ff0097,#ff0093,#ff008e,#ff008a,#ff0086,#ff0082,#ff007e,#ff007b,#ff0078,#ff0074,#ff0071,#ff006f,#ff006c,#ff0069,#ff0066,#ff0064)"></div><div style="left:56px;top:222px;width:520px;height:2.5px;background:linear-gradient(90deg,#0078ff,#0075ff,#0073ff,#0070ff,#006eff,#006bff,#0069ff,#0066ff,#0063ff,#0061ff,#005eff,#005cff,#0059ff,#0156ff,#0b53ff,#1451ff,#1e4eff,#284bff,#3248ff,#3d45ff,#4742ff,#513fff,#5b3dff,#663aff,#7137ff,#7b34ff,#8631ff,#912dff,#9c2aff,#a727ff,#b224ff,#bd21ff,#c91eff,#d41aff,#e017ff,#eb14ff,#f711ff,#ff0dfb,#ff09f0,#ff06e6,#ff03dc,#ff00d3,#ff00cb,#ff00c4,#ff00bc,#ff00b6,#ff00af,#ff00a9,#ff00a4,#ff009e,#ff0099,#ff0095,#ff0090,#ff008c,#ff0088,#ff0084,#ff0080,#ff007d,#ff0079,#ff0076,#ff0073,#ff0070,#ff006d,#ff006a,#ff0068,#ff0065)"></div><div style="left:56px;top:224px;width:512px;height:2.5px;background:linear-gradient(90deg,#0076ff,#0073ff,#0071ff,#006eff,#006cff,#0069ff,#0067ff,#0064ff,#0062ff,#005fff,#005cff,#005aff,#0057ff,#0054ff,#0a52ff,#144fff,#1d4cff,#2749ff,#3146ff,#3b44ff,#4541ff,#503eff,#5a3bff,#6438ff,#6f35ff,#7932ff,#842fff,#8f2cff,#9a29ff,#a526ff,#b023ff,#bb20ff,#c61cff,#d119ff,#dd16ff,#e813ff,#f40fff,#ff0cff,#ff08f3,#ff05e9,#ff02df,#ff00d6,#ff00ce,#ff00c6,#ff00bf,#ff00b8,#ff00b2,#ff00ac,#ff00a6,#ff00a1,#ff009c,#ff0097,#ff0092,#ff008e,#ff008a,#ff0086,#ff0082,#ff007e,#ff007b,#ff0078,#ff0075,#ff0072,#ff006f,#ff006c,#ff0069)"></div><div style="left:56px;top:226px;width:512px;height:2.5px;background:linear-gradient(90deg,#0074ff,#0072ff,#006fff,#006dff,#006aff,#0068ff,#0065ff,#0062ff,#0060ff,#005dff,#005bff,#0058ff,#0055ff,#0053ff,#0950ff,#134dff,#1d4aff,#2648ff,#3045ff,#3a42ff,#443fff,#4e3cff,#5839ff,#6337ff,#6d34ff,#7731ff,#822eff,#8d2bff,#9728ff,#a225ff,#ad21ff,#b81eff,#c31bff,#ce18ff,#da15ff,#e512ff,#f00eff,#fc0bff,#ff07f7,#ff04ec,#ff01e2,#ff00d9,#ff00d1,#ff00c9,#ff00c1,#ff00bb,#ff00b4,#ff00ae,#ff00a8,#ff00a3,#ff009e,#ff0099,#ff0094,#ff0090,#ff008c,#ff0088,#ff0084,#ff0080,#ff007d,#ff0079,#ff0076,#ff0073,#ff0070,#ff006d,#ff006b)"></div><div style="left:56px;top:228px;width:512px;height:2.5px;background:linear-gradient(90deg,#0072ff,#0070ff,#006dff,#006bff,#0068ff,#0066ff,#0063ff,#0061ff,#005eff,#005cff,#0059ff,#0056ff,#0054ff,#0051ff,#094eff,#124cff,#1c49ff,#2546ff,#2f43ff,#3941ff,#433eff,#4d3bff,#5738ff,#6135ff,#6b32ff,#762fff,#802cff,#8b29ff,#9526ff,#a023ff,#ab20ff,#b51dff,#c01aff,#cb17ff,#d714ff,#e210ff,#ed0dff,#f90aff,#ff07fa,#ff03ef,#ff00e5,#ff00dc,#ff00d4,#ff00cc,#ff00c4,#ff00bd,#ff00b6,#ff00b0,#ff00aa,#ff00a5,#ff00a0,#ff009b,#ff0096,#ff0092,#ff008d,#ff0089,#ff0086,#ff0082,#ff007e,#ff007b,#ff0078,#ff0075,#ff0072,#ff006f,#ff006c)"></div><div style="left:56px;top:230px;width:512px;height:2.5px;background:linear-gradient(90deg,#0070ff,#006eff,#006bff,#0069ff,#0066ff,#0064ff,#0061ff,#005fff,#005cff,#005aff,#0057ff,#0055ff,#0052ff,#004fff,#084dff,#114aff,#1b47ff,#2445ff,#2e42ff,#383fff,#423cff,#4c39ff,#5537ff,#6034ff,#6a31ff,#742eff,#7e2bff,#8928ff,#9325ff,#9e22ff,#a81fff,#b31cff,#be19ff,#c916ff,#d413ff,#df0fff,#ea0cff,#f509ff,#ff06fd,#ff02f2,#ff00e8,#ff00df,#ff00d6,#ff00ce,#ff00c7,#ff00c0,#ff00b9,#ff00b3,#ff00ad,#ff00a7,#ff00a2,#ff009d,#ff0098,#ff0094,#ff008f,#ff008b,#ff0087,#ff0084,#ff0080,#ff007d,#ff0079,#ff0076,#ff0073,#ff0070,#ff006e)"></div><div style="left:56px;top:232px;width:504px;height:2.5px;background:linear-gradient(90deg,#006eff,#006cff,#006aff,#0067ff,#0065ff,#0062ff,#0060ff,#005dff,#005bff,#0058ff,#0056ff,#0053ff,#0050ff,#004eff,#074bff,#1148ff,#1a46ff,#2443ff,#2d40ff,#373eff,#403bff,#4a38ff,#5435ff,#5e32ff,#682fff,#722dff,#7c2aff,#8727ff,#9124ff,#9b21ff,#a61eff,#b11bff,#bb18ff,#c615ff,#d111ff,#dc0eff,#e70bff,#f208ff,#fd05ff,#ff01f6,#ff00eb,#ff00e2,#ff00d9,#ff00d1,#ff00c9,#ff00c2,#ff00bb,#ff00b5,#ff00af,#ff00a9,#ff00a4,#ff009f,#ff009a,#ff0095,#ff0091,#ff008d,#ff0089,#ff0085,#ff0082,#ff007e,#ff007b,#ff0078,#ff0075,#ff0072)"></div><div style="left:56px;top:234px;width:504px;height:2.5px;background:linear-gradient(90deg,#006dff,#006aff,#0068ff,#0065ff,#0063ff,#0061ff,#005eff,#005cff,#0059ff,#0057ff,#0054ff,#0051ff,#004fff,#004cff,#074aff,#1047ff,#1944ff,#2342ff,#2c3fff,#363cff,#3f39ff,#4937ff,#5334ff,#5d31ff,#662eff,#702bff,#7a28ff,#8525ff,#8f23ff,#9920ff,#a41dff,#ae1aff,#b917ff,#c313ff,#ce10ff,#d90dff,#e40aff,#ef07ff,#fa04ff,#ff01f9,#ff00ee,#ff00e5,#ff00dc,#ff00d4,#ff00cc,#ff00c5,#ff00be,#ff00b7,#ff00b1,#ff00ab,#ff00a6,#ff00a1,#ff009c,#ff0097,#ff0093,#ff008f,#ff008b,#ff0087,#ff0083,#ff0080,#ff007d,#ff0079,#ff0076,#ff0073)"></div><div style="left:64px;top:236px;width:496px;height:2.5px;background:linear-gradient(90deg,#0068ff,#0066ff,#0064ff,#0061ff,#005fff,#005cff,#005aff,#0057ff,#0055ff,#0052ff,#0050ff,#004dff,#004bff,#0648ff,#0f45ff,#1843ff,#2240ff,#2b3dff,#353bff,#3e38ff,#4835ff,#5132ff,#5b30ff,#652dff,#6f2aff,#7927ff,#8324ff,#8d21ff,#971eff,#a11bff,#ac18ff,#b615ff,#c112ff,#cb0fff,#d60cff,#e109ff,#ec06ff,#f703ff,#ff00fc,#ff00f2,#ff00e8,#ff00df,#ff00d6,#ff00ce,#ff00c7,#ff00c0,#ff00ba,#ff00b3,#ff00ae,#ff00a8,#ff00a3,#ff009e,#ff0099,#ff0095,#ff0091,#ff008d,#ff0089,#ff0085,#ff0082,#ff007e,#ff007b,#ff0078,#ff0075)"></div><div style="left:64px;top:238px;width:496px;height:2.5px;background:linear-gradient(90deg,#0067ff,#0064ff,#0062ff,#0060ff,#005dff,#005bff,#0058ff,#0056ff,#0053ff,#0051ff,#004eff,#004cff,#0049ff,#0647ff,#0f44ff,#1841ff,#213fff,#2a3cff,#3439ff,#3d37ff,#4634ff,#5031ff,#5a2eff,#632cff,#6d29ff,#7726ff,#8123ff,#8b20ff,#951dff,#9f1aff,#a917ff,#b414ff,#be11ff,#c90eff,#d30bff,#de08ff,#e905ff,#f402ff,#ff00ff,#ff00f5,#ff00eb,#ff00e2,#ff00d9,#ff00d1,#ff00ca,#ff00c3,#ff00bc,#ff00b6,#ff00b0,#ff00aa,#ff00a5,#ff00a0,#ff009b,#ff0097,#ff0093,#ff008e,#ff008b,#ff0087,#ff0083,#ff0080,#ff007d,#ff0079,#ff0076)"></div><div style="left:64px;top:240px;width:488px;height:2.5px;background:linear-gradient(90deg,#0065ff,#0063ff,#0060ff,#005eff,#005cff,#0059ff,#0057ff,#0054ff,#0052ff,#004fff,#004dff,#004aff,#0048ff,#0545ff,#0e42ff,#1740ff,#203dff,#293bff,#3238ff,#3c35ff,#4533ff,#4f30ff,#582dff,#622aff,#6b27ff,#7525ff,#7f22ff,#891fff,#931cff,#9d19ff,#a716ff,#b113ff,#bc10ff,#c60dff,#d10aff,#db07ff,#e604ff,#f101ff,#fc00ff,#ff00f8,#ff00ee,#ff00e4,#ff00dc,#ff00d4,#ff00cc,#ff00c5,#ff00be,#ff00b8,#ff00b2,#ff00ac,#ff00a7,#ff00a2,#ff009d,#ff0099,#ff0094,#ff0090,#ff008c,#ff0089,#ff0085,#ff0082,#ff007e,#ff007b)"></div><div style="left:64px;top:242px;width:488px;height:2.5px;background:linear-gradient(90deg,#0063ff,#0061ff,#005fff,#005cff,#005aff,#0058ff,#0055ff,#0053ff,#0050ff,#004eff,#004bff,#0049ff,#0046ff,#0444ff,#0d41ff,#163eff,#1f3cff,#2839ff,#3137ff,#3b34ff,#4431ff,#4d2fff,#572cff,#6029ff,#6a26ff,#7423ff,#7d21ff,#871eff,#911bff,#9b18ff,#a515ff,#af12ff,#b90fff,#c40cff,#ce09ff,#d806ff,#e303ff,#ee00ff,#f800ff,#ff00fb,#ff00f1,#ff00e7,#ff00df,#ff00d6,#ff00cf,#ff00c7,#ff00c1,#ff00ba,#ff00b4,#ff00af,#ff00a9,#ff00a4,#ff009f,#ff009b,#ff0096,#ff0092,#ff008e,#ff008a,#ff0087,#ff0083,#ff0080,#ff007d)"></div><div style="left:64px;top:244px;width:488px;height:2.5px;background:linear-gradient(90deg,#0062ff,#005fff,#005dff,#005bff,#0058ff,#0056ff,#0054ff,#0051ff,#004fff,#004cff,#004aff,#0047ff,#0045ff,#0442ff,#0d40ff,#153dff,#1e3bff,#2738ff,#3035ff,#3a33ff,#4330ff,#4c2dff,#552bff,#5f28ff,#6825ff,#7222ff,#7c1fff,#851dff,#8f1aff,#9917ff,#a314ff,#ad11ff,#b70eff,#c10bff,#cb08ff,#d605ff,#e002ff,#eb00ff,#f500ff,#ff00fe,#ff00f4,#ff00ea,#ff00e1,#ff00d9,#ff00d1,#ff00ca,#ff00c3,#ff00bd,#ff00b7,#ff00b1,#ff00ab,#ff00a6,#ff00a1,#ff009d,#ff0098,#ff0094,#ff0090,#ff008c,#ff0088,#ff0085,#ff0081,#ff007e)"></div><div style="left:64px;top:246px;width:488px;height:2.5px;background:linear-gradient(90deg,#0060ff,#005eff,#005cff,#0059ff,#0057ff,#0054ff,#0052ff,#0050ff,#004dff,#004bff,#0048ff,#0046ff,#0043ff,#0341ff,#0c3eff,#153cff,#1e39ff,#2737ff,#2f34ff,#3931ff,#422fff,#4b2cff,#5429ff,#5d27ff,#6724ff,#7021ff,#7a1eff,#831cff,#8d19ff,#9716ff,#a113ff,#ab10ff,#b50dff,#bf0aff,#c907ff,#d304ff,#dd01ff,#e800ff,#f200ff,#fd00ff,#ff00f7,#ff00ed,#ff00e4,#ff00dc,#ff00d4,#ff00cc,#ff00c5,#ff00bf,#ff00b9,#ff00b3,#ff00ad,#ff00a8,#ff00a3,#ff009e,#ff009a,#ff0096,#ff0092,#ff008e,#ff008a,#ff0086,#ff0083,#ff0080)"></div><div style="left:64px;top:248px;width:480px;height:2.5px;background:linear-gradient(90deg,#005fff,#005cff,#005aff,#0058ff,#0055ff,#0053ff,#0051ff,#004eff,#004cff,#0049ff,#0047ff,#0044ff,#0042ff,#033fff,#0b3dff,#143aff,#1d38ff,#2635ff,#2f33ff,#3730ff,#412dff,#4a2bff,#5328ff,#5c25ff,#6523ff,#6f20ff,#781dff,#821aff,#8b18ff,#9515ff,#9f12ff,#a80fff,#b20cff,#bc09ff,#c606ff,#d004ff,#db01ff,#e500ff,#ef00ff,#fa00ff,#ff00fa,#ff00f0,#ff00e7,#ff00de,#ff00d6,#ff00cf,#ff00c8,#ff00c1,#ff00bb,#ff00b5,#ff00af,#ff00aa,#ff00a5,#ff00a0,#ff009c,#ff0098,#ff0093,#ff008f,#ff008c,#ff0088,#ff0085)"></div><div style="left:72px;top:250px;width:472px;height:2.5px;background:linear-gradient(90deg,#005bff,#0059ff,#0056ff,#0054ff,#0052ff,#004fff,#004dff,#004aff,#0048ff,#0046ff,#0043ff,#0041ff,#023eff,#0b3cff,#1339ff,#1c37ff,#2534ff,#2e31ff,#362fff,#3f2cff,#482aff,#5127ff,#5b24ff,#6422ff,#6d1fff,#761cff,#8019ff,#8917ff,#9314ff,#9d11ff,#a60eff,#b00bff,#ba08ff,#c406ff,#ce03ff,#d800ff,#e200ff,#ec00ff,#f700ff,#ff00fd,#ff00f3,#ff00ea,#ff00e1,#ff00d9,#ff00d1,#ff00ca,#ff00c4,#ff00bd,#ff00b7,#ff00b2,#ff00ac,#ff00a7,#ff00a2,#ff009e,#ff0099,#ff0095,#ff0091,#ff008d,#ff008a,#ff0086)"></div><div style="left:72px;top:252px;width:472px;height:2.5px;background:linear-gradient(90deg,#0059ff,#0057ff,#0055ff,#0052ff,#0050ff,#004eff,#004bff,#0049ff,#0047ff,#0044ff,#0042ff,#003fff,#023dff,#0a3aff,#1338ff,#1b35ff,#2433ff,#2d30ff,#352eff,#3e2bff,#4728ff,#5026ff,#5923ff,#6221ff,#6c1eff,#751bff,#7e18ff,#8816ff,#9113ff,#9b10ff,#a40dff,#ae0aff,#b808ff,#c105ff,#cb02ff,#d500ff,#df00ff,#ea00ff,#f400ff,#fe00ff,#ff00f6,#ff00ec,#ff00e4,#ff00dc,#ff00d4,#ff00cd,#ff00c6,#ff00bf,#ff00b9,#ff00b4,#ff00ae,#ff00a9,#ff00a4,#ff00a0,#ff009b,#ff0097,#ff0093,#ff008f,#ff008b,#ff0088)"></div><div style="left:72px;top:254px;width:472px;height:2.5px;background:linear-gradient(90deg,#0058ff,#0056ff,#0053ff,#0051ff,#004fff,#004cff,#004aff,#0048ff,#0045ff,#0043ff,#0040ff,#003eff,#013cff,#0a39ff,#1237ff,#1b34ff,#2332ff,#2c2fff,#342cff,#3d2aff,#4627ff,#4f25ff,#5822ff,#611fff,#6a1dff,#731aff,#7c17ff,#8615ff,#8f12ff,#990fff,#a20cff,#ac0aff,#b507ff,#bf04ff,#c901ff,#d300ff,#dd00ff,#e700ff,#f100ff,#fb00ff,#ff00f9,#ff00ef,#ff00e6,#ff00de,#ff00d6,#ff00cf,#ff00c8,#ff00c2,#ff00bc,#ff00b6,#ff00b0,#ff00ab,#ff00a6,#ff00a1,#ff009d,#ff0099,#ff0095,#ff0091,#ff008d,#ff0089)"></div><div style="left:72px;top:256px;width:464px;height:2.5px;background:linear-gradient(90deg,#0056ff,#0054ff,#0052ff,#0050ff,#004dff,#004bff,#0049ff,#0046ff,#0044ff,#0042ff,#003fff,#003dff,#013aff,#0938ff,#1135ff,#1a33ff,#2230ff,#2b2eff,#342bff,#3c29ff,#4526ff,#4e24ff,#5721ff,#601eff,#691cff,#7219ff,#7b16ff,#8414ff,#8d11ff,#970eff,#a00bff,#aa09ff,#b306ff,#bd03ff,#c600ff,#d000ff,#da00ff,#e400ff,#ee00ff,#f800ff,#ff00fc,#ff00f2,#ff00e9,#ff00e1,#ff00d9,#ff00d2,#ff00cb,#ff00c4,#ff00be,#ff00b8,#ff00b2,#ff00ad,#ff00a8,#ff00a3,#ff009f,#ff009b,#ff0096,#ff0092,#ff008f)"></div><div style="left:72px;top:258px;width:464px;height:2.5px;background:linear-gradient(90deg,#0055ff,#0053ff,#0050ff,#004eff,#004cff,#004aff,#0047ff,#0045ff,#0043ff,#0040ff,#003eff,#003bff,#0039ff,#0837ff,#1134ff,#1932ff,#222fff,#2a2dff,#332aff,#3b28ff,#4425ff,#4d23ff,#5520ff,#5e1dff,#671bff,#7018ff,#7915ff,#8213ff,#8c10ff,#950dff,#9e0bff,#a708ff,#b105ff,#ba02ff,#c400ff,#ce00ff,#d800ff,#e100ff,#eb00ff,#f500ff,#ff00ff,#ff00f5,#ff00ec,#ff00e3,#ff00db,#ff00d4,#ff00cd,#ff00c6,#ff00c0,#ff00ba,#ff00b4,#ff00af,#ff00aa,#ff00a5,#ff00a1,#ff009c,#ff0098,#ff0094,#ff0090)"></div><div style="left:72px;top:260px;width:464px;height:2.5px;background:linear-gradient(90deg,#0054ff,#0051ff,#004fff,#004dff,#004bff,#0048ff,#0046ff,#0044ff,#0041ff,#003fff,#003dff,#003aff,#0038ff,#0835ff,#1033ff,#1831ff,#212eff,#292cff,#3229ff,#3a27ff,#4324ff,#4b21ff,#541fff,#5d1cff,#661aff,#6f17ff,#7814ff,#8112ff,#8a0fff,#930cff,#9c0aff,#a507ff,#af04ff,#b801ff,#c200ff,#cb00ff,#d500ff,#df00ff,#e900ff,#f200ff,#fc00ff,#ff00f8,#ff00ef,#ff00e6,#ff00de,#ff00d6,#ff00cf,#ff00c9,#ff00c2,#ff00bc,#ff00b7,#ff00b1,#ff00ac,#ff00a7,#ff00a3,#ff009e,#ff009a,#ff0096,#ff0092)"></div><div style="left:72px;top:262px;width:464px;height:2.5px;background:linear-gradient(90deg,#0052ff,#0050ff,#004eff,#004bff,#0049ff,#0047ff,#0045ff,#0042ff,#0040ff,#003eff,#003bff,#0039ff,#0037ff,#0734ff,#0f32ff,#182fff,#202dff,#282aff,#3128ff,#3925ff,#4223ff,#4a20ff,#531eff,#5c1bff,#6419ff,#6d16ff,#7613ff,#7f11ff,#880eff,#910bff,#9a09ff,#a306ff,#ad03ff,#b601ff,#bf00ff,#c900ff,#d300ff,#dc00ff,#e600ff,#f000ff,#f900ff,#ff00fb,#ff00f1,#ff00e9,#ff00e1,#ff00d9,#ff00d2,#ff00cb,#ff00c4,#ff00be,#ff00b9,#ff00b3,#ff00ae,#ff00a9,#ff00a4,#ff00a0,#ff009c,#ff0098,#ff0094)"></div><div style="left:72px;top:264px;width:456px;height:2.5px;background:linear-gradient(90deg,#0051ff,#004fff,#004cff,#004aff,#0048ff,#0046ff,#0043ff,#0041ff,#003fff,#003cff,#003aff,#0038ff,#0035ff,#0733ff,#0f31ff,#172eff,#1f2cff,#2729ff,#3027ff,#3824ff,#4122ff,#491fff,#521dff,#5a1aff,#6318ff,#6c15ff,#7513ff,#7d10ff,#860dff,#8f0bff,#9808ff,#a105ff,#ab03ff,#b400ff,#bd00ff,#c700ff,#d000ff,#da00ff,#e300ff,#ed00ff,#f700ff,#ff00fe,#ff00f4,#ff00eb,#ff00e3,#ff00db,#ff00d4,#ff00cd,#ff00c7,#ff00c1,#ff00bb,#ff00b5,#ff00b0,#ff00ab,#ff00a6,#ff00a2,#ff009d,#ff0099)"></div><div style="left:80px;top:266px;width:448px;height:2.5px;background:linear-gradient(90deg,#004dff,#004bff,#0049ff,#0047ff,#0044ff,#0042ff,#0040ff,#003eff,#003bff,#0039ff,#0037ff,#0034ff,#0632ff,#0e30ff,#162dff,#1e2bff,#2728ff,#2f26ff,#3723ff,#4021ff,#481eff,#501cff,#5919ff,#6217ff,#6a14ff,#7312ff,#7c0fff,#850cff,#8e0aff,#9607ff,#a004ff,#a902ff,#b200ff,#bb00ff,#c400ff,#ce00ff,#d700ff,#e100ff,#ea00ff,#f400ff,#fe00ff,#ff00f7,#ff00ee,#ff00e6,#ff00de,#ff00d6,#ff00cf,#ff00c9,#ff00c3,#ff00bd,#ff00b7,#ff00b2,#ff00ad,#ff00a8,#ff00a4,#ff009f,#ff009b)"></div><div style="left:80px;top:268px;width:448px;height:2.5px;background:linear-gradient(90deg,#004cff,#004aff,#0048ff,#0045ff,#0043ff,#0041ff,#003fff,#003cff,#003aff,#0038ff,#0035ff,#0033ff,#0631ff,#0e2eff,#162cff,#1e2aff,#2627ff,#2e25ff,#3622ff,#3f20ff,#471dff,#4f1bff,#5818ff,#6016ff,#6913ff,#7111ff,#7a0eff,#830cff,#8c09ff,#9506ff,#9e04ff,#a701ff,#b000ff,#b900ff,#c200ff,#cb00ff,#d500ff,#de00ff,#e800ff,#f100ff,#fb00ff,#ff00fa,#ff00f1,#ff00e8,#ff00e0,#ff00d9,#ff00d2,#ff00cb,#ff00c5,#ff00bf,#ff00b9,#ff00b4,#ff00af,#ff00aa,#ff00a5,#ff00a1,#ff009d)"></div><div style="left:80px;top:270px;width:448px;height:2.5px;background:linear-gradient(90deg,#004bff,#0049ff,#0046ff,#0044ff,#0042ff,#0040ff,#003dff,#003bff,#0039ff,#0037ff,#0034ff,#0032ff,#0530ff,#0d2dff,#152bff,#1d29ff,#2526ff,#2d24ff,#3521ff,#3e1fff,#461cff,#4e1aff,#5717ff,#5f15ff,#6712ff,#7010ff,#790dff,#810bff,#8a08ff,#9305ff,#9c03ff,#a500ff,#ae00ff,#b700ff,#c000ff,#c900ff,#d200ff,#dc00ff,#e500ff,#ee00ff,#f800ff,#ff00fd,#ff00f3,#ff00eb,#ff00e3,#ff00db,#ff00d4,#ff00cd,#ff00c7,#ff00c1,#ff00bb,#ff00b6,#ff00b1,#ff00ac,#ff00a7,#ff00a3,#ff009e)"></div><div style="left:80px;top:272px;width:448px;height:2.5px;background:linear-gradient(90deg,#0049ff,#0047ff,#0045ff,#0043ff,#0041ff,#003eff,#003cff,#003aff,#0038ff,#0035ff,#0033ff,#0031ff,#052fff,#0d2cff,#142aff,#1c28ff,#2425ff,#2c23ff,#3420ff,#3d1eff,#451bff,#4d19ff,#5517ff,#5e14ff,#6612ff,#6f0fff,#770cff,#800aff,#8807ff,#9105ff,#9a02ff,#a300ff,#ac00ff,#b500ff,#be00ff,#c700ff,#d000ff,#d900ff,#e200ff,#ec00ff,#f500ff,#ff00ff,#ff00f6,#ff00ed,#ff00e5,#ff00de,#ff00d6,#ff00d0,#ff00c9,#ff00c3,#ff00bd,#ff00b8,#ff00b3,#ff00ae,#ff00a9,#ff00a5,#ff00a0)"></div><div style="left:80px;top:274px;width:440px;height:2.5px;background:linear-gradient(90deg,#0048ff,#0046ff,#0044ff,#0042ff,#0040ff,#003dff,#003bff,#0039ff,#0037ff,#0034ff,#0032ff,#0030ff,#042eff,#0c2bff,#1429ff,#1c26ff,#2424ff,#2c22ff,#341fff,#3c1dff,#441bff,#4c18ff,#5416ff,#5c13ff,#6511ff,#6d0eff,#760cff,#7e09ff,#8706ff,#8f04ff,#9801ff,#a100ff,#aa00ff,#b300ff,#bb00ff,#c500ff,#ce00ff,#d700ff,#e000ff,#e900ff,#f300ff,#fc00ff,#ff00f9,#ff00f0,#ff00e8,#ff00e0,#ff00d9,#ff00d2,#ff00cb,#ff00c5,#ff00bf,#ff00ba,#ff00b5,#ff00b0,#ff00ab,#ff00a6)"></div><div style="left:80px;top:276px;width:440px;height:2.5px;background:linear-gradient(90deg,#0047ff,#0045ff,#0043ff,#0041ff,#003eff,#003cff,#003aff,#0038ff,#0036ff,#0033ff,#0031ff,#002fff,#042cff,#0b2aff,#1328ff,#1b25ff,#2323ff,#2b21ff,#331eff,#3b1cff,#431aff,#4b17ff,#5315ff,#5b12ff,#6310ff,#6c0dff,#740bff,#7d08ff,#8506ff,#8e03ff,#9601ff,#9f00ff,#a800ff,#b100ff,#b900ff,#c200ff,#cb00ff,#d400ff,#dd00ff,#e700ff,#f000ff,#f900ff,#ff00fb,#ff00f3,#ff00ea,#ff00e2,#ff00db,#ff00d4,#ff00ce,#ff00c7,#ff00c2,#ff00bc,#ff00b7,#ff00b2,#ff00ad,#ff00a8)"></div><div style="left:80px;top:278px;width:440px;height:2.5px;background:linear-gradient(90deg,#0046ff,#0044ff,#0042ff,#003fff,#003dff,#003bff,#0039ff,#0037ff,#0034ff,#0032ff,#0030ff,#002eff,#032bff,#0b29ff,#1327ff,#1a24ff,#2222ff,#2a20ff,#321dff,#3a1bff,#4219ff,#4a16ff,#5214ff,#5a11ff,#620fff,#6a0cff,#730aff,#7b07ff,#8405ff,#8c02ff,#9500ff,#9d00ff,#a600ff,#af00ff,#b700ff,#c000ff,#c900ff,#d200ff,#db00ff,#e400ff,#ed00ff,#f600ff,#ff00fe,#ff00f5,#ff00ed,#ff00e5,#ff00dd,#ff00d6,#ff00d0,#ff00ca,#ff00c4,#ff00be,#ff00b9,#ff00b3,#ff00af,#ff00aa)"></div><div style="left:88px;top:280px;width:432px;height:2.5px;background:linear-gradient(90deg,#0042ff,#0040ff,#003eff,#003cff,#003aff,#0038ff,#0036ff,#0033ff,#0031ff,#002fff,#002dff,#032aff,#0a28ff,#1226ff,#1a24ff,#2121ff,#291fff,#311dff,#391aff,#4118ff,#4915ff,#5113ff,#5911ff,#610eff,#690cff,#7109ff,#7a07ff,#8204ff,#8a02ff,#9300ff,#9b00ff,#a400ff,#ad00ff,#b500ff,#be00ff,#c700ff,#d000ff,#d900ff,#e200ff,#eb00ff,#f400ff,#fd00ff,#ff00f8,#ff00ef,#ff00e7,#ff00e0,#ff00d9,#ff00d2,#ff00cc,#ff00c6,#ff00c0,#ff00ba,#ff00b5,#ff00b0,#ff00ac)"></div><div style="left:88px;top:282px;width:424px;height:2.5px;background:linear-gradient(90deg,#0041ff,#003fff,#003dff,#003bff,#0039ff,#0037ff,#0034ff,#0032ff,#0030ff,#002eff,#002cff,#0229ff,#0a27ff,#1125ff,#1923ff,#2120ff,#281eff,#301cff,#3819ff,#4017ff,#4815ff,#5012ff,#5810ff,#600dff,#680bff,#7008ff,#7806ff,#8003ff,#8901ff,#9100ff,#9a00ff,#a200ff,#ab00ff,#b300ff,#bc00ff,#c500ff,#cd00ff,#d600ff,#df00ff,#e800ff,#f100ff,#fa00ff,#ff00fb,#ff00f2,#ff00ea,#ff00e2,#ff00db,#ff00d4,#ff00ce,#ff00c8,#ff00c2,#ff00bc,#ff00b7,#ff00b2)"></div><div style="left:88px;top:284px;width:424px;height:2.5px;background:linear-gradient(90deg,#0040ff,#003eff,#003cff,#003aff,#0038ff,#0036ff,#0033ff,#0031ff,#002fff,#002dff,#002bff,#0228ff,#0926ff,#1124ff,#1822ff,#201fff,#281dff,#2f1bff,#3718ff,#3f16ff,#4714ff,#4e11ff,#560fff,#5e0cff,#660aff,#6f08ff,#7705ff,#7f03ff,#8700ff,#8f00ff,#9800ff,#a000ff,#a900ff,#b100ff,#ba00ff,#c300ff,#cb00ff,#d400ff,#dd00ff,#e600ff,#ef00ff,#f800ff,#ff00fd,#ff00f4,#ff00ec,#ff00e5,#ff00dd,#ff00d6,#ff00d0,#ff00ca,#ff00c4,#ff00be,#ff00b9,#ff00b4)"></div><div style="left:88px;top:286px;width:424px;height:2.5px;background:linear-gradient(90deg,#003fff,#003dff,#003bff,#0039ff,#0037ff,#0035ff,#0032ff,#0030ff,#002eff,#002cff,#002aff,#0127ff,#0925ff,#1023ff,#1821ff,#1f1eff,#271cff,#2e1aff,#3617ff,#3e15ff,#4613ff,#4d10ff,#550eff,#5d0cff,#6509ff,#6d07ff,#7504ff,#7d02ff,#8600ff,#8e00ff,#9600ff,#9e00ff,#a700ff,#af00ff,#b800ff,#c000ff,#c900ff,#d200ff,#db00ff,#e300ff,#ec00ff,#f500ff,#fe00ff,#ff00f7,#ff00ef,#ff00e7,#ff00e0,#ff00d9,#ff00d2,#ff00cc,#ff00c6,#ff00c0,#ff00bb,#ff00b6)"></div><div style="left:88px;top:288px;width:424px;height:2.5px;background:linear-gradient(90deg,#003eff,#003cff,#003aff,#0038ff,#0036ff,#0033ff,#0031ff,#002fff,#002dff,#002bff,#0029ff,#0126ff,#0824ff,#1022ff,#1720ff,#1f1dff,#261bff,#2e19ff,#3517ff,#3d14ff,#4512ff,#4c10ff,#540dff,#5c0bff,#6409ff,#6c06ff,#7404ff,#7c01ff,#8400ff,#8c00ff,#9400ff,#9d00ff,#a500ff,#ad00ff,#b600ff,#be00ff,#c700ff,#d000ff,#d800ff,#e100ff,#ea00ff,#f300ff,#fc00ff,#ff00fa,#ff00f1,#ff00e9,#ff00e2,#ff00db,#ff00d4,#ff00ce,#ff00c8,#ff00c2,#ff00bd,#ff00b8)"></div><div style="left:88px;top:290px;width:416px;height:2.5px;background:linear-gradient(90deg,#003dff,#003bff,#0039ff,#0037ff,#0035ff,#0032ff,#0030ff,#002eff,#002cff,#002aff,#0028ff,#0025ff,#0823ff,#0f21ff,#161fff,#1e1dff,#251aff,#2d18ff,#3416ff,#3c13ff,#4411ff,#4b0fff,#530dff,#5b0aff,#6308ff,#6b05ff,#7303ff,#7b01ff,#8300ff,#8b00ff,#9300ff,#9b00ff,#a300ff,#ac00ff,#b400ff,#bc00ff,#c500ff,#cd00ff,#d600ff,#df00ff,#e700ff,#f000ff,#f900ff,#ff00fc,#ff00f4,#ff00ec,#ff00e4,#ff00dd,#ff00d6,#ff00d0,#ff00ca,#ff00c4,#ff00bf)"></div><div style="left:96px;top:292px;width:408px;height:2.5px;background:linear-gradient(90deg,#003aff,#0038ff,#0036ff,#0034ff,#0031ff,#002fff,#002dff,#002bff,#0029ff,#0027ff,#0025ff,#0722ff,#0f20ff,#161eff,#1d1cff,#2519ff,#2c17ff,#3415ff,#3b13ff,#4310ff,#4a0eff,#520cff,#5a09ff,#6107ff,#6905ff,#7102ff,#7900ff,#8100ff,#8900ff,#9100ff,#9900ff,#a200ff,#aa00ff,#b200ff,#ba00ff,#c300ff,#cb00ff,#d400ff,#dc00ff,#e500ff,#ee00ff,#f600ff,#ff00ff,#ff00f6,#ff00ee,#ff00e7,#ff00df,#ff00d9,#ff00d2,#ff00cc,#ff00c6,#ff00c1)"></div><div style="left:96px;top:294px;width:408px;height:2.5px;background:linear-gradient(90deg,#0039ff,#0037ff,#0035ff,#0033ff,#0030ff,#002eff,#002cff,#002aff,#0028ff,#0026ff,#0024ff,#0721ff,#0e1fff,#151dff,#1d1bff,#2419ff,#2b16ff,#3314ff,#3a12ff,#4210ff,#490dff,#510bff,#5909ff,#6006ff,#6804ff,#7002ff,#7800ff,#8000ff,#8800ff,#9000ff,#9800ff,#a000ff,#a800ff,#b000ff,#b800ff,#c100ff,#c900ff,#d200ff,#da00ff,#e300ff,#eb00ff,#f400ff,#fd00ff,#ff00f9,#ff00f1,#ff00e9,#ff00e2,#ff00db,#ff00d4,#ff00ce,#ff00c8,#ff00c3)"></div><div style="left:96px;top:296px;width:408px;height:2.5px;background:linear-gradient(90deg,#0038ff,#0036ff,#0034ff,#0032ff,#002fff,#002dff,#002bff,#0029ff,#0027ff,#0025ff,#0023ff,#0621ff,#0d1eff,#151cff,#1c1aff,#2318ff,#2b16ff,#3213ff,#3911ff,#410fff,#480dff,#500aff,#5708ff,#5f06ff,#6703ff,#6f01ff,#7600ff,#7e00ff,#8600ff,#8e00ff,#9600ff,#9e00ff,#a600ff,#ae00ff,#b600ff,#bf00ff,#c700ff,#cf00ff,#d800ff,#e000ff,#e900ff,#f100ff,#fa00ff,#ff00fb,#ff00f3,#ff00eb,#ff00e4,#ff00dd,#ff00d7,#ff00d0,#ff00ca,#ff00c5)"></div><div style="left:96px;top:298px;width:400px;height:2.5px;background:linear-gradient(90deg,#0037ff,#0035ff,#0033ff,#0031ff,#002eff,#002cff,#002aff,#0028ff,#0026ff,#0024ff,#0022ff,#0620ff,#0d1eff,#141bff,#1b19ff,#2317ff,#2a15ff,#3113ff,#3810ff,#400eff,#470cff,#4f09ff,#5607ff,#5e05ff,#6603ff,#6d00ff,#7500ff,#7d00ff,#8500ff,#8c00ff,#9400ff,#9c00ff,#a400ff,#ac00ff,#b500ff,#bd00ff,#c500ff,#cd00ff,#d600ff,#de00ff,#e600ff,#ef00ff,#f800ff,#ff00fe,#ff00f6,#ff00ee,#ff00e6,#ff00df,#ff00d9,#ff00d2,#ff00cc)"></div><div style="left:96px;top:300px;width:400px;height:2.5px;background:linear-gradient(90deg,#0036ff,#0034ff,#0032ff,#0030ff,#002eff,#002bff,#0029ff,#0027ff,#0025ff,#0023ff,#0021ff,#051fff,#0c1dff,#141bff,#1b18ff,#2216ff,#2914ff,#3012ff,#3810ff,#3f0dff,#460bff,#4e09ff,#5506ff,#5d04ff,#6402ff,#6c00ff,#7400ff,#7b00ff,#8300ff,#8b00ff,#9300ff,#9b00ff,#a300ff,#ab00ff,#b300ff,#bb00ff,#c300ff,#cb00ff,#d300ff,#dc00ff,#e400ff,#ed00ff,#f500ff,#fe00ff,#ff00f8,#ff00f0,#ff00e9,#ff00e1,#ff00db,#ff00d4,#ff00ce)"></div><div style="left:96px;top:302px;width:400px;height:2.5px;background:linear-gradient(90deg,#0035ff,#0033ff,#0031ff,#002fff,#002dff,#002bff,#0028ff,#0026ff,#0024ff,#0022ff,#0020ff,#051eff,#0c1cff,#131aff,#1a18ff,#2115ff,#2813ff,#3011ff,#370fff,#3e0dff,#450aff,#4d08ff,#5406ff,#5c04ff,#6301ff,#6b00ff,#7200ff,#7a00ff,#8200ff,#8900ff,#9100ff,#9900ff,#a100ff,#a900ff,#b100ff,#b900ff,#c100ff,#c900ff,#d100ff,#da00ff,#e200ff,#ea00ff,#f300ff,#fb00ff,#ff00fa,#ff00f2,#ff00eb,#ff00e4,#ff00dd,#ff00d7,#ff00d0)"></div><div style="left:96px;top:304px;width:400px;height:2.5px;background:linear-gradient(90deg,#0034ff,#0032ff,#0030ff,#002eff,#002cff,#002aff,#0028ff,#0026ff,#0023ff,#0021ff,#001fff,#041dff,#0b1bff,#1219ff,#1917ff,#2015ff,#2812ff,#2f10ff,#360eff,#3d0cff,#440aff,#4c07ff,#5305ff,#5b03ff,#6201ff,#6900ff,#7100ff,#7900ff,#8000ff,#8800ff,#9000ff,#9700ff,#9f00ff,#a700ff,#af00ff,#b700ff,#bf00ff,#c700ff,#cf00ff,#d700ff,#e000ff,#e800ff,#f000ff,#f900ff,#ff00fd,#ff00f5,#ff00ed,#ff00e6,#ff00df,#ff00d9,#ff00d2)"></div><div style="left:104px;top:306px;width:384px;height:2.5px;background:linear-gradient(90deg,#0031ff,#002fff,#002dff,#002bff,#0029ff,#0027ff,#0025ff,#0023ff,#0020ff,#001eff,#041cff,#0b1aff,#1218ff,#1916ff,#2014ff,#2712ff,#2e0fff,#350dff,#3c0bff,#4409ff,#4b07ff,#5204ff,#5902ff,#6100ff,#6800ff,#7000ff,#7700ff,#7f00ff,#8600ff,#8e00ff,#9600ff,#9e00ff,#a500ff,#ad00ff,#b500ff,#bd00ff,#c500ff,#cd00ff,#d500ff,#dd00ff,#e600ff,#ee00ff,#f600ff,#ff00ff,#ff00f7,#ff00ef,#ff00e8,#ff00e1,#ff00db)"></div><div style="left:104px;top:308px;width:384px;height:2.5px;background:linear-gradient(90deg,#0030ff,#002eff,#002cff,#002aff,#0028ff,#0026ff,#0024ff,#0022ff,#0020ff,#001eff,#041bff,#0a19ff,#1117ff,#1815ff,#1f13ff,#2611ff,#2d0fff,#340dff,#3b0aff,#4308ff,#4a06ff,#5104ff,#5802ff,#6000ff,#6700ff,#6e00ff,#7600ff,#7d00ff,#8500ff,#8d00ff,#9400ff,#9c00ff,#a400ff,#ac00ff,#b300ff,#bb00ff,#c300ff,#cb00ff,#d300ff,#db00ff,#e300ff,#ec00ff,#f400ff,#fc00ff,#ff00fa,#ff00f2,#ff00ea,#ff00e3,#ff00dd)"></div><div style="left:104px;top:310px;width:384px;height:2.5px;background:linear-gradient(90deg,#002fff,#002dff,#002bff,#0029ff,#0027ff,#0025ff,#0023ff,#0021ff,#001fff,#001dff,#031bff,#0a19ff,#1117ff,#1814ff,#1f12ff,#2610ff,#2d0eff,#340cff,#3b0aff,#4207ff,#4905ff,#5003ff,#5701ff,#5f00ff,#6600ff,#6d00ff,#7500ff,#7c00ff,#8400ff,#8b00ff,#9300ff,#9a00ff,#a200ff,#aa00ff,#b200ff,#b900ff,#c100ff,#c900ff,#d100ff,#d900ff,#e100ff,#e900ff,#f200ff,#fa00ff,#ff00fc,#ff00f4,#ff00ed,#ff00e6,#ff00df)"></div><div style="left:104px;top:312px;width:384px;height:2.5px;background:linear-gradient(90deg,#002eff,#002cff,#002aff,#0028ff,#0026ff,#0024ff,#0022ff,#0020ff,#001eff,#001cff,#031aff,#0a18ff,#1016ff,#1714ff,#1e12ff,#250fff,#2c0dff,#330bff,#3a09ff,#4107ff,#4805ff,#4f02ff,#5600ff,#5d00ff,#6500ff,#6c00ff,#7300ff,#7b00ff,#8200ff,#8a00ff,#9100ff,#9900ff,#a000ff,#a800ff,#b000ff,#b800ff,#bf00ff,#c700ff,#cf00ff,#d700ff,#df00ff,#e700ff,#ef00ff,#f700ff,#ff00fe,#ff00f6,#ff00ef,#ff00e8,#ff00e1)"></div><div style="left:104px;top:314px;width:376px;height:2.5px;background:linear-gradient(90deg,#002dff,#002bff,#0029ff,#0027ff,#0025ff,#0023ff,#0021ff,#001fff,#001dff,#001bff,#0219ff,#0917ff,#1015ff,#1713ff,#1d11ff,#240fff,#2b0dff,#320aff,#3908ff,#4006ff,#4704ff,#4e02ff,#5500ff,#5c00ff,#6400ff,#6b00ff,#7200ff,#7900ff,#8100ff,#8800ff,#9000ff,#9700ff,#9f00ff,#a600ff,#ae00ff,#b600ff,#be00ff,#c500ff,#cd00ff,#d500ff,#dd00ff,#e500ff,#ed00ff,#f500ff,#fd00ff,#ff00f9,#ff00f1,#ff00ea)"></div><div style="left:104px;top:316px;width:376px;height:2.5px;background:linear-gradient(90deg,#002cff,#002aff,#0028ff,#0026ff,#0024ff,#0022ff,#0020ff,#001eff,#001cff,#001aff,#0218ff,#0916ff,#0f14ff,#1612ff,#1d10ff,#240eff,#2a0cff,#310aff,#3808ff,#3f05ff,#4603ff,#4d01ff,#5400ff,#5b00ff,#6200ff,#6a00ff,#7100ff,#7800ff,#7f00ff,#8700ff,#8e00ff,#9600ff,#9d00ff,#a500ff,#ac00ff,#b400ff,#bc00ff,#c300ff,#cb00ff,#d300ff,#db00ff,#e300ff,#eb00ff,#f300ff,#fb00ff,#ff00fb,#ff00f3,#ff00ec)"></div><div style="left:104px;top:318px;width:376px;height:2.5px;background:linear-gradient(90deg,#002bff,#0029ff,#0027ff,#0026ff,#0024ff,#0022ff,#0020ff,#001eff,#001cff,#001aff,#0218ff,#0816ff,#0f13ff,#1511ff,#1c0fff,#230dff,#2a0bff,#3009ff,#3707ff,#3e05ff,#4503ff,#4c01ff,#5300ff,#5a00ff,#6100ff,#6800ff,#7000ff,#7700ff,#7e00ff,#8500ff,#8d00ff,#9400ff,#9c00ff,#a300ff,#ab00ff,#b200ff,#ba00ff,#c200ff,#c900ff,#d100ff,#d900ff,#e100ff,#e900ff,#f000ff,#f800ff,#ff00fd,#ff00f6,#ff00ee)"></div><div style="left:112px;top:320px;width:368px;height:2.5px;background:linear-gradient(90deg,#0029ff,#0027ff,#0025ff,#0023ff,#0021ff,#001fff,#001dff,#001bff,#0019ff,#0117ff,#0815ff,#0e13ff,#1511ff,#1c0fff,#220dff,#290bff,#3008ff,#3706ff,#3d04ff,#4402ff,#4b00ff,#5200ff,#5900ff,#6000ff,#6700ff,#6e00ff,#7600ff,#7d00ff,#8400ff,#8b00ff,#9300ff,#9a00ff,#a200ff,#a900ff,#b100ff,#b800ff,#c000ff,#c700ff,#cf00ff,#d700ff,#df00ff,#e600ff,#ee00ff,#f600ff,#fe00ff,#ff00f8,#ff00f1)"></div><div style="left:112px;top:322px;width:360px;height:2.5px;background:linear-gradient(90deg,#0028ff,#0026ff,#0024ff,#0022ff,#0020ff,#001eff,#001cff,#001aff,#0018ff,#0116ff,#0714ff,#0e12ff,#1410ff,#1b0eff,#220cff,#280aff,#2f08ff,#3606ff,#3d04ff,#4301ff,#4a00ff,#5100ff,#5800ff,#5f00ff,#6600ff,#6d00ff,#7400ff,#7c00ff,#8300ff,#8a00ff,#9100ff,#9900ff,#a000ff,#a700ff,#af00ff,#b600ff,#be00ff,#c500ff,#cd00ff,#d500ff,#dc00ff,#e400ff,#ec00ff,#f400ff,#fc00ff,#ff00fa)"></div><div style="left:112px;top:324px;width:360px;height:2.5px;background:linear-gradient(90deg,#0027ff,#0025ff,#0023ff,#0021ff,#001fff,#001dff,#001bff,#0019ff,#0017ff,#0015ff,#0713ff,#0d11ff,#140fff,#1a0dff,#210bff,#2809ff,#2e07ff,#3505ff,#3c03ff,#4301ff,#4900ff,#5000ff,#5700ff,#5e00ff,#6500ff,#6c00ff,#7300ff,#7a00ff,#8100ff,#8900ff,#9000ff,#9700ff,#9e00ff,#a600ff,#ad00ff,#b500ff,#bc00ff,#c400ff,#cb00ff,#d300ff,#da00ff,#e200ff,#ea00ff,#f200ff,#fa00ff,#ff00fd)"></div><div style="left:112px;top:326px;width:360px;height:2.5px;background:linear-gradient(90deg,#0026ff,#0024ff,#0022ff,#0020ff,#001eff,#001cff,#001bff,#0019ff,#0017ff,#0015ff,#0613ff,#0d11ff,#130fff,#1a0dff,#200bff,#2709ff,#2e06ff,#3404ff,#3b02ff,#4200ff,#4900ff,#4f00ff,#5600ff,#5d00ff,#6400ff,#6b00ff,#7200ff,#7900ff,#8000ff,#8700ff,#8e00ff,#9600ff,#9d00ff,#a400ff,#ab00ff,#b300ff,#ba00ff,#c200ff,#c900ff,#d100ff,#d800ff,#e000ff,#e800ff,#ef00ff,#f700ff,#ff00ff)"></div><div style="left:112px;top:328px;width:360px;height:2.5px;background:linear-gradient(90deg,#0025ff,#0023ff,#0021ff,#0020ff,#001eff,#001cff,#001aff,#0018ff,#0016ff,#0014ff,#0612ff,#0c10ff,#130eff,#190cff,#200aff,#2608ff,#2d06ff,#3404ff,#3a02ff,#4100ff,#4800ff,#4e00ff,#5500ff,#5c00ff,#6300ff,#6a00ff,#7100ff,#7800ff,#7f00ff,#8600ff,#8d00ff,#9400ff,#9b00ff,#a300ff,#aa00ff,#b100ff,#b900ff,#c000ff,#c700ff,#cf00ff,#d600ff,#de00ff,#e600ff,#ed00ff,#f500ff,#fd00ff)"></div><div style="left:112px;top:330px;width:352px;height:2.5px;background:linear-gradient(90deg,#0024ff,#0023ff,#0021ff,#001fff,#001dff,#001bff,#0019ff,#0017ff,#0015ff,#0013ff,#0611ff,#0c0fff,#120dff,#190bff,#1f09ff,#2607ff,#2c05ff,#3303ff,#3901ff,#4000ff,#4700ff,#4d00ff,#5400ff,#5b00ff,#6200ff,#6900ff,#7000ff,#7700ff,#7e00ff,#8500ff,#8c00ff,#9300ff,#9a00ff,#a100ff,#a800ff,#b000ff,#b700ff,#be00ff,#c600ff,#cd00ff,#d400ff,#dc00ff,#e400ff,#eb00ff,#f300ff)"></div><div style="left:120px;top:332px;width:344px;height:2.5px;background:linear-gradient(90deg,#0022ff,#0020ff,#001eff,#001cff,#001aff,#0018ff,#0016ff,#0014ff,#0013ff,#0511ff,#0b0fff,#120dff,#180bff,#1f09ff,#2507ff,#2c05ff,#3203ff,#3901ff,#3f00ff,#4600ff,#4d00ff,#5300ff,#5a00ff,#6100ff,#6800ff,#6e00ff,#7500ff,#7c00ff,#8300ff,#8a00ff,#9100ff,#9800ff,#a000ff,#a700ff,#ae00ff,#b500ff,#bc00ff,#c400ff,#cb00ff,#d300ff,#da00ff,#e200ff,#e900ff,#f100ff)"></div><div style="left:120px;top:334px;width:344px;height:2.5px;background:linear-gradient(90deg,#0021ff,#001fff,#001dff,#001bff,#001aff,#0018ff,#0016ff,#0014ff,#0012ff,#0510ff,#0b0eff,#110cff,#180aff,#1e08ff,#2406ff,#2b04ff,#3102ff,#3800ff,#3e00ff,#4500ff,#4c00ff,#5200ff,#5900ff,#6000ff,#6600ff,#6d00ff,#7400ff,#7b00ff,#8200ff,#8900ff,#9000ff,#9700ff,#9e00ff,#a500ff,#ac00ff,#b300ff,#bb00ff,#c200ff,#c900ff,#d100ff,#d800ff,#df00ff,#e700ff,#ef00ff)"></div><div style="left:120px;top:336px;width:344px;height:2.5px;background:linear-gradient(90deg,#0020ff,#001eff,#001dff,#001bff,#0019ff,#0017ff,#0015ff,#0013ff,#0011ff,#040fff,#0b0dff,#110bff,#1709ff,#1d07ff,#2405ff,#2a03ff,#3101ff,#3700ff,#3e00ff,#4400ff,#4b00ff,#5100ff,#5800ff,#5f00ff,#6500ff,#6c00ff,#7300ff,#7a00ff,#8100ff,#8800ff,#8f00ff,#9500ff,#9d00ff,#a400ff,#ab00ff,#b200ff,#b900ff,#c000ff,#c700ff,#cf00ff,#d600ff,#de00ff,#e500ff,#ec00ff)"></div><div style="left:120px;top:338px;width:336px;height:2.5px;background:linear-gradient(90deg,#0020ff,#001eff,#001cff,#001aff,#0018ff,#0016ff,#0014ff,#0012ff,#0011ff,#040fff,#0a0dff,#100bff,#1709ff,#1d07ff,#2305ff,#2a03ff,#3001ff,#3600ff,#3d00ff,#4300ff,#4a00ff,#5000ff,#5700ff,#5e00ff,#6400ff,#6b00ff,#7200ff,#7900ff,#7f00ff,#8600ff,#8d00ff,#9400ff,#9b00ff,#a200ff,#a900ff,#b000ff,#b700ff,#be00ff,#c600ff,#cd00ff,#d400ff,#dc00ff,#e300ff)"></div><div style="left:120px;top:340px;width:336px;height:2.5px;background:linear-gradient(90deg,#001fff,#001dff,#001bff,#0019ff,#0017ff,#0016ff,#0014ff,#0012ff,#0010ff,#040eff,#0a0cff,#100aff,#1608ff,#1c06ff,#2304ff,#2902ff,#2f00ff,#3600ff,#3c00ff,#4300ff,#4900ff,#5000ff,#5600ff,#5d00ff,#6300ff,#6a00ff,#7100ff,#7700ff,#7e00ff,#8500ff,#8c00ff,#9300ff,#9a00ff,#a100ff,#a800ff,#af00ff,#b600ff,#bd00ff,#c400ff,#cb00ff,#d200ff,#da00ff,#e100ff)"></div><div style="left:120px;top:342px;width:336px;height:2.5px;background:linear-gradient(90deg,#001eff,#001cff,#001aff,#0019ff,#0017ff,#0015ff,#0013ff,#0011ff,#000fff,#030dff,#090bff,#0f09ff,#1608ff,#1c06ff,#2204ff,#2802ff,#2f00ff,#3500ff,#3b00ff,#4200ff,#4800ff,#4f00ff,#5500ff,#5c00ff,#6200ff,#6900ff,#7000ff,#7600ff,#7d00ff,#8400ff,#8a00ff,#9100ff,#9800ff,#9f00ff,#a600ff,#ad00ff,#b400ff,#bb00ff,#c200ff,#c900ff,#d000ff,#d800ff,#df00ff)"></div><div style="left:128px;top:344px;width:328px;height:2.5px;background:linear-gradient(90deg,#001cff,#001aff,#0018ff,#0016ff,#0014ff,#0012ff,#0010ff,#000fff,#030dff,#090bff,#0f09ff,#1507ff,#1b05ff,#2103ff,#2801ff,#2e00ff,#3400ff,#3b00ff,#4100ff,#4700ff,#4e00ff,#5400ff,#5b00ff,#6100ff,#6800ff,#6e00ff,#7500ff,#7c00ff,#8200ff,#8900ff,#9000ff,#9700ff,#9e00ff,#a500ff,#ab00ff,#b200ff,#b900ff,#c000ff,#c800ff,#cf00ff,#d600ff,#dd00ff)"></div><div style="left:128px;top:346px;width:328px;height:2.5px;background:linear-gradient(90deg,#001bff,#0019ff,#0017ff,#0015ff,#0014ff,#0012ff,#0010ff,#000eff,#020cff,#080aff,#0f08ff,#1506ff,#1b04ff,#2103ff,#2701ff,#2d00ff,#3400ff,#3a00ff,#4000ff,#4700ff,#4d00ff,#5300ff,#5a00ff,#6000ff,#6700ff,#6d00ff,#7400ff,#7b00ff,#8100ff,#8800ff,#8f00ff,#9500ff,#9c00ff,#a300ff,#aa00ff,#b100ff,#b800ff,#bf00ff,#c600ff,#cd00ff,#d400ff,#db00ff)"></div><div style="left:128px;top:348px;width:320px;height:2.5px;background:linear-gradient(90deg,#001aff,#0018ff,#0017ff,#0015ff,#0013ff,#0011ff,#000fff,#000dff,#020bff,#080aff,#0e08ff,#1406ff,#1a04ff,#2002ff,#2600ff,#2d00ff,#3300ff,#3900ff,#3f00ff,#4600ff,#4c00ff,#5200ff,#5900ff,#5f00ff,#6600ff,#6c00ff,#7300ff,#7900ff,#8000ff,#8700ff,#8d00ff,#9400ff,#9b00ff,#a200ff,#a800ff,#af00ff,#b600ff,#bd00ff,#c400ff,#cb00ff,#d200ff)"></div><div style="left:128px;top:350px;width:320px;height:2.5px;background:linear-gradient(90deg,#0019ff,#0018ff,#0016ff,#0014ff,#0012ff,#0010ff,#000fff,#000dff,#020bff,#0809ff,#0e07ff,#1405ff,#1a03ff,#2001ff,#2600ff,#2c00ff,#3200ff,#3800ff,#3f00ff,#4500ff,#4b00ff,#5200ff,#5800ff,#5e00ff,#6500ff,#6b00ff,#7200ff,#7800ff,#7f00ff,#8500ff,#8c00ff,#9300ff,#9900ff,#a000ff,#a700ff,#ae00ff,#b500ff,#bb00ff,#c200ff,#c900ff,#d000ff)"></div><div style="left:128px;top:352px;width:320px;height:2.5px;background:linear-gradient(90deg,#0019ff,#0017ff,#0015ff,#0013ff,#0012ff,#0010ff,#000eff,#000cff,#010aff,#0708ff,#0d06ff,#1305ff,#1903ff,#1f01ff,#2500ff,#2b00ff,#3200ff,#3800ff,#3e00ff,#4400ff,#4a00ff,#5100ff,#5700ff,#5d00ff,#6400ff,#6a00ff,#7100ff,#7700ff,#7e00ff,#8400ff,#8b00ff,#9100ff,#9800ff,#9f00ff,#a500ff,#ac00ff,#b300ff,#ba00ff,#c100ff,#c800ff,#cf00ff)"></div><div style="left:128px;top:354px;width:320px;height:2.5px;background:linear-gradient(90deg,#0018ff,#0016ff,#0015ff,#0013ff,#0011ff,#000fff,#000dff,#000bff,#010aff,#0708ff,#0d06ff,#1304ff,#1902ff,#1f00ff,#2500ff,#2b00ff,#3100ff,#3700ff,#3d00ff,#4300ff,#4a00ff,#5000ff,#5600ff,#5c00ff,#6300ff,#6900ff,#6f00ff,#7600ff,#7c00ff,#8300ff,#8900ff,#9000ff,#9700ff,#9d00ff,#a400ff,#ab00ff,#b100ff,#b800ff,#bf00ff,#c600ff,#cd00ff)"></div><div style="left:136px;top:356px;width:304px;height:2.5px;background:linear-gradient(90deg,#0016ff,#0014ff,#0012ff,#0010ff,#000fff,#000dff,#000bff,#0109ff,#0607ff,#0c05ff,#1204ff,#1802ff,#1e00ff,#2400ff,#2a00ff,#3000ff,#3600ff,#3c00ff,#4300ff,#4900ff,#4f00ff,#5500ff,#5b00ff,#6200ff,#6800ff,#6e00ff,#7500ff,#7b00ff,#8200ff,#8800ff,#8f00ff,#9500ff,#9c00ff,#a300ff,#a900ff,#b000ff,#b700ff,#bd00ff,#c400ff)"></div><div style="left:136px;top:358px;width:304px;height:2.5px;background:linear-gradient(90deg,#0015ff,#0013ff,#0011ff,#0010ff,#000eff,#000cff,#000aff,#0008ff,#0607ff,#0c05ff,#1203ff,#1801ff,#1e00ff,#2400ff,#2a00ff,#3000ff,#3600ff,#3c00ff,#4200ff,#4800ff,#4e00ff,#5400ff,#5a00ff,#6100ff,#6700ff,#6d00ff,#7400ff,#7a00ff,#8000ff,#8700ff,#8d00ff,#9400ff,#9b00ff,#a100ff,#a800ff,#ae00ff,#b500ff,#bc00ff,#c300ff)"></div><div style="left:136px;top:360px;width:304px;height:2.5px;background:linear-gradient(90deg,#0014ff,#0013ff,#0011ff,#000fff,#000dff,#000cff,#000aff,#0008ff,#0606ff,#0b04ff,#1102ff,#1701ff,#1d00ff,#2300ff,#2900ff,#2f00ff,#3500ff,#3b00ff,#4100ff,#4700ff,#4d00ff,#5300ff,#5a00ff,#6000ff,#6600ff,#6c00ff,#7300ff,#7900ff,#7f00ff,#8600ff,#8c00ff,#9300ff,#9900ff,#a000ff,#a600ff,#ad00ff,#b400ff,#ba00ff,#c100ff)"></div><div style="left:136px;top:362px;width:304px;height:2.5px;background:linear-gradient(90deg,#0014ff,#0012ff,#0010ff,#000eff,#000dff,#000bff,#0009ff,#0007ff,#0506ff,#0b04ff,#1102ff,#1700ff,#1d00ff,#2200ff,#2800ff,#2e00ff,#3400ff,#3a00ff,#4000ff,#4600ff,#4c00ff,#5200ff,#5900ff,#5f00ff,#6500ff,#6b00ff,#7200ff,#7800ff,#7e00ff,#8500ff,#8b00ff,#9100ff,#9800ff,#9e00ff,#a500ff,#ab00ff,#b200ff,#b900ff,#bf00ff)"></div><div style="left:136px;top:364px;width:296px;height:2.5px;background:linear-gradient(90deg,#0013ff,#0011ff,#0010ff,#000eff,#000cff,#000aff,#0009ff,#0007ff,#0505ff,#0b03ff,#1001ff,#1600ff,#1c00ff,#2200ff,#2800ff,#2e00ff,#3400ff,#3a00ff,#3f00ff,#4600ff,#4c00ff,#5200ff,#5800ff,#5e00ff,#6400ff,#6a00ff,#7000ff,#7700ff,#7d00ff,#8300ff,#8a00ff,#9000ff,#9600ff,#9d00ff,#a300ff,#aa00ff,#b100ff,#b700ff)"></div><div style="left:136px;top:366px;width:296px;height:2.5px;background:linear-gradient(90deg,#0013ff,#0011ff,#000fff,#000dff,#000cff,#000aff,#0008ff,#0006ff,#0504ff,#0a03ff,#1001ff,#1600ff,#1c00ff,#2100ff,#2700ff,#2d00ff,#3300ff,#3900ff,#3f00ff,#4500ff,#4b00ff,#5100ff,#5700ff,#5d00ff,#6300ff,#6900ff,#6f00ff,#7600ff,#7c00ff,#8200ff,#8800ff,#8f00ff,#9500ff,#9c00ff,#a200ff,#a900ff,#af00ff,#b600ff)"></div><div style="left:144px;top:368px;width:288px;height:2.5px;background:linear-gradient(90deg,#0010ff,#000eff,#000dff,#000bff,#0009ff,#0007ff,#0006ff,#0404ff,#0a02ff,#1000ff,#1500ff,#1b00ff,#2100ff,#2700ff,#2c00ff,#3200ff,#3800ff,#3e00ff,#4400ff,#4a00ff,#5000ff,#5600ff,#5c00ff,#6200ff,#6800ff,#6e00ff,#7500ff,#7b00ff,#8100ff,#8700ff,#8e00ff,#9400ff,#9a00ff,#a100ff,#a700ff,#ae00ff,#b400ff)"></div><div style="left:144px;top:370px;width:288px;height:2.5px;background:linear-gradient(90deg,#0010ff,#000eff,#000cff,#000aff,#0009ff,#0007ff,#0005ff,#0403ff,#0902ff,#0f00ff,#1500ff,#1b00ff,#2000ff,#2600ff,#2c00ff,#3200ff,#3700ff,#3d00ff,#4300ff,#4900ff,#4f00ff,#5500ff,#5b00ff,#6100ff,#6700ff,#6d00ff,#7300ff,#7a00ff,#8000ff,#8600ff,#8c00ff,#9300ff,#9900ff,#9f00ff,#a600ff,#ac00ff,#b300ff)"></div><div style="left:144px;top:372px;width:280px;height:2.5px;background:linear-gradient(90deg,#000fff,#000dff,#000cff,#000aff,#0008ff,#0006ff,#0005ff,#0403ff,#0901ff,#0f00ff,#1400ff,#1a00ff,#2000ff,#2500ff,#2b00ff,#3100ff,#3700ff,#3d00ff,#4200ff,#4800ff,#4e00ff,#5400ff,#5a00ff,#6000ff,#6600ff,#6c00ff,#7200ff,#7900ff,#7f00ff,#8500ff,#8b00ff,#9100ff,#9800ff,#9e00ff,#a400ff,#ab00ff)"></div><div style="left:144px;top:374px;width:280px;height:2.5px;background:linear-gradient(90deg,#000eff,#000dff,#000bff,#0009ff,#0008ff,#0006ff,#0004ff,#0302ff,#0901ff,#0e00ff,#1400ff,#1a00ff,#1f00ff,#2500ff,#2b00ff,#3000ff,#3600ff,#3c00ff,#4200ff,#4800ff,#4d00ff,#5300ff,#5900ff,#5f00ff,#6500ff,#6b00ff,#7100ff,#7700ff,#7e00ff,#8400ff,#8a00ff,#9000ff,#9600ff,#9d00ff,#a300ff,#a900ff)"></div><div style="left:144px;top:376px;width:280px;height:2.5px;background:linear-gradient(90deg,#000eff,#000cff,#000aff,#0009ff,#0007ff,#0005ff,#0004ff,#0302ff,#0800ff,#0e00ff,#1300ff,#1900ff,#1f00ff,#2400ff,#2a00ff,#3000ff,#3500ff,#3b00ff,#4100ff,#4700ff,#4d00ff,#5300ff,#5800ff,#5e00ff,#6400ff,#6a00ff,#7000ff,#7600ff,#7c00ff,#8300ff,#8900ff,#8f00ff,#9500ff,#9b00ff,#a200ff,#a800ff)"></div><div style="left:152px;top:378px;width:272px;height:2.5px;background:linear-gradient(90deg,#000cff,#000aff,#0008ff,#0007ff,#0005ff,#0003ff,#0201ff,#0800ff,#0d00ff,#1300ff,#1900ff,#1e00ff,#2400ff,#2900ff,#2f00ff,#3500ff,#3b00ff,#4000ff,#4600ff,#4c00ff,#5200ff,#5800ff,#5e00ff,#6300ff,#6900ff,#6f00ff,#7500ff,#7b00ff,#8100ff,#8800ff,#8e00ff,#9400ff,#9a00ff,#a000ff,#a700ff)"></div><div style="left:152px;top:380px;width:264px;height:2.5px;background:linear-gradient(90deg,#000bff,#0009ff,#0008ff,#0006ff,#0004ff,#0003ff,#0201ff,#0800ff,#0d00ff,#1300ff,#1800ff,#1e00ff,#2300ff,#2900ff,#2f00ff,#3400ff,#3a00ff,#4000ff,#4500ff,#4b00ff,#5100ff,#5700ff,#5d00ff,#6200ff,#6800ff,#6e00ff,#7400ff,#7a00ff,#8000ff,#8600ff,#8c00ff,#9300ff,#9900ff,#9f00ff)"></div><div style="left:152px;top:382px;width:264px;height:2.5px;background:linear-gradient(90deg,#000bff,#0009ff,#0007ff,#0005ff,#0004ff,#0002ff,#0200ff,#0700ff,#0d00ff,#1200ff,#1800ff,#1d00ff,#2300ff,#2800ff,#2e00ff,#3400ff,#3900ff,#3f00ff,#4500ff,#4a00ff,#5000ff,#5600ff,#5c00ff,#6200ff,#6700ff,#6d00ff,#7300ff,#7900ff,#7f00ff,#8500ff,#8b00ff,#9100ff,#9700ff,#9e00ff)"></div><div style="left:152px;top:384px;width:264px;height:2.5px;background:linear-gradient(90deg,#000aff,#0008ff,#0007ff,#0005ff,#0003ff,#0002ff,#0100ff,#0700ff,#0c00ff,#1200ff,#1700ff,#1d00ff,#2200ff,#2800ff,#2d00ff,#3300ff,#3900ff,#3e00ff,#4400ff,#4a00ff,#4f00ff,#5500ff,#5b00ff,#6100ff,#6700ff,#6c00ff,#7200ff,#7800ff,#7e00ff,#8400ff,#8a00ff,#9000ff,#9600ff,#9c00ff)"></div><div style="left:152px;top:386px;width:264px;height:2.5px;background:linear-gradient(90deg,#0009ff,#0008ff,#0006ff,#0004ff,#0003ff,#0001ff,#0100ff,#0700ff,#0c00ff,#1100ff,#1700ff,#1c00ff,#2200ff,#2700ff,#2d00ff,#3200ff,#3800ff,#3e00ff,#4300ff,#4900ff,#4f00ff,#5400ff,#5a00ff,#6000ff,#6600ff,#6b00ff,#7100ff,#7700ff,#7d00ff,#8300ff,#8900ff,#8f00ff,#9500ff,#9b00ff)"></div><div style="left:152px;top:388px;width:256px;height:2.5px;background:linear-gradient(90deg,#0009ff,#0007ff,#0006ff,#0004ff,#0002ff,#0001ff,#0100ff,#0600ff,#0c00ff,#1100ff,#1600ff,#1c00ff,#2100ff,#2700ff,#2c00ff,#3200ff,#3700ff,#3d00ff,#4200ff,#4800ff,#4e00ff,#5300ff,#5900ff,#5f00ff,#6500ff,#6a00ff,#7000ff,#7600ff,#7c00ff,#8200ff,#8800ff,#8e00ff,#9400ff)"></div><div style="left:160px;top:390px;width:248px;height:2.5px;background:linear-gradient(90deg,#0007ff,#0005ff,#0003ff,#0002ff,#0000ff,#0100ff,#0600ff,#0b00ff,#1000ff,#1600ff,#1b00ff,#2100ff,#2600ff,#2c00ff,#3100ff,#3700ff,#3c00ff,#4200ff,#4700ff,#4d00ff,#5300ff,#5800ff,#5e00ff,#6400ff,#6a00ff,#6f00ff,#7500ff,#7b00ff,#8100ff,#8700ff,#8d00ff,#9300ff)"></div><div style="left:160px;top:392px;width:248px;height:2.5px;background:linear-gradient(90deg,#0006ff,#0005ff,#0003ff,#0001ff,#0000ff,#0000ff,#0500ff,#0b00ff,#1000ff,#1500ff,#1b00ff,#2000ff,#2600ff,#2b00ff,#3100ff,#3600ff,#3c00ff,#4100ff,#4700ff,#4c00ff,#5200ff,#5700ff,#5d00ff,#6300ff,#6900ff,#6e00ff,#7400ff,#7a00ff,#8000ff,#8600ff,#8b00ff,#9100ff)"></div><div style="left:160px;top:394px;width:248px;height:2.5px;background:linear-gradient(90deg,#0006ff,#0004ff,#0002ff,#0001ff,#0000ff,#0000ff,#0500ff,#0a00ff,#1000ff,#1500ff,#1a00ff,#2000ff,#2500ff,#2a00ff,#3000ff,#3500ff,#3b00ff,#4000ff,#4600ff,#4b00ff,#5100ff,#5700ff,#5c00ff,#6200ff,#6800ff,#6d00ff,#7300ff,#7900ff,#7f00ff,#8500ff,#8a00ff,#9000ff)"></div><div style="left:160px;top:396px;width:240px;height:2.5px;background:linear-gradient(90deg,#0005ff,#0004ff,#0002ff,#0000ff,#0000ff,#0000ff,#0500ff,#0a00ff,#0f00ff,#1500ff,#1a00ff,#1f00ff,#2500ff,#2a00ff,#2f00ff,#3500ff,#3a00ff,#4000ff,#4500ff,#4b00ff,#5000ff,#5600ff,#5b00ff,#6100ff,#6700ff,#6c00ff,#7200ff,#7800ff,#7e00ff,#8300ff,#8900ff)"></div><div style="left:160px;top:398px;width:240px;height:2.5px;background:linear-gradient(90deg,#0005ff,#0003ff,#0002ff,#0000ff,#0000ff,#0000ff,#0400ff,#0a00ff,#0f00ff,#1400ff,#1900ff,#1f00ff,#2400ff,#2900ff,#2f00ff,#3400ff,#3a00ff,#3f00ff,#4500ff,#4a00ff,#5000ff,#5500ff,#5b00ff,#6000ff,#6600ff,#6b00ff,#7100ff,#7700ff,#7d00ff,#8200ff,#8800ff)"></div><div style="left:168px;top:400px;width:232px;height:2.5px;background:linear-gradient(90deg,#0003ff,#0001ff,#0000ff,#0000ff,#0000ff,#0400ff,#0900ff,#0e00ff,#1400ff,#1900ff,#1e00ff,#2400ff,#2900ff,#2e00ff,#3400ff,#3900ff,#3e00ff,#4400ff,#4900ff,#4f00ff,#5400ff,#5a00ff,#5f00ff,#6500ff,#6b00ff,#7000ff,#7600ff,#7c00ff,#8100ff,#8700ff)"></div><div style="left:168px;top:402px;width:232px;height:2.5px;background:linear-gradient(90deg,#0002ff,#0001ff,#0000ff,#0000ff,#0000ff,#0400ff,#0900ff,#0e00ff,#1300ff,#1900ff,#1e00ff,#2300ff,#2800ff,#2e00ff,#3300ff,#3800ff,#3e00ff,#4300ff,#4900ff,#4e00ff,#5300ff,#5900ff,#5f00ff,#6400ff,#6a00ff,#6f00ff,#7500ff,#7b00ff,#8000ff,#8600ff)"></div><div style="left:168px;top:404px;width:224px;height:2.5px;background:linear-gradient(90deg,#0002ff,#0000ff,#0000ff,#0000ff,#0000ff,#0300ff,#0900ff,#0e00ff,#1300ff,#1800ff,#1d00ff,#2300ff,#2800ff,#2d00ff,#3200ff,#3800ff,#3d00ff,#4200ff,#4800ff,#4d00ff,#5300ff,#5800ff,#5e00ff,#6300ff,#6900ff,#6e00ff,#7400ff,#7a00ff,#7f00ff)"></div><div style="left:168px;top:406px;width:224px;height:2.5px;background:linear-gradient(90deg,#0001ff,#0000ff,#0000ff,#0000ff,#0000ff,#0300ff,#0800ff,#0d00ff,#1200ff,#1800ff,#1d00ff,#2200ff,#2700ff,#2d00ff,#3200ff,#3700ff,#3c00ff,#4200ff,#4700ff,#4d00ff,#5200ff,#5700ff,#5d00ff,#6200ff,#6800ff,#6d00ff,#7300ff,#7900ff,#7e00ff)"></div><div style="left:168px;top:408px;width:224px;height:2.5px;background:linear-gradient(90deg,#0001ff,#0000ff,#0000ff,#0000ff,#0000ff,#0300ff,#0800ff,#0d00ff,#1200ff,#1700ff,#1c00ff,#2200ff,#2700ff,#2c00ff,#3100ff,#3600ff,#3c00ff,#4100ff,#4600ff,#4c00ff,#5100ff,#5700ff,#5c00ff,#6100ff,#6700ff,#6c00ff,#7200ff,#7800ff,#7d00ff)"></div><div style="left:176px;top:410px;width:216px;height:2.5px;background:linear-gradient(90deg,#0000ff,#0000ff,#0000ff,#0000ff,#0300ff,#0800ff,#0d00ff,#1200ff,#1700ff,#1c00ff,#2100ff,#2600ff,#2b00ff,#3100ff,#3600ff,#3b00ff,#4000ff,#4600ff,#4b00ff,#5000ff,#5600ff,#5b00ff,#6100ff,#6600ff,#6c00ff,#7100ff,#7700ff,#7c00ff)"></div><div style="left:176px;top:412px;width:216px;height:2.5px;background:linear-gradient(90deg,#0000ff,#0000ff,#0000ff,#0000ff,#0200ff,#0700ff,#0c00ff,#1100ff,#1600ff,#1b00ff,#2100ff,#2600ff,#2b00ff,#3000ff,#3500ff,#3b00ff,#4000ff,#4500ff,#4a00ff,#5000ff,#5500ff,#5a00ff,#6000ff,#6500ff,#6b00ff,#7000ff,#7600ff,#7b00ff)"></div><div style="left:176px;top:414px;width:208px;height:2.5px;background:linear-gradient(90deg,#0000ff,#0000ff,#0000ff,#0000ff,#0200ff,#0700ff,#0c00ff,#1100ff,#1600ff,#1b00ff,#2000ff,#2500ff,#2a00ff,#3000ff,#3500ff,#3a00ff,#3f00ff,#4400ff,#4a00ff,#4f00ff,#5400ff,#5a00ff,#5f00ff,#6400ff,#6a00ff,#6f00ff,#7500ff)"></div><div style="left:176px;top:416px;width:208px;height:2.5px;background:linear-gradient(90deg,#0000ff,#0000ff,#0000ff,#0000ff,#0200ff,#0700ff,#0c00ff,#1100ff,#1600ff,#1b00ff,#2000ff,#2500ff,#2a00ff,#2f00ff,#3400ff,#3900ff,#3f00ff,#4400ff,#4900ff,#4e00ff,#5400ff,#5900ff,#5e00ff,#6400ff,#6900ff,#6e00ff,#7400ff)"></div><div style="left:176px;top:418px;width:208px;height:2.5px;background:linear-gradient(90deg,#0000ff,#0000ff,#0000ff,#0000ff,#0100ff,#0600ff,#0b00ff,#1000ff,#1500ff,#1a00ff,#1f00ff,#2400ff,#2900ff,#2e00ff,#3400ff,#3900ff,#3e00ff,#4300ff,#4800ff,#4e00ff,#5300ff,#5800ff,#5d00ff,#6300ff,#6800ff,#6d00ff,#7300ff)"></div><div style="left:184px;top:420px;width:200px;height:2.5px;background:linear-gradient(90deg,#0000ff,#0000ff,#0000ff,#0100ff,#0600ff,#0b00ff,#1000ff,#1500ff,#1a00ff,#1f00ff,#2400ff,#2900ff,#2e00ff,#3300ff,#3800ff,#3d00ff,#4200ff,#4800ff,#4d00ff,#5200ff,#5700ff,#5d00ff,#6200ff,#6700ff,#6d00ff,#7200ff)"></div><div style="left:184px;top:422px;width:192px;height:2.5px;background:linear-gradient(90deg,#0000ff,#0000ff,#0000ff,#0100ff,#0600ff,#0a00ff,#0f00ff,#1400ff,#1900ff,#1e00ff,#2300ff,#2800ff,#2d00ff,#3200ff,#3800ff,#3d00ff,#4200ff,#4700ff,#4c00ff,#5100ff,#5700ff,#5c00ff,#6100ff,#6600ff,#6c00ff)"></div><div style="left:184px;top:424px;width:192px;height:2.5px;background:linear-gradient(90deg,#0000ff,#0000ff,#0000ff,#0000ff,#0500ff,#0a00ff,#0f00ff,#1400ff,#1900ff,#1e00ff,#2300ff,#2800ff,#2d00ff,#3200ff,#3700ff,#3c00ff,#4100ff,#4600ff,#4b00ff,#5100ff,#5600ff,#5b00ff,#6000ff,#6500ff,#6b00ff)"></div><div style="left:184px;top:426px;width:192px;height:2.5px;background:linear-gradient(90deg,#0000ff,#0000ff,#0000ff,#0000ff,#0500ff,#0a00ff,#0f00ff,#1400ff,#1800ff,#1d00ff,#2200ff,#2700ff,#2c00ff,#3100ff,#3600ff,#3b00ff,#4100ff,#4600ff,#4b00ff,#5000ff,#5500ff,#5a00ff,#5f00ff,#6500ff,#6a00ff)"></div><div style="left:192px;top:428px;width:184px;height:2.5px;background:linear-gradient(90deg,#0000ff,#0000ff,#0000ff,#0500ff,#0900ff,#0e00ff,#1300ff,#1800ff,#1d00ff,#2200ff,#2700ff,#2c00ff,#3100ff,#3600ff,#3b00ff,#4000ff,#4500ff,#4a00ff,#4f00ff,#5400ff,#5900ff,#5f00ff,#6400ff,#6900ff)"></div><div style="left:192px;top:430px;width:176px;height:2.5px;background:linear-gradient(90deg,#0000ff,#0000ff,#0000ff,#0400ff,#0900ff,#0e00ff,#1300ff,#1800ff,#1d00ff,#2100ff,#2600ff,#2b00ff,#3000ff,#3500ff,#3a00ff,#3f00ff,#4400ff,#4900ff,#4e00ff,#5400ff,#5900ff,#5e00ff,#6300ff)"></div><div style="left:192px;top:432px;width:176px;height:2.5px;background:linear-gradient(90deg,#0000ff,#0000ff,#0000ff,#0400ff,#0900ff,#0e00ff,#1200ff,#1700ff,#1c00ff,#2100ff,#2600ff,#2b00ff,#3000ff,#3500ff,#3a00ff,#3f00ff,#4400ff,#4900ff,#4e00ff,#5300ff,#5800ff,#5d00ff,#6200ff)"></div><div style="left:192px;top:434px;width:176px;height:2.5px;background:linear-gradient(90deg,#0000ff,#0000ff,#0000ff,#0400ff,#0800ff,#0d00ff,#1200ff,#1700ff,#1c00ff,#2100ff,#2500ff,#2a00ff,#2f00ff,#3400ff,#3900ff,#3e00ff,#4300ff,#4800ff,#4d00ff,#5200ff,#5700ff,#5c00ff,#6100ff)"></div><div style="left:200px;top:436px;width:168px;height:2.5px;background:linear-gradient(90deg,#0000ff,#0000ff,#0300ff,#0800ff,#0d00ff,#1200ff,#1600ff,#1b00ff,#2000ff,#2500ff,#2a00ff,#2f00ff,#3400ff,#3800ff,#3d00ff,#4200ff,#4700ff,#4c00ff,#5100ff,#5600ff,#5c00ff,#6100ff)"></div><div style="left:200px;top:438px;width:160px;height:2.5px;background:linear-gradient(90deg,#0000ff,#0000ff,#0300ff,#0800ff,#0d00ff,#1100ff,#1600ff,#1b00ff,#2000ff,#2400ff,#2900ff,#2e00ff,#3300ff,#3800ff,#3d00ff,#4200ff,#4700ff,#4c00ff,#5100ff,#5600ff,#5b00ff)"></div><div style="left:200px;top:440px;width:160px;height:2.5px;background:linear-gradient(90deg,#0000ff,#0000ff,#0300ff,#0800ff,#0c00ff,#1100ff,#1600ff,#1a00ff,#1f00ff,#2400ff,#2900ff,#2e00ff,#3200ff,#3700ff,#3c00ff,#4100ff,#4600ff,#4b00ff,#5000ff,#5500ff,#5a00ff)"></div><div style="left:200px;top:442px;width:160px;height:2.5px;background:linear-gradient(90deg,#0000ff,#0000ff,#0300ff,#0700ff,#0c00ff,#1100ff,#1500ff,#1a00ff,#1f00ff,#2400ff,#2800ff,#2d00ff,#3200ff,#3700ff,#3c00ff,#4100ff,#4500ff,#4a00ff,#4f00ff,#5400ff,#5900ff)"></div><div style="left:208px;top:444px;width:152px;height:2.5px;background:linear-gradient(90deg,#0000ff,#0200ff,#0700ff,#0c00ff,#1000ff,#1500ff,#1a00ff,#1e00ff,#2300ff,#2800ff,#2d00ff,#3100ff,#3600ff,#3b00ff,#4000ff,#4500ff,#4a00ff,#4f00ff,#5400ff,#5900ff)"></div><div style="left:208px;top:446px;width:144px;height:2.5px;background:linear-gradient(90deg,#0000ff,#0200ff,#0700ff,#0b00ff,#1000ff,#1500ff,#1900ff,#1e00ff,#2300ff,#2700ff,#2c00ff,#3100ff,#3600ff,#3b00ff,#3f00ff,#4400ff,#4900ff,#4e00ff,#5300ff)"></div><div style="left:208px;top:448px;width:144px;height:2.5px;background:linear-gradient(90deg,#0000ff,#0200ff,#0600ff,#0b00ff,#1000ff,#1400ff,#1900ff,#1d00ff,#2200ff,#2700ff,#2c00ff,#3000ff,#3500ff,#3a00ff,#3f00ff,#4400ff,#4800ff,#4d00ff,#5200ff)"></div><div style="left:208px;top:450px;width:144px;height:2.5px;background:linear-gradient(90deg,#0000ff,#0100ff,#0600ff,#0b00ff,#0f00ff,#1400ff,#1800ff,#1d00ff,#2200ff,#2600ff,#2b00ff,#3000ff,#3500ff,#3900ff,#3e00ff,#4300ff,#4800ff,#4d00ff,#5200ff)"></div><div style="left:216px;top:452px;width:136px;height:2.5px;background:linear-gradient(90deg,#0100ff,#0600ff,#0a00ff,#0f00ff,#1300ff,#1800ff,#1d00ff,#2100ff,#2600ff,#2b00ff,#2f00ff,#3400ff,#3900ff,#3e00ff,#4200ff,#4700ff,#4c00ff,#5100ff)"></div><div style="left:216px;top:454px;width:128px;height:2.5px;background:linear-gradient(90deg,#0100ff,#0500ff,#0a00ff,#0e00ff,#1300ff,#1800ff,#1c00ff,#2100ff,#2600ff,#2a00ff,#2f00ff,#3400ff,#3800ff,#3d00ff,#4200ff,#4700ff,#4b00ff)"></div><div style="left:216px;top:456px;width:128px;height:2.5px;background:linear-gradient(90deg,#0100ff,#0500ff,#0a00ff,#0e00ff,#1300ff,#1700ff,#1c00ff,#2000ff,#2500ff,#2a00ff,#2e00ff,#3300ff,#3800ff,#3c00ff,#4100ff,#4600ff,#4b00ff)"></div><div style="left:216px;top:458px;width:128px;height:2.5px;background:linear-gradient(90deg,#0000ff,#0500ff,#0900ff,#0e00ff,#1200ff,#1700ff,#1b00ff,#2000ff,#2500ff,#2900ff,#2e00ff,#3300ff,#3700ff,#3c00ff,#4100ff,#4500ff,#4a00ff)"></div><div style="left:224px;top:460px;width:120px;height:2.5px;background:linear-gradient(90deg,#0500ff,#0900ff,#0d00ff,#1200ff,#1700ff,#1b00ff,#2000ff,#2400ff,#2900ff,#2d00ff,#3200ff,#3700ff,#3b00ff,#4000ff,#4500ff,#4900ff)"></div><div style="left:224px;top:462px;width:112px;height:2.5px;background:linear-gradient(90deg,#0400ff,#0900ff,#0d00ff,#1200ff,#1600ff,#1b00ff,#1f00ff,#2400ff,#2800ff,#2d00ff,#3200ff,#3600ff,#3b00ff,#3f00ff,#4400ff)"></div><div style="left:224px;top:464px;width:112px;height:2.5px;background:linear-gradient(90deg,#0400ff,#0800ff,#0d00ff,#1100ff,#1600ff,#1a00ff,#1f00ff,#2300ff,#2800ff,#2c00ff,#3100ff,#3600ff,#3a00ff,#3f00ff,#4400ff)"></div><div style="left:232px;top:466px;width:104px;height:2.5px;background:linear-gradient(90deg,#0800ff,#0d00ff,#1100ff,#1500ff,#1a00ff,#1e00ff,#2300ff,#2700ff,#2c00ff,#3100ff,#3500ff,#3a00ff,#3e00ff,#4300ff)"></div><div style="left:232px;top:468px;width:104px;height:2.5px;background:linear-gradient(90deg,#0800ff,#0c00ff,#1100ff,#1500ff,#1a00ff,#1e00ff,#2200ff,#2700ff,#2b00ff,#3000ff,#3500ff,#3900ff,#3e00ff,#4200ff)"></div><div style="left:232px;top:470px;width:96px;height:2.5px;background:linear-gradient(90deg,#0700ff,#0c00ff,#1000ff,#1500ff,#1900ff,#1e00ff,#2200ff,#2700ff,#2b00ff,#3000ff,#3400ff,#3900ff,#3d00ff)"></div><div style="left:232px;top:472px;width:96px;height:2.5px;background:linear-gradient(90deg,#0700ff,#0c00ff,#1000ff,#1400ff,#1900ff,#1d00ff,#2200ff,#2600ff,#2b00ff,#2f00ff,#3400ff,#3800ff,#3d00ff)"></div><div style="left:240px;top:474px;width:88px;height:2.5px;background:linear-gradient(90deg,#0b00ff,#1000ff,#1400ff,#1800ff,#1d00ff,#2100ff,#2600ff,#2a00ff,#2f00ff,#3300ff,#3800ff,#3c00ff)"></div><div style="left:240px;top:476px;width:88px;height:2.5px;background:linear-gradient(90deg,#0b00ff,#0f00ff,#1400ff,#1800ff,#1c00ff,#2100ff,#2500ff,#2a00ff,#2e00ff,#3300ff,#3700ff,#3c00ff)"></div><div style="left:240px;top:478px;width:80px;height:2.5px;background:linear-gradient(90deg,#0b00ff,#0f00ff,#1300ff,#1800ff,#1c00ff,#2000ff,#2500ff,#2900ff,#2e00ff,#3200ff,#3700ff)"></div><div style="left:248px;top:480px;width:72px;height:2.5px;background:linear-gradient(90deg,#0f00ff,#1300ff,#1700ff,#1c00ff,#2000ff,#2400ff,#2900ff,#2d00ff,#3200ff,#3600ff)"></div><div style="left:248px;top:482px;width:72px;height:2.5px;background:linear-gradient(90deg,#0e00ff,#1300ff,#1700ff,#1b00ff,#2000ff,#2400ff,#2800ff,#2d00ff,#3100ff,#3600ff)"></div><div style="left:248px;top:484px;width:72px;height:2.5px;background:linear-gradient(90deg,#0e00ff,#1200ff,#1700ff,#1b00ff,#1f00ff,#2400ff,#2800ff,#2c00ff,#3100ff,#3500ff)"></div><div style="left:256px;top:486px;width:64px;height:2.5px;background:linear-gradient(90deg,#1200ff,#1600ff,#1b00ff,#1f00ff,#2300ff,#2700ff,#2c00ff,#3000ff,#3500ff)"></div><div style="left:256px;top:488px;width:56px;height:2.5px;background:linear-gradient(90deg,#1200ff,#1600ff,#1a00ff,#1e00ff,#2300ff,#2700ff,#2b00ff,#3000ff)"></div><div style="left:256px;top:490px;width:56px;height:2.5px;background:linear-gradient(90deg,#1100ff,#1600ff,#1a00ff,#1e00ff,#2200ff,#2700ff,#2b00ff,#2f00ff)"></div><div style="left:264px;top:492px;width:48px;height:2.5px;background:linear-gradient(90deg,#1500ff,#1900ff,#1e00ff,#2200ff,#2600ff,#2a00ff,#2f00ff)"></div><div style="left:264px;top:494px;width:48px;height:2.5px;background:linear-gradient(90deg,#1500ff,#1900ff,#1d00ff,#2200ff,#2600ff,#2a00ff,#2e00ff)"></div><div style="left:264px;top:496px;width:40px;height:2.5px;background:linear-gradient(90deg,#1500ff,#1900ff,#1d00ff,#2100ff,#2500ff,#2a00ff)"></div><div style="left:264px;top:498px;width:40px;height:2.5px;background:linear-gradient(90deg,#1400ff,#1800ff,#1d00ff,#2100ff,#2500ff,#2900ff)"></div><div style="left:272px;top:500px;width:32px;height:2.5px;background:linear-gradient(90deg,#1800ff,#1c00ff,#2000ff,#2500ff,#2900ff)"></div><div style="left:272px;top:502px;width:32px;height:2.5px;background:linear-gradient(90deg,#1800ff,#1c00ff,#2000ff,#2400ff,#2800ff)"></div><div style="left:272px;top:504px;width:24px;height:2.5px;background:linear-gradient(90deg,#1700ff,#1b00ff,#2000ff,#2400ff)"></div><div style="left:280px;top:506px;width:16px;height:2.5px;background:linear-gradient(90deg,#1b00ff,#1f00ff,#2300ff)"></div><div style="left:280px;top:508px;width:16px;height:2.5px;background:linear-gradient(90deg,#1b00ff,#1f00ff,#2300ff)"></div></div></div>
<svg style="left:1230.0px;top:152.0px;overflow:hidden" width="678.9" height="522.6" viewBox="1230.0 152.0 678.9 522.6"><path d="M1520.0 661.0L1519.9 661.0L1519.9 660.9L1519.8 661.0L1519.7 661.1L1519.5 661.1L1519.3 661.1L1519.1 661.0L1519.0 661.2L1518.9 661.3L1518.8 661.5L1518.6 661.5L1518.4 661.5L1518.0 661.5L1517.7 661.5L1517.4 661.5L1517.0 661.5L1516.6 661.4L1516.2 661.3L1515.6 661.1L1514.8 660.6L1513.7 660.0L1512.5 659.2L1511.2 658.2L1509.6 657.0L1507.9 655.6L1505.8 654.0L1503.5 652.2L1500.9 650.0L1498.1 647.6L1495.1 645.0L1491.7 642.1L1487.9 639.0L1483.7 635.6L1479.1 631.7L1474.0 627.5L1468.5 623.0L1462.6 618.1L1456.2 612.6L1449.3 606.4L1441.9 599.6L1434.0 591.9L1425.4 583.1L1415.8 572.4L1404.8 559.3L1392.7 544.0L1379.8 526.9L1366.4 507.8L1352.3 486.8L1337.9 463.9L1323.4 439.8L1309.1 415.1L1295.3 389.9L1282.6 364.9L1271.5 340.6L1261.7 317.4L1253.2 295.7L1246.2 275.9L1240.7 258.3L1236.6 242.8L1233.8 229.2L1232.1 217.5L1231.5 207.5L1231.8 198.9L1233.0 191.4L1235.1 185.1L1238.1 179.8L1241.7 175.5L1246.0 172.1L1250.8 169.6L1256.0 167.9L1261.6 166.7L1267.5 166.0L1273.7 165.5L1280.0 165.3L1286.5 165.2L1292.9 165.2L1299.3 165.3L1305.8 165.5L1312.5 165.8L1319.4 166.2L1326.5 166.6L1333.8 167.2L1341.3 167.8L1349.1 168.5L1357.2 169.2L1365.6 170.1L1374.4 171.0L1383.5 171.9L1393.0 172.9L1402.8 174.0L1413.1 175.2L1423.8 176.4L1435.0 177.6L1446.6 178.9L1458.7 180.3L1471.3 181.7L1484.3 183.2L1497.8 184.8L1511.8 186.4L1526.2 188.1L1541.1 189.8L1556.4 191.5L1572.0 193.3L1588.0 195.2L1604.3 197.0L1620.8 198.9L1637.4 200.8L1653.8 202.7L1669.8 204.6L1685.7 206.4L1701.5 208.2L1717.0 210.0L1732.0 211.7L1746.2 213.3L1759.8 214.9L1772.8 216.4L1785.0 217.8L1796.6 219.1L1807.4 220.4L1817.5 221.5L1826.9 222.6L1835.6 223.6L1843.7 224.6L1851.3 225.4L1858.5 226.2L1865.2 227.0L1871.7 227.8L1877.6 228.5L1883.2 229.1L1888.4 229.7L1893.2 230.3L1897.6 230.8L1901.6 231.2L1905.0 231.6L1908.1 232.0L1911.0 232.3L1913.6 232.6L1915.9 232.9L1918.0 233.1L1919.8 233.3L1921.3 233.5L1922.6 233.6L1923.7 233.8L1924.8 233.9L1925.8 234.0L1926.8 234.1L1927.6 234.2L1928.4 234.3L1929.3 234.4L1930.1 234.5L1930.9 234.6L1931.7 234.7L1932.3 234.8L1932.8 234.8L1933.1 234.8L1933.4 234.9L1933.6 234.9L1933.8 234.9L1933.9 234.9L1934.0 235.0ZM1790.5 218.4L1341.3 173.1L1428.1 538.0Z" fill="#000" fill-opacity=".4" fill-rule="evenodd"/></svg>
<svg style="left:0;top:0" width="1920" height="720" viewBox="0 0 1920 720"><rect x="1230.0" y="152.0" width="678.9" height="522.6" fill="none" stroke="#aaa" stroke-width="1.4"/><path d="M1229.9 674.6v6.5" stroke="#c0c0c0" stroke-width="1.3"/><path d="M1230.0 675.3h-6" stroke="#c0c0c0" stroke-width="1.3"/><path d="M1286.4 674.6v6.5" stroke="#c0c0c0" stroke-width="1.3"/><path d="M1230.0 631.8h-6" stroke="#c0c0c0" stroke-width="1.3"/><path d="M1342.9 674.6v6.5" stroke="#c0c0c0" stroke-width="1.3"/><path d="M1230.0 588.4h-6" stroke="#c0c0c0" stroke-width="1.3"/><path d="M1399.3 674.6v6.5" stroke="#c0c0c0" stroke-width="1.3"/><path d="M1230.0 544.9h-6" stroke="#c0c0c0" stroke-width="1.3"/><path d="M1455.8 674.6v6.5" stroke="#c0c0c0" stroke-width="1.3"/><path d="M1230.0 501.4h-6" stroke="#c0c0c0" stroke-width="1.3"/><path d="M1512.3 674.6v6.5" stroke="#c0c0c0" stroke-width="1.3"/><path d="M1230.0 457.9h-6" stroke="#c0c0c0" stroke-width="1.3"/><path d="M1568.8 674.6v6.5" stroke="#c0c0c0" stroke-width="1.3"/><path d="M1230.0 414.5h-6" stroke="#c0c0c0" stroke-width="1.3"/><path d="M1625.2 674.6v6.5" stroke="#c0c0c0" stroke-width="1.3"/><path d="M1230.0 371.0h-6" stroke="#c0c0c0" stroke-width="1.3"/><path d="M1681.7 674.6v6.5" stroke="#c0c0c0" stroke-width="1.3"/><path d="M1230.0 327.5h-6" stroke="#c0c0c0" stroke-width="1.3"/><path d="M1738.2 674.6v6.5" stroke="#c0c0c0" stroke-width="1.3"/><path d="M1230.0 284.1h-6" stroke="#c0c0c0" stroke-width="1.3"/><path d="M1794.7 674.6v6.5" stroke="#c0c0c0" stroke-width="1.3"/><path d="M1230.0 240.6h-6" stroke="#c0c0c0" stroke-width="1.3"/><path d="M1851.1 674.6v6.5" stroke="#c0c0c0" stroke-width="1.3"/><path d="M1230.0 197.1h-6" stroke="#c0c0c0" stroke-width="1.3"/></svg>
<span style="left:1225.39px;top:683px;font-size:16.23px;line-height:18px;color:#d8d8d8;-webkit-text-stroke-width:0.21px;">0</span>
<span style="left:1213.97px;top:667px;font-size:16.23px;line-height:18px;color:#d8d8d8;-webkit-text-stroke-width:0.21px;">0</span>
<span style="left:1270.58px;top:683px;font-size:16.23px;line-height:18px;color:#d8d8d8;-webkit-text-stroke-width:0.21px;">0.05</span>
<span style="left:1191.41px;top:622px;font-size:16.23px;line-height:18px;color:#d8d8d8;-webkit-text-stroke-width:0.21px;">0.05</span>
<span style="left:1331.57px;top:683px;font-size:16.23px;line-height:18px;color:#d8d8d8;-webkit-text-stroke-width:0.21px;">0.1</span>
<span style="left:1200.44px;top:579px;font-size:16.23px;line-height:18px;color:#d8d8d8;-webkit-text-stroke-width:0.21px;">0.1</span>
<span style="left:1383.53px;top:683px;font-size:16.23px;line-height:18px;color:#d8d8d8;-webkit-text-stroke-width:0.21px;">0.15</span>
<span style="left:1191.41px;top:535px;font-size:16.23px;line-height:18px;color:#d8d8d8;-webkit-text-stroke-width:0.21px;">0.15</span>
<span style="left:1444.52px;top:683px;font-size:16.23px;line-height:18px;color:#d8d8d8;-webkit-text-stroke-width:0.21px;">0.2</span>
<span style="left:1200.44px;top:492px;font-size:16.23px;line-height:18px;color:#d8d8d8;-webkit-text-stroke-width:0.21px;">0.2</span>
<span style="left:1496.48px;top:683px;font-size:16.23px;line-height:18px;color:#d8d8d8;-webkit-text-stroke-width:0.21px;">0.25</span>
<span style="left:1191.41px;top:449px;font-size:16.23px;line-height:18px;color:#d8d8d8;-webkit-text-stroke-width:0.21px;">0.25</span>
<span style="left:1557.47px;top:683px;font-size:16.23px;line-height:18px;color:#d8d8d8;-webkit-text-stroke-width:0.21px;">0.3</span>
<span style="left:1200.44px;top:405px;font-size:16.23px;line-height:18px;color:#d8d8d8;-webkit-text-stroke-width:0.21px;">0.3</span>
<span style="left:1609.43px;top:683px;font-size:16.23px;line-height:18px;color:#d8d8d8;-webkit-text-stroke-width:0.21px;">0.35</span>
<span style="left:1191.41px;top:362px;font-size:16.23px;line-height:18px;color:#d8d8d8;-webkit-text-stroke-width:0.21px;">0.35</span>
<span style="left:1670.42px;top:683px;font-size:16.23px;line-height:18px;color:#d8d8d8;-webkit-text-stroke-width:0.21px;">0.4</span>
<span style="left:1200.44px;top:318px;font-size:16.23px;line-height:18px;color:#d8d8d8;-webkit-text-stroke-width:0.21px;">0.4</span>
<span style="left:1722.38px;top:683px;font-size:16.23px;line-height:18px;color:#d8d8d8;-webkit-text-stroke-width:0.21px;">0.45</span>
<span style="left:1191.41px;top:275px;font-size:16.23px;line-height:18px;color:#d8d8d8;-webkit-text-stroke-width:0.21px;">0.45</span>
<span style="left:1783.37px;top:683px;font-size:16.23px;line-height:18px;color:#d8d8d8;-webkit-text-stroke-width:0.21px;">0.5</span>
<span style="left:1200.44px;top:231px;font-size:16.23px;line-height:18px;color:#d8d8d8;-webkit-text-stroke-width:0.21px;">0.5</span>
<span style="left:1835.33px;top:683px;font-size:16.23px;line-height:18px;color:#d8d8d8;-webkit-text-stroke-width:0.21px;">0.55</span>
<span style="left:1191.41px;top:188px;font-size:16.23px;line-height:18px;color:#d8d8d8;-webkit-text-stroke-width:0.21px;">0.55</span>
<span style="left:1506.50px;top:132px;font-size:16.52px;line-height:19px;color:#d8d8d8;-webkit-text-stroke-width:0.21px;transform:scaleX(0.9153);">CIE 1976 u'v'</span>
<svg style="left:0;top:0" width="1920" height="720" viewBox="0 0 1920 720"><rect x="1334.0" y="163.8" width="14.3" height="14.3" fill="none" stroke="#fff" stroke-width="1.9"/><rect x="1454.1" y="175.7" width="14.3" height="14.3" fill="none" stroke="#fff" stroke-width="1.9"/><rect x="1390.4" y="201.4" width="14.3" height="14.3" fill="none" stroke="#fff" stroke-width="1.9"/><rect x="1429.3" y="191.2" width="14.3" height="14.3" fill="none" stroke="#fff" stroke-width="1.9"/><rect x="1426.4" y="215.9" width="14.3" height="14.3" fill="none" stroke="#fff" stroke-width="1.9"/><rect x="1481.4" y="189.7" width="14.3" height="14.3" fill="none" stroke="#fff" stroke-width="1.9"/><rect x="1510.8" y="195.8" width="14.3" height="14.3" fill="none" stroke="#fff" stroke-width="1.9"/><rect x="1397.9" y="253.5" width="14.3" height="14.3" fill="none" stroke="#fff" stroke-width="1.9"/><rect x="1358.8" y="272.2" width="14.3" height="14.3" fill="none" stroke="#fff" stroke-width="1.9"/><rect x="1560.8" y="200.7" width="14.3" height="14.3" fill="none" stroke="#fff" stroke-width="1.9"/><rect x="1567.0" y="202.4" width="14.3" height="14.3" fill="none" stroke="#fff" stroke-width="1.9"/><rect x="1540.2" y="207.7" width="14.3" height="14.3" fill="none" stroke="#fff" stroke-width="1.9"/><rect x="1525.2" y="208.5" width="14.3" height="14.3" fill="none" stroke="#fff" stroke-width="1.9"/><rect x="1553.8" y="214.8" width="14.3" height="14.3" fill="none" stroke="#fff" stroke-width="1.9"/><rect x="1504.6" y="216.9" width="14.3" height="14.3" fill="none" stroke="#fff" stroke-width="1.9"/><rect x="1529.6" y="222.7" width="14.3" height="14.3" fill="none" stroke="#fff" stroke-width="1.9"/><rect x="1499.8" y="224.3" width="14.3" height="14.3" fill="none" stroke="#fff" stroke-width="1.9"/><rect x="1501.3" y="225.8" width="14.3" height="14.3" fill="none" stroke="#fff" stroke-width="1.9"/><rect x="1519.1" y="226.2" width="14.3" height="14.3" fill="none" stroke="#fff" stroke-width="1.9"/><rect x="1485.2" y="227.9" width="14.3" height="14.3" fill="none" stroke="#fff" stroke-width="1.9"/><rect x="1505.0" y="234.0" width="14.3" height="14.3" fill="none" stroke="#fff" stroke-width="1.9"/><rect x="1485.2" y="238.4" width="14.3" height="14.3" fill="none" stroke="#fff" stroke-width="1.9"/><rect x="1576.8" y="246.0" width="14.3" height="14.3" fill="none" stroke="#fff" stroke-width="1.9"/><rect x="1376.2" y="308.4" width="14.3" height="14.3" fill="none" stroke="#fff" stroke-width="1.9"/><rect x="1419.8" y="300.9" width="14.3" height="14.3" fill="none" stroke="#fff" stroke-width="1.9"/><rect x="1441.1" y="305.2" width="14.3" height="14.3" fill="none" stroke="#fff" stroke-width="1.9"/><rect x="1479.0" y="328.7" width="14.3" height="14.3" fill="none" stroke="#fff" stroke-width="1.9"/><rect x="1421.1" y="359.9" width="14.3" height="14.3" fill="none" stroke="#fff" stroke-width="1.9"/><rect x="1549.6" y="298.1" width="14.3" height="14.3" fill="none" stroke="#fff" stroke-width="1.9"/><rect x="1589.9" y="380.5" width="14.3" height="14.3" fill="none" stroke="#fff" stroke-width="1.9"/><rect x="1423.8" y="417.9" width="14.3" height="14.3" fill="none" stroke="#fff" stroke-width="1.9"/><rect x="1420.6" y="528.9" width="14.3" height="14.3" fill="none" stroke="#fff" stroke-width="1.9"/><rect x="1654.5" y="230.0" width="14.3" height="14.3" fill="none" stroke="#fff" stroke-width="1.9"/><rect x="1783.2" y="208.0" width="14.3" height="14.3" fill="none" stroke="#fff" stroke-width="1.9"/><rect x="1446.3" y="260.3" width="11.8" height="11.8" fill="none" stroke="#fff" stroke-width="1.2"/><rect x="1444.9" y="258.9" width="14.6" height="14.6" fill="none" stroke="#000" stroke-width="1.8"/><circle cx="1339.9" cy="170.9" r="4.25" fill="#00ff00" stroke="#0a0a0a" stroke-width="1.15"/><circle cx="1458.3" cy="182.8" r="4.25" fill="#ffff00" stroke="#0a0a0a" stroke-width="1.15"/><circle cx="1373.3" cy="201.3" r="4.25" fill="#6a8f5a" stroke="#0a0a0a" stroke-width="1.15"/><circle cx="1429.5" cy="191.0" r="4.25" fill="#a8b860" stroke="#0a0a0a" stroke-width="1.15"/><circle cx="1426.6" cy="217.2" r="4.25" fill="#5c6c4c" stroke="#0a0a0a" stroke-width="1.15"/><circle cx="1495.9" cy="188.3" r="4.25" fill="#d8b850" stroke="#0a0a0a" stroke-width="1.15"/><circle cx="1537.9" cy="195.5" r="4.25" fill="#d4a450" stroke="#0a0a0a" stroke-width="1.15"/><circle cx="1387.4" cy="259.1" r="4.25" fill="#80b0a0" stroke="#0a0a0a" stroke-width="1.15"/><circle cx="1366.0" cy="282.2" r="4.25" fill="#00ffff" stroke="#0a0a0a" stroke-width="1.15"/><circle cx="1593.5" cy="203.0" r="4.25" fill="#c88040" stroke="#0a0a0a" stroke-width="1.15"/><circle cx="1599.9" cy="204.1" r="4.25" fill="#a86838" stroke="#0a0a0a" stroke-width="1.15"/><circle cx="1565.2" cy="209.7" r="4.25" fill="#6c4830" stroke="#0a0a0a" stroke-width="1.15"/><circle cx="1578.3" cy="215.7" r="4.25" fill="#704430" stroke="#0a0a0a" stroke-width="1.15"/><circle cx="1550.4" cy="212.8" r="4.25" fill="#8a6038" stroke="#0a0a0a" stroke-width="1.15"/><circle cx="1521.0" cy="236.8" r="4.25" fill="#7c5840" stroke="#0a0a0a" stroke-width="1.15"/><circle cx="1519.7" cy="230.7" r="4.25" fill="#b88c6c" stroke="#0a0a0a" stroke-width="1.15"/><circle cx="1523.0" cy="230.0" r="4.25" fill="#c09070" stroke="#0a0a0a" stroke-width="1.15"/><circle cx="1527.6" cy="220.1" r="4.25" fill="#b08860" stroke="#0a0a0a" stroke-width="1.15"/><circle cx="1547.8" cy="221.9" r="4.25" fill="#c48c68" stroke="#0a0a0a" stroke-width="1.15"/><circle cx="1556.6" cy="222.7" r="4.25" fill="#c89070" stroke="#0a0a0a" stroke-width="1.15"/><circle cx="1535.0" cy="228.0" r="4.25" fill="#b88060" stroke="#0a0a0a" stroke-width="1.15"/><circle cx="1531.5" cy="226.3" r="4.25" fill="#d0a080" stroke="#0a0a0a" stroke-width="1.15"/><circle cx="1526.3" cy="228.9" r="4.25" fill="#c09878" stroke="#0a0a0a" stroke-width="1.15"/><circle cx="1558.2" cy="228.7" r="4.25" fill="#e0a080" stroke="#0a0a0a" stroke-width="1.15"/><circle cx="1539.3" cy="230.2" r="4.25" fill="#c08868" stroke="#0a0a0a" stroke-width="1.15"/><circle cx="1501.9" cy="232.7" r="4.25" fill="#ecc8a0" stroke="#0a0a0a" stroke-width="1.15"/><circle cx="1502.7" cy="244.7" r="4.25" fill="#d8b090" stroke="#0a0a0a" stroke-width="1.15"/><circle cx="1499.0" cy="244.5" r="4.25" fill="#f0c8b0" stroke="#0a0a0a" stroke-width="1.15"/><circle cx="1618.4" cy="253.2" r="4.25" fill="#b06068" stroke="#0a0a0a" stroke-width="1.15"/><circle cx="1451.2" cy="268.2" r="4.25" fill="#a0a0a0" stroke="#0a0a0a" stroke-width="1.15"/><circle cx="1374.6" cy="319.4" r="4.25" fill="#3888a0" stroke="#0a0a0a" stroke-width="1.15"/><circle cx="1419.3" cy="315.5" r="4.25" fill="#6880a0" stroke="#0a0a0a" stroke-width="1.15"/><circle cx="1435.2" cy="316.9" r="4.25" fill="#000000" stroke="#0a0a0a" stroke-width="1.15"/><circle cx="1448.3" cy="321.0" r="4.25" fill="#8888a8" stroke="#0a0a0a" stroke-width="1.15"/><circle cx="1478.5" cy="353.0" r="4.25" fill="#5c4060" stroke="#0a0a0a" stroke-width="1.15"/><circle cx="1425.3" cy="379.0" r="4.25" fill="#5060a0" stroke="#0a0a0a" stroke-width="1.15"/><circle cx="1573.7" cy="308.5" r="4.25" fill="#a86088" stroke="#0a0a0a" stroke-width="1.15"/><circle cx="1591.0" cy="392.0" r="4.25" fill="#ff00ff" stroke="#0a0a0a" stroke-width="1.15"/><circle cx="1427.8" cy="438.5" r="4.25" fill="#303878" stroke="#0a0a0a" stroke-width="1.15"/><circle cx="1426.6" cy="538.7" r="4.25" fill="#0000ff" stroke="#0a0a0a" stroke-width="1.15"/><circle cx="1701.0" cy="237.2" r="4.25" fill="#a84048" stroke="#0a0a0a" stroke-width="1.15"/><circle cx="1787.7" cy="216.7" r="4.25" fill="#ff0000" stroke="#0a0a0a" stroke-width="1.15"/><defs><linearGradient id="ig" x1="0" y1="0" x2="1" y2="0.25"><stop offset="0" stop-color="#ff9428"/><stop offset="1" stop-color="#ff5418"/></linearGradient><linearGradient id="ig2" x1="0.35" y1="0" x2="0" y2="1"><stop offset="0" stop-color="#ff3444" stop-opacity="0"/><stop offset="1" stop-color="#ff3444" stop-opacity=".55"/></linearGradient><clipPath id="ic"><rect x="1691.8" y="492.6" width="209.6" height="136.7"/></clipPath></defs><rect x="1689.8" y="490.6" width="213.6" height="140.7" fill="#222"/><rect x="1691.8" y="492.6" width="209.6" height="136.7" fill="url(#ig)"/><rect x="1691.8" y="492.6" width="209.6" height="136.7" fill="url(#ig2)"/><g clip-path="url(#ic)"><rect x="1716.2" y="525.1" width="14.3" height="14.3" fill="none" stroke="#fff" stroke-width="1.9"/><rect x="1837.2" y="510.4" width="14.3" height="14.3" fill="none" stroke="#fff" stroke-width="1.9"/><rect x="1788.2" y="552.1" width="14.3" height="14.3" fill="none" stroke="#fff" stroke-width="1.9"/><rect x="1801.3" y="567.1" width="14.3" height="14.3" fill="none" stroke="#fff" stroke-width="1.9"/><rect x="1711.5" y="571.2" width="14.3" height="14.3" fill="none" stroke="#fff" stroke-width="1.9"/><rect x="1721.5" y="585.6" width="14.3" height="14.3" fill="none" stroke="#fff" stroke-width="1.9"/><rect x="1774.3" y="584.0" width="14.3" height="14.3" fill="none" stroke="#fff" stroke-width="1.9"/><rect x="1690.3" y="571.2" width="14.3" height="14.3" fill="none" stroke="#fff" stroke-width="1.9"/><rect x="1900.8" y="513.9" width="14.3" height="14.3" fill="none" stroke="#fff" stroke-width="1.9"/><circle cx="1808.5" cy="529.5" r="4.25" fill="#c89060" stroke="#0a0a0a" stroke-width="1.15"/><circle cx="1880.6" cy="553.8" r="4.25" fill="#d09068" stroke="#0a0a0a" stroke-width="1.15"/><circle cx="1724.5" cy="572.6" r="4.25" fill="#b88058" stroke="#0a0a0a" stroke-width="1.15"/><circle cx="1758.0" cy="569.6" r="4.25" fill="#c08860" stroke="#0a0a0a" stroke-width="1.15"/><circle cx="1770.7" cy="571.5" r="4.25" fill="#e0a880" stroke="#0a0a0a" stroke-width="1.15"/><circle cx="1788.5" cy="577.3" r="4.25" fill="#c08058" stroke="#0a0a0a" stroke-width="1.15"/><circle cx="1702.9" cy="581.1" r="4.25" fill="#d0a070" stroke="#0a0a0a" stroke-width="1.15"/><circle cx="1743.4" cy="585.7" r="4.25" fill="#b88058" stroke="#0a0a0a" stroke-width="1.15"/><circle cx="1795.4" cy="591.1" r="4.25" fill="#c08060" stroke="#0a0a0a" stroke-width="1.15"/><circle cx="1877.5" cy="597.3" r="4.25" fill="#e8a080" stroke="#0a0a0a" stroke-width="1.15"/><circle cx="1900.5" cy="568.4" r="4.25" fill="#d09068" stroke="#0a0a0a" stroke-width="1.15"/><circle cx="1691.5" cy="602.3" r="4.25" fill="#000000" stroke="#0a0a0a" stroke-width="1.15"/></g><rect x="1691.8" y="492.6" width="209.6" height="136.7" fill="none" stroke="#8c8c8c" stroke-width="1.3"/><rect x="1637" y="640" width="268" height="29" fill="#333"/></svg>
<span style="left:1638.50px;top:644px;font-size:20.87px;line-height:23px;color:#fff;-webkit-text-stroke-width:0.27px;">RGB Triplet: 207, 143, 102</span>
<!-- table -->
<div style="left:490.00px;top:726.70px;width:1427.00px;height:241.60px;background:#141414;"></div>
<div style="left:491.90px;top:728.00px;width:1424.40px;height:26.75px;background:linear-gradient(#2b2b2b,#272727 48%,#191919 52%,#1c1c1c 88%,#101010);"></div>
<div style="left:491.90px;top:754.75px;width:1424.40px;height:24.93px;background:linear-gradient(#474747,#424242);"></div>
<div style="left:491.90px;top:779.38px;width:1424.40px;height:24.93px;background:linear-gradient(#878787,#7e7e7e);"></div>
<div style="left:491.90px;top:804.01px;width:1424.40px;height:24.93px;background:linear-gradient(#474747,#424242);"></div>
<div style="left:491.90px;top:828.64px;width:1424.40px;height:24.93px;background:linear-gradient(#878787,#7e7e7e);"></div>
<div style="left:491.90px;top:853.27px;width:1424.40px;height:24.93px;background:linear-gradient(#474747,#424242);"></div>
<div style="left:491.90px;top:877.90px;width:1424.40px;height:24.93px;background:linear-gradient(#878787,#7e7e7e);"></div>
<div style="left:491.90px;top:902.53px;width:1424.40px;height:24.93px;background:linear-gradient(#474747,#424242);"></div>
<div style="left:491.90px;top:927.16px;width:1424.40px;height:24.93px;background:linear-gradient(#878787,#7e7e7e);"></div>
<div style="left:491.90px;top:728.00px;width:1424.40px;height:223.70px;overflow:hidden;"><span style="left:180.90px;top:6px;font-size:14.35px;line-height:16px;color:#f2f2f2;transform:scaleX(1.3801);-webkit-text-stroke:0.25px #f2f2f2;">White</span><span style="left:246.28px;top:6px;font-size:14.35px;line-height:16px;color:#f2f2f2;transform:scaleX(1.2815);-webkit-text-stroke:0.25px #f2f2f2;">Gray 80</span><span style="left:320.93px;top:6px;font-size:14.35px;line-height:16px;color:#f2f2f2;transform:scaleX(1.2823);-webkit-text-stroke:0.25px #f2f2f2;">Gray 65</span><span style="left:395.92px;top:6px;font-size:14.35px;line-height:16px;color:#f2f2f2;transform:scaleX(1.2905);-webkit-text-stroke:0.25px #f2f2f2;">Gray 50</span><span style="left:470.92px;top:6px;font-size:14.35px;line-height:16px;color:#f2f2f2;transform:scaleX(1.2924);-webkit-text-stroke:0.25px #f2f2f2;">Gray 35</span><span style="left:548.63px;top:6px;font-size:14.35px;line-height:16px;color:#f2f2f2;transform:scaleX(1.2820);-webkit-text-stroke:0.25px #f2f2f2;">Black</span><span style="left:605.87px;top:6px;font-size:14.35px;line-height:16px;color:#f2f2f2;transform:scaleX(1.2891);-webkit-text-stroke:0.25px #f2f2f2;">Dark Skin</span><span style="left:694.86px;top:6px;font-size:14.35px;line-height:16px;color:#f2f2f2;transform:scaleX(1.3012);-webkit-text-stroke:0.25px #f2f2f2;">Light Skin</span><span style="left:786.17px;top:6px;font-size:14.35px;line-height:16px;color:#f2f2f2;transform:scaleX(1.2488);-webkit-text-stroke:0.25px #f2f2f2;">Blue Sky</span><span style="left:867.14px;top:6px;font-size:14.35px;line-height:16px;color:#f2f2f2;transform:scaleX(1.2737);-webkit-text-stroke:0.25px #f2f2f2;">Foliage</span><span style="left:937.34px;top:6px;font-size:14.35px;line-height:16px;color:#f2f2f2;transform:scaleX(1.3173);-webkit-text-stroke:0.25px #f2f2f2;">Blue Flower</span><span style="left:1047.10px;top:6px;font-size:14.35px;line-height:16px;color:#f2f2f2;transform:scaleX(1.3080);-webkit-text-stroke:0.25px #f2f2f2;">Bluish Green</span><span style="left:1164.76px;top:6px;font-size:14.35px;line-height:16px;color:#f2f2f2;transform:scaleX(1.2974);-webkit-text-stroke:0.25px #f2f2f2;">Orange</span><span style="left:1236.18px;top:6px;font-size:14.35px;line-height:16px;color:#f2f2f2;transform:scaleX(1.3203);-webkit-text-stroke:0.25px #f2f2f2;">Purplish Blue</span><span style="left:1357.19px;top:6px;font-size:14.35px;line-height:16px;color:#f2f2f2;transform:scaleX(1.4000);-webkit-text-stroke:0.25px #f2f2f2;">Moderate Red</span><span style="left:15.80px;top:31px;font-size:15.22px;line-height:17px;color:#fff;font-weight:700;transform:scaleX(1.2606);">x: CIE31</span><span style="left:175.22px;top:31px;font-size:15.36px;line-height:17px;color:#fff;-webkit-text-stroke-width:0.20px;transform:scaleX(1.2620);">0.31</span><span style="left:245.92px;top:31px;font-size:15.36px;line-height:17px;color:#fff;-webkit-text-stroke-width:0.20px;transform:scaleX(1.2620);">0.31</span><span style="left:321.07px;top:31px;font-size:15.36px;line-height:17px;color:#fff;-webkit-text-stroke-width:0.20px;transform:scaleX(1.2620);">0.31</span><span style="left:396.07px;top:31px;font-size:15.36px;line-height:17px;color:#fff;-webkit-text-stroke-width:0.20px;transform:scaleX(1.2620);">0.31</span><span style="left:471.07px;top:31px;font-size:15.36px;line-height:17px;color:#fff;-webkit-text-stroke-width:0.20px;transform:scaleX(1.2620);">0.31</span><span style="left:546.57px;top:31px;font-size:15.36px;line-height:17px;color:#fff;-webkit-text-stroke-width:0.20px;transform:scaleX(1.2620);">0.25</span><span style="left:606.07px;top:31px;font-size:15.36px;line-height:17px;color:#fff;-webkit-text-stroke-width:0.20px;transform:scaleX(1.2620);">0.42</span><span style="left:695.57px;top:31px;font-size:15.36px;line-height:17px;color:#fff;-webkit-text-stroke-width:0.20px;transform:scaleX(1.2620);">0.39</span><span style="left:786.07px;top:31px;font-size:15.36px;line-height:17px;color:#fff;-webkit-text-stroke-width:0.20px;transform:scaleX(1.2620);">0.24</span><span style="left:866.82px;top:31px;font-size:15.36px;line-height:17px;color:#fff;-webkit-text-stroke-width:0.20px;transform:scaleX(1.2620);">0.34</span><span style="left:937.32px;top:31px;font-size:15.36px;line-height:17px;color:#fff;-webkit-text-stroke-width:0.20px;transform:scaleX(1.2620);">0.26</span><span style="left:1046.82px;top:31px;font-size:15.36px;line-height:17px;color:#fff;-webkit-text-stroke-width:0.20px;transform:scaleX(1.2620);">0.24</span><span style="left:1164.82px;top:31px;font-size:15.36px;line-height:17px;color:#fff;-webkit-text-stroke-width:0.20px;transform:scaleX(1.2620);">0.55</span><span style="left:1236.52px;top:31px;font-size:15.36px;line-height:17px;color:#fff;-webkit-text-stroke-width:0.20px;transform:scaleX(1.2620);">0.20</span><span style="left:1357.42px;top:31px;font-size:15.36px;line-height:17px;color:#fff;-webkit-text-stroke-width:0.20px;transform:scaleX(1.2620);">0.49</span><span style="left:15.71px;top:55px;font-size:15.22px;line-height:17px;color:#f0f0f0;font-weight:700;transform:scaleX(1.2622);">y: CIE31</span><span style="left:175.22px;top:55px;font-size:15.36px;line-height:17px;color:#f0f0f0;-webkit-text-stroke-width:0.20px;transform:scaleX(1.2620);">0.32</span><span style="left:245.92px;top:55px;font-size:15.36px;line-height:17px;color:#f0f0f0;-webkit-text-stroke-width:0.20px;transform:scaleX(1.2620);">0.33</span><span style="left:321.07px;top:55px;font-size:15.36px;line-height:17px;color:#f0f0f0;-webkit-text-stroke-width:0.20px;transform:scaleX(1.2620);">0.33</span><span style="left:396.07px;top:55px;font-size:15.36px;line-height:17px;color:#f0f0f0;-webkit-text-stroke-width:0.20px;transform:scaleX(1.2620);">0.33</span><span style="left:471.07px;top:55px;font-size:15.36px;line-height:17px;color:#f0f0f0;-webkit-text-stroke-width:0.20px;transform:scaleX(1.2620);">0.33</span><span style="left:546.57px;top:55px;font-size:15.36px;line-height:17px;color:#f0f0f0;-webkit-text-stroke-width:0.20px;transform:scaleX(1.2620);">0.25</span><span style="left:606.07px;top:55px;font-size:15.36px;line-height:17px;color:#f0f0f0;-webkit-text-stroke-width:0.20px;transform:scaleX(1.2620);">0.37</span><span style="left:695.57px;top:55px;font-size:15.36px;line-height:17px;color:#f0f0f0;-webkit-text-stroke-width:0.20px;transform:scaleX(1.2620);">0.35</span><span style="left:786.07px;top:55px;font-size:15.36px;line-height:17px;color:#f0f0f0;-webkit-text-stroke-width:0.20px;transform:scaleX(1.2620);">0.26</span><span style="left:866.82px;top:55px;font-size:15.36px;line-height:17px;color:#f0f0f0;-webkit-text-stroke-width:0.20px;transform:scaleX(1.2620);">0.45</span><span style="left:937.32px;top:55px;font-size:15.36px;line-height:17px;color:#f0f0f0;-webkit-text-stroke-width:0.20px;transform:scaleX(1.2620);">0.24</span><span style="left:1046.82px;top:55px;font-size:15.36px;line-height:17px;color:#f0f0f0;-webkit-text-stroke-width:0.20px;transform:scaleX(1.2620);">0.36</span><span style="left:1164.82px;top:55px;font-size:15.36px;line-height:17px;color:#f0f0f0;-webkit-text-stroke-width:0.20px;transform:scaleX(1.2620);">0.41</span><span style="left:1236.52px;top:55px;font-size:15.36px;line-height:17px;color:#f0f0f0;-webkit-text-stroke-width:0.20px;transform:scaleX(1.2620);">0.18</span><span style="left:1357.42px;top:55px;font-size:15.36px;line-height:17px;color:#f0f0f0;-webkit-text-stroke-width:0.20px;transform:scaleX(1.2620);">0.30</span><span style="left:15.62px;top:80px;font-size:15.22px;line-height:17px;color:#fff;font-weight:700;transform:scaleX(1.2418);">Y</span><span style="left:175.22px;top:80px;font-size:15.36px;line-height:17px;color:#fff;-webkit-text-stroke-width:0.20px;transform:scaleX(1.2620);">510.42</span><span style="left:246.31px;top:80px;font-size:15.36px;line-height:17px;color:#fff;-webkit-text-stroke-width:0.20px;transform:scaleX(1.2620);">409.39</span><span style="left:321.07px;top:80px;font-size:15.36px;line-height:17px;color:#fff;-webkit-text-stroke-width:0.20px;transform:scaleX(1.2620);">329.22</span><span style="left:395.88px;top:80px;font-size:15.36px;line-height:17px;color:#fff;-webkit-text-stroke-width:0.20px;transform:scaleX(1.2620);">254.07</span><span style="left:470.40px;top:80px;font-size:15.36px;line-height:17px;color:#fff;-webkit-text-stroke-width:0.20px;transform:scaleX(1.2620);">177.29</span><span style="left:546.57px;top:80px;font-size:15.36px;line-height:17px;color:#fff;-webkit-text-stroke-width:0.20px;transform:scaleX(1.2620);">0.31</span><span style="left:606.07px;top:80px;font-size:15.36px;line-height:17px;color:#fff;-webkit-text-stroke-width:0.20px;transform:scaleX(1.2620);">50.61</span><span style="left:694.90px;top:80px;font-size:15.36px;line-height:17px;color:#fff;-webkit-text-stroke-width:0.20px;transform:scaleX(1.2620);">181.41</span><span style="left:785.98px;top:80px;font-size:15.36px;line-height:17px;color:#fff;-webkit-text-stroke-width:0.20px;transform:scaleX(1.2620);">95.73</span><span style="left:866.63px;top:80px;font-size:15.36px;line-height:17px;color:#fff;-webkit-text-stroke-width:0.20px;transform:scaleX(1.2620);">64.90</span><span style="left:936.65px;top:80px;font-size:15.36px;line-height:17px;color:#fff;-webkit-text-stroke-width:0.20px;transform:scaleX(1.2620);">121.33</span><span style="left:1046.63px;top:80px;font-size:15.36px;line-height:17px;color:#fff;-webkit-text-stroke-width:0.20px;transform:scaleX(1.2620);">212.78</span><span style="left:1164.15px;top:80px;font-size:15.36px;line-height:17px;color:#fff;-webkit-text-stroke-width:0.20px;transform:scaleX(1.2620);">149.42</span><span style="left:1236.52px;top:80px;font-size:15.36px;line-height:17px;color:#fff;-webkit-text-stroke-width:0.20px;transform:scaleX(1.2620);">59.86</span><span style="left:1357.33px;top:80px;font-size:15.36px;line-height:17px;color:#fff;-webkit-text-stroke-width:0.20px;transform:scaleX(1.2620);">98.51</span><span style="left:15.70px;top:105px;font-size:15.22px;line-height:17px;color:#f0f0f0;font-weight:700;transform:scaleX(1.3086);">Target x:CIE31</span><span style="left:175.22px;top:105px;font-size:15.36px;line-height:17px;color:#f0f0f0;-webkit-text-stroke-width:0.20px;transform:scaleX(1.2620);">0.31</span><span style="left:245.92px;top:105px;font-size:15.36px;line-height:17px;color:#f0f0f0;-webkit-text-stroke-width:0.20px;transform:scaleX(1.2620);">0.31</span><span style="left:321.07px;top:105px;font-size:15.36px;line-height:17px;color:#f0f0f0;-webkit-text-stroke-width:0.20px;transform:scaleX(1.2620);">0.31</span><span style="left:396.07px;top:105px;font-size:15.36px;line-height:17px;color:#f0f0f0;-webkit-text-stroke-width:0.20px;transform:scaleX(1.2620);">0.31</span><span style="left:471.07px;top:105px;font-size:15.36px;line-height:17px;color:#f0f0f0;-webkit-text-stroke-width:0.20px;transform:scaleX(1.2620);">0.31</span><span style="left:546.57px;top:105px;font-size:15.36px;line-height:17px;color:#f0f0f0;-webkit-text-stroke-width:0.20px;transform:scaleX(1.2620);">0.31</span><span style="left:606.07px;top:105px;font-size:15.36px;line-height:17px;color:#f0f0f0;-webkit-text-stroke-width:0.20px;transform:scaleX(1.2620);">0.41</span><span style="left:695.57px;top:105px;font-size:15.36px;line-height:17px;color:#f0f0f0;-webkit-text-stroke-width:0.20px;transform:scaleX(1.2620);">0.38</span><span style="left:786.07px;top:105px;font-size:15.36px;line-height:17px;color:#f0f0f0;-webkit-text-stroke-width:0.20px;transform:scaleX(1.2620);">0.25</span><span style="left:866.82px;top:105px;font-size:15.36px;line-height:17px;color:#f0f0f0;-webkit-text-stroke-width:0.20px;transform:scaleX(1.2620);">0.34</span><span style="left:937.32px;top:105px;font-size:15.36px;line-height:17px;color:#f0f0f0;-webkit-text-stroke-width:0.20px;transform:scaleX(1.2620);">0.27</span><span style="left:1046.82px;top:105px;font-size:15.36px;line-height:17px;color:#f0f0f0;-webkit-text-stroke-width:0.20px;transform:scaleX(1.2620);">0.26</span><span style="left:1164.82px;top:105px;font-size:15.36px;line-height:17px;color:#f0f0f0;-webkit-text-stroke-width:0.20px;transform:scaleX(1.2620);">0.51</span><span style="left:1236.52px;top:105px;font-size:15.36px;line-height:17px;color:#f0f0f0;-webkit-text-stroke-width:0.20px;transform:scaleX(1.2620);">0.21</span><span style="left:1357.42px;top:105px;font-size:15.36px;line-height:17px;color:#f0f0f0;-webkit-text-stroke-width:0.20px;transform:scaleX(1.2620);">0.46</span><span style="left:15.70px;top:129px;font-size:15.22px;line-height:17px;color:#fff;font-weight:700;transform:scaleX(1.3086);">Target y:CIE31</span><span style="left:175.22px;top:129px;font-size:15.36px;line-height:17px;color:#fff;-webkit-text-stroke-width:0.20px;transform:scaleX(1.2620);">0.33</span><span style="left:245.92px;top:129px;font-size:15.36px;line-height:17px;color:#fff;-webkit-text-stroke-width:0.20px;transform:scaleX(1.2620);">0.33</span><span style="left:321.07px;top:129px;font-size:15.36px;line-height:17px;color:#fff;-webkit-text-stroke-width:0.20px;transform:scaleX(1.2620);">0.33</span><span style="left:396.07px;top:129px;font-size:15.36px;line-height:17px;color:#fff;-webkit-text-stroke-width:0.20px;transform:scaleX(1.2620);">0.33</span><span style="left:471.07px;top:129px;font-size:15.36px;line-height:17px;color:#fff;-webkit-text-stroke-width:0.20px;transform:scaleX(1.2620);">0.33</span><span style="left:546.57px;top:129px;font-size:15.36px;line-height:17px;color:#fff;-webkit-text-stroke-width:0.20px;transform:scaleX(1.2620);">0.33</span><span style="left:606.07px;top:129px;font-size:15.36px;line-height:17px;color:#fff;-webkit-text-stroke-width:0.20px;transform:scaleX(1.2620);">0.36</span><span style="left:695.57px;top:129px;font-size:15.36px;line-height:17px;color:#fff;-webkit-text-stroke-width:0.20px;transform:scaleX(1.2620);">0.35</span><span style="left:786.07px;top:129px;font-size:15.36px;line-height:17px;color:#fff;-webkit-text-stroke-width:0.20px;transform:scaleX(1.2620);">0.27</span><span style="left:866.82px;top:129px;font-size:15.36px;line-height:17px;color:#fff;-webkit-text-stroke-width:0.20px;transform:scaleX(1.2620);">0.43</span><span style="left:937.32px;top:129px;font-size:15.36px;line-height:17px;color:#fff;-webkit-text-stroke-width:0.20px;transform:scaleX(1.2620);">0.25</span><span style="left:1046.82px;top:129px;font-size:15.36px;line-height:17px;color:#fff;-webkit-text-stroke-width:0.20px;transform:scaleX(1.2620);">0.36</span><span style="left:1164.82px;top:129px;font-size:15.36px;line-height:17px;color:#fff;-webkit-text-stroke-width:0.20px;transform:scaleX(1.2620);">0.41</span><span style="left:1236.52px;top:129px;font-size:15.36px;line-height:17px;color:#fff;-webkit-text-stroke-width:0.20px;transform:scaleX(1.2620);">0.19</span><span style="left:1357.42px;top:129px;font-size:15.36px;line-height:17px;color:#fff;-webkit-text-stroke-width:0.20px;transform:scaleX(1.2620);">0.31</span><span style="left:15.70px;top:154px;font-size:15.22px;line-height:17px;color:#f0f0f0;font-weight:700;transform:scaleX(1.3397);">Target Y</span><span style="left:175.22px;top:154px;font-size:15.36px;line-height:17px;color:#f0f0f0;-webkit-text-stroke-width:0.20px;transform:scaleX(1.2620);">510.42</span><span style="left:246.31px;top:154px;font-size:15.36px;line-height:17px;color:#f0f0f0;-webkit-text-stroke-width:0.20px;transform:scaleX(1.2620);">406.76</span><span style="left:321.07px;top:154px;font-size:15.36px;line-height:17px;color:#f0f0f0;-webkit-text-stroke-width:0.20px;transform:scaleX(1.2620);">329.51</span><span style="left:395.88px;top:154px;font-size:15.36px;line-height:17px;color:#f0f0f0;-webkit-text-stroke-width:0.20px;transform:scaleX(1.2620);">254.96</span><span style="left:470.40px;top:154px;font-size:15.36px;line-height:17px;color:#f0f0f0;-webkit-text-stroke-width:0.20px;transform:scaleX(1.2620);">178.07</span><span style="left:546.57px;top:154px;font-size:15.36px;line-height:17px;color:#f0f0f0;-webkit-text-stroke-width:0.20px;transform:scaleX(1.2620);">0.00</span><span style="left:606.46px;top:154px;font-size:15.36px;line-height:17px;color:#f0f0f0;-webkit-text-stroke-width:0.20px;transform:scaleX(1.2620);">49.76</span><span style="left:694.90px;top:154px;font-size:15.36px;line-height:17px;color:#f0f0f0;-webkit-text-stroke-width:0.20px;transform:scaleX(1.2620);">177.92</span><span style="left:785.98px;top:154px;font-size:15.36px;line-height:17px;color:#f0f0f0;-webkit-text-stroke-width:0.20px;transform:scaleX(1.2620);">97.47</span><span style="left:866.63px;top:154px;font-size:15.36px;line-height:17px;color:#f0f0f0;-webkit-text-stroke-width:0.20px;transform:scaleX(1.2620);">67.09</span><span style="left:936.65px;top:154px;font-size:15.36px;line-height:17px;color:#f0f0f0;-webkit-text-stroke-width:0.20px;transform:scaleX(1.2620);">119.96</span><span style="left:1046.63px;top:154px;font-size:15.36px;line-height:17px;color:#f0f0f0;-webkit-text-stroke-width:0.20px;transform:scaleX(1.2620);">216.25</span><span style="left:1164.15px;top:154px;font-size:15.36px;line-height:17px;color:#f0f0f0;-webkit-text-stroke-width:0.20px;transform:scaleX(1.2620);">146.84</span><span style="left:1236.52px;top:154px;font-size:15.36px;line-height:17px;color:#f0f0f0;-webkit-text-stroke-width:0.20px;transform:scaleX(1.2620);">59.75</span><span style="left:1357.33px;top:154px;font-size:15.36px;line-height:17px;color:#f0f0f0;-webkit-text-stroke-width:0.20px;transform:scaleX(1.2620);">95.53</span><span style="left:15.08px;top:179px;font-size:15.22px;line-height:17px;color:#fff;font-weight:700;transform:scaleX(1.3523);">ΔE 2000</span><span style="left:175.03px;top:179px;font-size:15.36px;line-height:17px;color:#fff;-webkit-text-stroke-width:0.20px;transform:scaleX(1.2620);">2.38</span><span style="left:245.73px;top:179px;font-size:15.36px;line-height:17px;color:#fff;-webkit-text-stroke-width:0.20px;transform:scaleX(1.2620);">2.02</span><span style="left:320.40px;top:179px;font-size:15.36px;line-height:17px;color:#fff;-webkit-text-stroke-width:0.20px;transform:scaleX(1.2620);">1.85</span><span style="left:395.40px;top:179px;font-size:15.36px;line-height:17px;color:#fff;-webkit-text-stroke-width:0.20px;transform:scaleX(1.2620);">1.97</span><span style="left:470.40px;top:179px;font-size:15.36px;line-height:17px;color:#fff;-webkit-text-stroke-width:0.20px;transform:scaleX(1.2620);">1.54</span><span style="left:546.57px;top:179px;font-size:15.36px;line-height:17px;color:#fff;-webkit-text-stroke-width:0.20px;transform:scaleX(1.2620);">0.83</span><span style="left:605.40px;top:179px;font-size:15.36px;line-height:17px;color:#fff;-webkit-text-stroke-width:0.20px;transform:scaleX(1.2620);">1.70</span><span style="left:695.38px;top:179px;font-size:15.36px;line-height:17px;color:#fff;-webkit-text-stroke-width:0.20px;transform:scaleX(1.2620);">2.11</span><span style="left:785.88px;top:179px;font-size:15.36px;line-height:17px;color:#fff;-webkit-text-stroke-width:0.20px;transform:scaleX(1.2620);">2.28</span><span style="left:866.15px;top:179px;font-size:15.36px;line-height:17px;color:#fff;-webkit-text-stroke-width:0.20px;transform:scaleX(1.2620);">1.88</span><span style="left:936.65px;top:179px;font-size:15.36px;line-height:17px;color:#fff;-webkit-text-stroke-width:0.20px;transform:scaleX(1.2620);">1.96</span><span style="left:1047.21px;top:179px;font-size:15.36px;line-height:17px;color:#fff;-webkit-text-stroke-width:0.20px;transform:scaleX(1.2620);">4.52</span><span style="left:1165.21px;top:179px;font-size:15.36px;line-height:17px;color:#fff;-webkit-text-stroke-width:0.20px;transform:scaleX(1.2620);">4.19</span><span style="left:1235.85px;top:179px;font-size:15.36px;line-height:17px;color:#fff;-webkit-text-stroke-width:0.20px;transform:scaleX(1.2620);">1.41</span><span style="left:1357.42px;top:179px;font-size:15.36px;line-height:17px;color:#fff;-webkit-text-stroke-width:0.20px;transform:scaleX(1.2620);">3.47</span><span style="left:15.11px;top:203px;font-size:15.22px;line-height:17px;color:#f0f0f0;font-weight:700;transform:scaleX(1.2997);">ΔE ITP</span><span style="left:175.03px;top:203px;font-size:15.36px;line-height:17px;color:#f0f0f0;-webkit-text-stroke-width:0.20px;transform:scaleX(1.2620);">2.79</span><span style="left:245.73px;top:203px;font-size:15.36px;line-height:17px;color:#f0f0f0;-webkit-text-stroke-width:0.20px;transform:scaleX(1.2620);">2.55</span><span style="left:320.88px;top:203px;font-size:15.36px;line-height:17px;color:#f0f0f0;-webkit-text-stroke-width:0.20px;transform:scaleX(1.2620);">2.50</span><span style="left:395.88px;top:203px;font-size:15.36px;line-height:17px;color:#f0f0f0;-webkit-text-stroke-width:0.20px;transform:scaleX(1.2620);">2.79</span><span style="left:470.88px;top:203px;font-size:15.36px;line-height:17px;color:#f0f0f0;-webkit-text-stroke-width:0.20px;transform:scaleX(1.2620);">2.49</span><span style="left:546.38px;top:203px;font-size:15.36px;line-height:17px;color:#f0f0f0;-webkit-text-stroke-width:0.20px;transform:scaleX(1.2620);">72.55</span><span style="left:605.88px;top:203px;font-size:15.36px;line-height:17px;color:#f0f0f0;-webkit-text-stroke-width:0.20px;transform:scaleX(1.2620);">7.50</span><span style="left:695.38px;top:203px;font-size:15.36px;line-height:17px;color:#f0f0f0;-webkit-text-stroke-width:0.20px;transform:scaleX(1.2620);">6.58</span><span style="left:786.07px;top:203px;font-size:15.36px;line-height:17px;color:#f0f0f0;-webkit-text-stroke-width:0.20px;transform:scaleX(1.2620);">8.84</span><span style="left:866.63px;top:203px;font-size:15.36px;line-height:17px;color:#f0f0f0;-webkit-text-stroke-width:0.20px;transform:scaleX(1.2620);">6.70</span><span style="left:937.32px;top:203px;font-size:15.36px;line-height:17px;color:#f0f0f0;-webkit-text-stroke-width:0.20px;transform:scaleX(1.2620);">5.15</span><span style="left:1046.15px;top:203px;font-size:15.36px;line-height:17px;color:#f0f0f0;-webkit-text-stroke-width:0.20px;transform:scaleX(1.2620);">14.96</span><span style="left:1164.63px;top:203px;font-size:15.36px;line-height:17px;color:#f0f0f0;-webkit-text-stroke-width:0.20px;transform:scaleX(1.2620);">28.12</span><span style="left:1236.33px;top:203px;font-size:15.36px;line-height:17px;color:#f0f0f0;-webkit-text-stroke-width:0.20px;transform:scaleX(1.2620);">7.74</span><span style="left:1357.23px;top:203px;font-size:15.36px;line-height:17px;color:#f0f0f0;-webkit-text-stroke-width:0.20px;transform:scaleX(1.2620);">25.94</span></div>
<div style="left:491.90px;top:951.80px;width:1424.40px;height:15.80px;background:#5c5c5c;"></div>
<div style="left:493.10px;top:953.20px;width:17.50px;height:13.60px;background:linear-gradient(#7a7a7a,#686868);border-radius:3px;"></div>
<div style="left:1896.80px;top:953.20px;width:17.50px;height:13.60px;background:linear-gradient(#7a7a7a,#686868);border-radius:3px;"></div>
<svg style="left:497.6px;top:955px" width="8" height="10" viewBox="0 0 8 10"><path d="M7.4 0.4v9.2L0.6 5z" fill="#333"/></svg>
<svg style="left:1901.8px;top:955px" width="8" height="10" viewBox="0 0 8 10"><path d="M0.6 0.4v9.2L7.4 5z" fill="#333"/></svg>
<div style="left:514.00px;top:953.70px;width:485.30px;height:12.60px;background:#454545;border-radius:6.3px;"></div>
<div style="left:1916.90px;top:726.00px;width:3.70px;height:244.00px;background:#333;"></div>
<!-- strip -->
<div style="left:150.50px;top:1010.90px;width:1526.50px;height:47.10px;background:#404040;"></div>
<div style="left:157.40px;top:1011.70px;width:37.20px;height:35.60px;background:linear-gradient(#a2a2a2,#909090 12%,#7c7c7c 60%,#686868);border-radius:3.5px 3.5px 0 0;box-shadow:inset 0 1px 0 #b4b4b4,inset 1px 0 0 #9a9a9a,inset -1px 0 0 #767676;"></div>
<div style="left:160.80px;top:1015.20px;width:30.20px;height:17.80px;background:#6785ab;border-radius:2.2px;box-shadow:inset 0 0 1.5px rgba(0,0,0,.55);"></div>
<span style="left:160.56px;top:1037px;font-size:8.55px;line-height:10px;color:#222;transform:scaleX(0.9150);-webkit-text-stroke:0.2px #222;">Blue Sky</span>
<div style="left:196.42px;top:1011.70px;width:37.20px;height:35.60px;background:linear-gradient(#a2a2a2,#909090 12%,#7c7c7c 60%,#686868);border-radius:3.5px 3.5px 0 0;box-shadow:inset 0 1px 0 #b4b4b4,inset 1px 0 0 #9a9a9a,inset -1px 0 0 #767676;"></div>
<div style="left:199.82px;top:1015.20px;width:30.20px;height:17.80px;background:#5f7148;border-radius:2.2px;box-shadow:inset 0 0 1.5px rgba(0,0,0,.55);"></div>
<span style="left:202.19px;top:1037px;font-size:8.55px;line-height:10px;color:#222;transform:scaleX(0.9150);-webkit-text-stroke:0.2px #222;">Foliage</span>
<div style="left:235.44px;top:1011.70px;width:37.20px;height:35.60px;background:linear-gradient(#a2a2a2,#909090 12%,#7c7c7c 60%,#686868);border-radius:3.5px 3.5px 0 0;box-shadow:inset 0 1px 0 #b4b4b4,inset 1px 0 0 #9a9a9a,inset -1px 0 0 #767676;"></div>
<div style="left:238.84px;top:1015.20px;width:30.20px;height:8.80px;background:#8986b8;border-radius:2.2px;box-shadow:inset 0 0 1.5px rgba(0,0,0,.55);"></div>
<span style="left:242.30px;top:1028px;font-size:8.55px;line-height:10px;color:#222;transform:scaleX(0.9150);-webkit-text-stroke:0.2px #222;">Blue</span>
<span style="left:242.30px;top:1037px;font-size:8.55px;line-height:10px;color:#222;transform:scaleX(0.9150);-webkit-text-stroke:0.2px #222;">Flower</span>
<div style="left:274.46px;top:1011.70px;width:37.20px;height:35.60px;background:linear-gradient(#a2a2a2,#909090 12%,#7c7c7c 60%,#686868);border-radius:3.5px 3.5px 0 0;box-shadow:inset 0 1px 0 #b4b4b4,inset 1px 0 0 #9a9a9a,inset -1px 0 0 #767676;"></div>
<div style="left:277.86px;top:1015.20px;width:30.20px;height:8.80px;background:#7bc4b2;border-radius:2.2px;box-shadow:inset 0 0 1.5px rgba(0,0,0,.55);"></div>
<span style="left:282.19px;top:1028px;font-size:8.55px;line-height:10px;color:#222;transform:scaleX(0.9150);-webkit-text-stroke:0.2px #222;">Bluish</span>
<span style="left:282.19px;top:1037px;font-size:8.55px;line-height:10px;color:#222;transform:scaleX(0.9150);-webkit-text-stroke:0.2px #222;">Green</span>
<div style="left:313.48px;top:1011.70px;width:37.20px;height:35.60px;background:linear-gradient(#a2a2a2,#909090 12%,#7c7c7c 60%,#686868);border-radius:3.5px 3.5px 0 0;box-shadow:inset 0 1px 0 #b4b4b4,inset 1px 0 0 #9a9a9a,inset -1px 0 0 #767676;"></div>
<div style="left:316.88px;top:1015.20px;width:30.20px;height:17.80px;background:#d98340;border-radius:2.2px;box-shadow:inset 0 0 1.5px rgba(0,0,0,.55);"></div>
<span style="left:319.03px;top:1037px;font-size:8.55px;line-height:10px;color:#222;transform:scaleX(0.9150);-webkit-text-stroke:0.2px #222;">Orange</span>
<div style="left:352.50px;top:1011.70px;width:37.20px;height:35.60px;background:linear-gradient(#a2a2a2,#909090 12%,#7c7c7c 60%,#686868);border-radius:3.5px 3.5px 0 0;box-shadow:inset 0 1px 0 #b4b4b4,inset 1px 0 0 #9a9a9a,inset -1px 0 0 #767676;"></div>
<div style="left:355.90px;top:1015.20px;width:30.20px;height:8.80px;background:#4f5fb0;border-radius:2.2px;box-shadow:inset 0 0 1.5px rgba(0,0,0,.55);"></div>
<span style="left:356.97px;top:1028px;font-size:8.55px;line-height:10px;color:#222;transform:scaleX(0.9150);-webkit-text-stroke:0.2px #222;">Purplish</span>
<span style="left:356.97px;top:1037px;font-size:8.55px;line-height:10px;color:#222;transform:scaleX(0.9150);-webkit-text-stroke:0.2px #222;">Blue</span>
<div style="left:391.52px;top:1011.70px;width:37.20px;height:35.60px;background:linear-gradient(#a2a2a2,#909090 12%,#7c7c7c 60%,#686868);border-radius:3.5px 3.5px 0 0;box-shadow:inset 0 1px 0 #b4b4b4,inset 1px 0 0 #9a9a9a,inset -1px 0 0 #767676;"></div>
<div style="left:394.92px;top:1015.20px;width:30.20px;height:8.80px;background:#c85f68;border-radius:2.2px;box-shadow:inset 0 0 1.5px rgba(0,0,0,.55);"></div>
<span style="left:392.32px;top:1028px;font-size:8.55px;line-height:10px;color:#222;transform:scaleX(0.9150);-webkit-text-stroke:0.2px #222;">Moderate</span>
<span style="left:392.32px;top:1037px;font-size:8.55px;line-height:10px;color:#222;transform:scaleX(0.9150);-webkit-text-stroke:0.2px #222;">Red</span>
<div style="left:430.54px;top:1011.70px;width:37.20px;height:35.60px;background:linear-gradient(#a2a2a2,#909090 12%,#7c7c7c 60%,#686868);border-radius:3.5px 3.5px 0 0;box-shadow:inset 0 1px 0 #b4b4b4,inset 1px 0 0 #9a9a9a,inset -1px 0 0 #767676;"></div>
<div style="left:433.94px;top:1015.20px;width:30.20px;height:17.80px;background:#5e4078;border-radius:2.2px;box-shadow:inset 0 0 1.5px rgba(0,0,0,.55);"></div>
<span style="left:437.83px;top:1037px;font-size:8.55px;line-height:10px;color:#222;transform:scaleX(0.9150);-webkit-text-stroke:0.2px #222;">Purple</span>
<div style="left:469.56px;top:1011.70px;width:37.20px;height:35.60px;background:linear-gradient(#a2a2a2,#909090 12%,#7c7c7c 60%,#686868);border-radius:3.5px 3.5px 0 0;box-shadow:inset 0 1px 0 #b4b4b4,inset 1px 0 0 #9a9a9a,inset -1px 0 0 #767676;"></div>
<div style="left:472.96px;top:1015.20px;width:30.20px;height:8.80px;background:#a9c452;border-radius:2.2px;box-shadow:inset 0 0 1.5px rgba(0,0,0,.55);"></div>
<span style="left:476.99px;top:1028px;font-size:8.55px;line-height:10px;color:#222;transform:scaleX(0.9150);-webkit-text-stroke:0.2px #222;">Yellow</span>
<span style="left:476.99px;top:1037px;font-size:8.55px;line-height:10px;color:#222;transform:scaleX(0.9150);-webkit-text-stroke:0.2px #222;">Green</span>
<div style="left:508.58px;top:1011.70px;width:37.20px;height:35.60px;background:linear-gradient(#a2a2a2,#909090 12%,#7c7c7c 60%,#686868);border-radius:3.5px 3.5px 0 0;box-shadow:inset 0 1px 0 #b4b4b4,inset 1px 0 0 #9a9a9a,inset -1px 0 0 #767676;"></div>
<div style="left:511.98px;top:1015.20px;width:30.20px;height:8.80px;background:#e8ab3e;border-radius:2.2px;box-shadow:inset 0 0 1.5px rgba(0,0,0,.55);"></div>
<span style="left:514.13px;top:1028px;font-size:8.55px;line-height:10px;color:#222;transform:scaleX(0.9150);-webkit-text-stroke:0.2px #222;">Orange</span>
<span style="left:514.13px;top:1037px;font-size:8.55px;line-height:10px;color:#222;transform:scaleX(0.9150);-webkit-text-stroke:0.2px #222;">Yellow</span>
<div style="left:547.60px;top:1011.70px;width:37.20px;height:35.60px;background:linear-gradient(#a2a2a2,#909090 12%,#7c7c7c 60%,#686868);border-radius:3.5px 3.5px 0 0;box-shadow:inset 0 1px 0 #b4b4b4,inset 1px 0 0 #9a9a9a,inset -1px 0 0 #767676;"></div>
<div style="left:551.00px;top:1015.20px;width:30.20px;height:17.80px;background:#333ea0;border-radius:2.2px;box-shadow:inset 0 0 1.5px rgba(0,0,0,.55);"></div>
<span style="left:558.37px;top:1037px;font-size:8.55px;line-height:10px;color:#222;transform:scaleX(0.9150);-webkit-text-stroke:0.2px #222;">Blue</span>
<div style="left:586.62px;top:1011.70px;width:37.20px;height:35.60px;background:linear-gradient(#a2a2a2,#909090 12%,#7c7c7c 60%,#686868);border-radius:3.5px 3.5px 0 0;box-shadow:inset 0 1px 0 #b4b4b4,inset 1px 0 0 #9a9a9a,inset -1px 0 0 #767676;"></div>
<div style="left:590.02px;top:1015.20px;width:30.20px;height:17.80px;background:#559c55;border-radius:2.2px;box-shadow:inset 0 0 1.5px rgba(0,0,0,.55);"></div>
<span style="left:594.35px;top:1037px;font-size:8.55px;line-height:10px;color:#222;transform:scaleX(0.9150);-webkit-text-stroke:0.2px #222;">Green</span>
<div style="left:625.64px;top:1011.70px;width:37.20px;height:35.60px;background:linear-gradient(#a2a2a2,#909090 12%,#7c7c7c 60%,#686868);border-radius:3.5px 3.5px 0 0;box-shadow:inset 0 1px 0 #b4b4b4,inset 1px 0 0 #9a9a9a,inset -1px 0 0 #767676;"></div>
<div style="left:629.04px;top:1015.20px;width:30.20px;height:17.80px;background:#b53a3e;border-radius:2.2px;box-shadow:inset 0 0 1.5px rgba(0,0,0,.55);"></div>
<span style="left:637.06px;top:1037px;font-size:8.55px;line-height:10px;color:#222;transform:scaleX(0.9150);-webkit-text-stroke:0.2px #222;">Red</span>
<div style="left:664.66px;top:1011.70px;width:37.20px;height:35.60px;background:linear-gradient(#a2a2a2,#909090 12%,#7c7c7c 60%,#686868);border-radius:3.5px 3.5px 0 0;box-shadow:inset 0 1px 0 #b4b4b4,inset 1px 0 0 #9a9a9a,inset -1px 0 0 #767676;"></div>
<div style="left:668.06px;top:1015.20px;width:30.20px;height:17.80px;background:#ebca47;border-radius:2.2px;box-shadow:inset 0 0 1.5px rgba(0,0,0,.55);"></div>
<span style="left:672.09px;top:1037px;font-size:8.55px;line-height:10px;color:#222;transform:scaleX(0.9150);-webkit-text-stroke:0.2px #222;">Yellow</span>
<div style="left:703.68px;top:1011.70px;width:37.20px;height:35.60px;background:linear-gradient(#a2a2a2,#909090 12%,#7c7c7c 60%,#686868);border-radius:3.5px 3.5px 0 0;box-shadow:inset 0 1px 0 #b4b4b4,inset 1px 0 0 #9a9a9a,inset -1px 0 0 #767676;"></div>
<div style="left:707.08px;top:1015.20px;width:30.20px;height:17.80px;background:#b25c98;border-radius:2.2px;box-shadow:inset 0 0 1.5px rgba(0,0,0,.55);"></div>
<span style="left:705.81px;top:1037px;font-size:8.55px;line-height:10px;color:#222;transform:scaleX(0.9900);-webkit-text-stroke:0.2px #222;">Magenta</span>
<div style="left:742.70px;top:1011.70px;width:37.20px;height:35.60px;background:linear-gradient(#a2a2a2,#909090 12%,#7c7c7c 60%,#686868);border-radius:3.5px 3.5px 0 0;box-shadow:inset 0 1px 0 #b4b4b4,inset 1px 0 0 #9a9a9a,inset -1px 0 0 #767676;"></div>
<div style="left:746.10px;top:1015.20px;width:30.20px;height:17.80px;background:#2886ac;border-radius:2.2px;box-shadow:inset 0 0 1.5px rgba(0,0,0,.55);"></div>
<span style="left:752.17px;top:1037px;font-size:8.55px;line-height:10px;color:#222;transform:scaleX(0.9150);-webkit-text-stroke:0.2px #222;">Cyan</span>
<div style="left:781.72px;top:1011.70px;width:37.20px;height:35.60px;background:linear-gradient(#a2a2a2,#909090 12%,#7c7c7c 60%,#686868);border-radius:3.5px 3.5px 0 0;box-shadow:inset 0 1px 0 #b4b4b4,inset 1px 0 0 #9a9a9a,inset -1px 0 0 #767676;"></div>
<div style="left:785.12px;top:1015.20px;width:30.20px;height:17.80px;background:#ff0000;border-radius:2.2px;box-shadow:inset 0 0 1.5px rgba(0,0,0,.55);"></div>
<span style="left:782.35px;top:1037px;font-size:8.55px;line-height:10px;color:#222;transform:scaleX(0.9000);-webkit-text-stroke:0.2px #222;">100% Red</span>
<div style="left:820.74px;top:1011.70px;width:37.20px;height:35.60px;background:linear-gradient(#a2a2a2,#909090 12%,#7c7c7c 60%,#686868);border-radius:3.5px 3.5px 0 0;box-shadow:inset 0 1px 0 #b4b4b4,inset 1px 0 0 #9a9a9a,inset -1px 0 0 #767676;"></div>
<div style="left:824.14px;top:1015.20px;width:30.20px;height:8.80px;background:#00ff00;border-radius:2.2px;box-shadow:inset 0 0 1.5px rgba(0,0,0,.55);"></div>
<span style="left:828.47px;top:1028px;font-size:8.55px;line-height:10px;color:#222;transform:scaleX(0.9150);-webkit-text-stroke:0.2px #222;">100%</span>
<span style="left:828.47px;top:1037px;font-size:8.55px;line-height:10px;color:#222;transform:scaleX(0.9150);-webkit-text-stroke:0.2px #222;">Green</span>
<div style="left:859.76px;top:1011.70px;width:37.20px;height:35.60px;background:linear-gradient(#a2a2a2,#909090 12%,#7c7c7c 60%,#686868);border-radius:3.5px 3.5px 0 0;box-shadow:inset 0 1px 0 #b4b4b4,inset 1px 0 0 #9a9a9a,inset -1px 0 0 #767676;"></div>
<div style="left:863.16px;top:1015.20px;width:30.20px;height:8.80px;background:#0000ff;border-radius:2.2px;box-shadow:inset 0 0 1.5px rgba(0,0,0,.55);"></div>
<span style="left:868.35px;top:1028px;font-size:8.55px;line-height:10px;color:#222;transform:scaleX(0.9150);-webkit-text-stroke:0.2px #222;">100%</span>
<span style="left:868.35px;top:1037px;font-size:8.55px;line-height:10px;color:#222;transform:scaleX(0.9150);-webkit-text-stroke:0.2px #222;">Blue</span>
<div style="left:898.78px;top:1011.70px;width:37.20px;height:35.60px;background:linear-gradient(#a2a2a2,#909090 12%,#7c7c7c 60%,#686868);border-radius:3.5px 3.5px 0 0;box-shadow:inset 0 1px 0 #b4b4b4,inset 1px 0 0 #9a9a9a,inset -1px 0 0 #767676;"></div>
<div style="left:902.18px;top:1015.20px;width:30.20px;height:8.80px;background:#00ffff;border-radius:2.2px;box-shadow:inset 0 0 1.5px rgba(0,0,0,.55);"></div>
<span style="left:907.37px;top:1028px;font-size:8.55px;line-height:10px;color:#222;transform:scaleX(0.9150);-webkit-text-stroke:0.2px #222;">100%</span>
<span style="left:907.37px;top:1037px;font-size:8.55px;line-height:10px;color:#222;transform:scaleX(0.9150);-webkit-text-stroke:0.2px #222;">Cyan</span>
<div style="left:937.80px;top:1011.70px;width:37.20px;height:35.60px;background:linear-gradient(#a2a2a2,#909090 12%,#7c7c7c 60%,#686868);border-radius:3.5px 3.5px 0 0;box-shadow:inset 0 1px 0 #b4b4b4,inset 1px 0 0 #9a9a9a,inset -1px 0 0 #767676;"></div>
<div style="left:941.20px;top:1015.20px;width:30.20px;height:8.80px;background:#ff00ff;border-radius:2.2px;box-shadow:inset 0 0 1.5px rgba(0,0,0,.55);"></div>
<span style="left:939.00px;top:1028px;font-size:8.55px;line-height:10px;color:#222;transform:scaleX(0.9150);-webkit-text-stroke:0.2px #222;">100%</span>
<span style="left:939.00px;top:1037px;font-size:8.55px;line-height:10px;color:#222;transform:scaleX(0.9150);-webkit-text-stroke:0.2px #222;">Magenta</span>
<div style="left:976.82px;top:1011.70px;width:37.20px;height:35.60px;background:linear-gradient(#a2a2a2,#909090 12%,#7c7c7c 60%,#686868);border-radius:3.5px 3.5px 0 0;box-shadow:inset 0 1px 0 #b4b4b4,inset 1px 0 0 #9a9a9a,inset -1px 0 0 #767676;"></div>
<div style="left:980.22px;top:1015.20px;width:30.20px;height:8.80px;background:#ffff00;border-radius:2.2px;box-shadow:inset 0 0 1.5px rgba(0,0,0,.55);"></div>
<span style="left:984.25px;top:1028px;font-size:8.55px;line-height:10px;color:#222;transform:scaleX(0.9150);-webkit-text-stroke:0.2px #222;">100%</span>
<span style="left:984.25px;top:1037px;font-size:8.55px;line-height:10px;color:#222;transform:scaleX(0.9150);-webkit-text-stroke:0.2px #222;">Yellow</span>
<div style="left:1015.84px;top:1011.70px;width:37.20px;height:35.60px;background:linear-gradient(#a2a2a2,#909090 12%,#7c7c7c 60%,#686868);border-radius:3.5px 3.5px 0 0;box-shadow:inset 0 1px 0 #b4b4b4,inset 1px 0 0 #9a9a9a,inset -1px 0 0 #767676;"></div>
<div style="left:1019.24px;top:1015.20px;width:30.20px;height:17.80px;background:#76452b;border-radius:2.2px;box-shadow:inset 0 0 1.5px rgba(0,0,0,.55);"></div>
<span style="left:1029.65px;top:1037px;font-size:8.55px;line-height:10px;color:#222;transform:scaleX(0.9150);-webkit-text-stroke:0.2px #222;">2E</span>
<div style="left:1054.86px;top:1011.70px;width:37.20px;height:35.60px;background:linear-gradient(#a2a2a2,#909090 12%,#7c7c7c 60%,#686868);border-radius:3.5px 3.5px 0 0;box-shadow:inset 0 1px 0 #b4b4b4,inset 1px 0 0 #9a9a9a,inset -1px 0 0 #767676;"></div>
<div style="left:1058.26px;top:1015.20px;width:30.20px;height:17.80px;background:#c48c6b;border-radius:2.2px;box-shadow:inset 0 0 1.5px rgba(0,0,0,.55);"></div>
<span style="left:1068.89px;top:1037px;font-size:8.55px;line-height:10px;color:#222;transform:scaleX(0.9150);-webkit-text-stroke:0.2px #222;">2F</span>
<div style="left:1093.88px;top:1011.70px;width:37.20px;height:35.60px;background:linear-gradient(#a2a2a2,#909090 12%,#7c7c7c 60%,#686868);border-radius:3.5px 3.5px 0 0;box-shadow:inset 0 1px 0 #b4b4b4,inset 1px 0 0 #9a9a9a,inset -1px 0 0 #767676;"></div>
<div style="left:1097.28px;top:1015.20px;width:30.20px;height:17.80px;background:#f6caa0;border-radius:2.2px;box-shadow:inset 0 0 1.5px rgba(0,0,0,.55);"></div>
<span style="left:1107.69px;top:1037px;font-size:8.55px;line-height:10px;color:#222;transform:scaleX(0.9150);-webkit-text-stroke:0.2px #222;">2K</span>
<div style="left:1132.90px;top:1011.70px;width:37.20px;height:35.60px;background:linear-gradient(#a2a2a2,#909090 12%,#7c7c7c 60%,#686868);border-radius:3.5px 3.5px 0 0;box-shadow:inset 0 1px 0 #b4b4b4,inset 1px 0 0 #9a9a9a,inset -1px 0 0 #767676;"></div>
<div style="left:1136.30px;top:1015.20px;width:30.20px;height:17.80px;background:#f6cab4;border-radius:2.2px;box-shadow:inset 0 0 1.5px rgba(0,0,0,.55);"></div>
<span style="left:1146.50px;top:1037px;font-size:8.55px;line-height:10px;color:#222;transform:scaleX(0.9150);-webkit-text-stroke:0.2px #222;">5D</span>
<div style="left:1171.92px;top:1011.70px;width:37.20px;height:35.60px;background:linear-gradient(#a2a2a2,#909090 12%,#7c7c7c 60%,#686868);border-radius:3.5px 3.5px 0 0;box-shadow:inset 0 1px 0 #b4b4b4,inset 1px 0 0 #9a9a9a,inset -1px 0 0 #767676;"></div>
<div style="left:1175.32px;top:1015.20px;width:30.20px;height:17.80px;background:#edb28a;border-radius:2.2px;box-shadow:inset 0 0 1.5px rgba(0,0,0,.55);"></div>
<span style="left:1185.73px;top:1037px;font-size:8.55px;line-height:10px;color:#222;transform:scaleX(0.9150);-webkit-text-stroke:0.2px #222;">7E</span>
<div style="left:1210.94px;top:1011.70px;width:37.20px;height:35.60px;background:linear-gradient(#a2a2a2,#909090 12%,#7c7c7c 60%,#686868);border-radius:3.5px 3.5px 0 0;box-shadow:inset 0 1px 0 #b4b4b4,inset 1px 0 0 #9a9a9a,inset -1px 0 0 #767676;"></div>
<div style="left:1214.34px;top:1015.20px;width:30.20px;height:17.80px;background:#c8946a;border-radius:2.2px;box-shadow:inset 0 0 1.5px rgba(0,0,0,.55);"></div>
<span style="left:1224.97px;top:1037px;font-size:8.55px;line-height:10px;color:#222;transform:scaleX(0.9150);-webkit-text-stroke:0.2px #222;">7F</span>
<div style="left:1249.96px;top:1011.70px;width:37.20px;height:35.60px;background:linear-gradient(#a2a2a2,#909090 12%,#7c7c7c 60%,#686868);border-radius:3.5px 3.5px 0 0;box-shadow:inset 0 1px 0 #b4b4b4,inset 1px 0 0 #9a9a9a,inset -1px 0 0 #767676;"></div>
<div style="left:1253.36px;top:1015.20px;width:30.20px;height:17.80px;background:#8c6138;border-radius:2.2px;box-shadow:inset 0 0 1.5px rgba(0,0,0,.55);"></div>
<span style="left:1263.34px;top:1037px;font-size:8.55px;line-height:10px;color:#222;transform:scaleX(0.9150);-webkit-text-stroke:0.2px #222;">7G</span>
<div style="left:1288.98px;top:1011.70px;width:37.20px;height:35.60px;background:linear-gradient(#a2a2a2,#909090 12%,#7c7c7c 60%,#686868);border-radius:3.5px 3.5px 0 0;box-shadow:inset 0 1px 0 #b4b4b4,inset 1px 0 0 #9a9a9a,inset -1px 0 0 #767676;"></div>
<div style="left:1292.38px;top:1015.20px;width:30.20px;height:17.80px;background:#dba67e;border-radius:2.2px;box-shadow:inset 0 0 1.5px rgba(0,0,0,.55);"></div>
<span style="left:1302.58px;top:1037px;font-size:8.55px;line-height:10px;color:#222;transform:scaleX(0.9150);-webkit-text-stroke:0.2px #222;">7H</span>
<div style="left:1328.00px;top:1011.70px;width:37.20px;height:35.60px;background:linear-gradient(#a2a2a2,#909090 12%,#7c7c7c 60%,#686868);border-radius:3.5px 3.5px 0 0;box-shadow:inset 0 1px 0 #b4b4b4,inset 1px 0 0 #9a9a9a,inset -1px 0 0 #767676;"></div>
<div style="left:1331.40px;top:1015.20px;width:30.20px;height:17.80px;background:#a25c2c;border-radius:2.2px;box-shadow:inset 0 0 1.5px rgba(0,0,0,.55);"></div>
<span style="left:1343.34px;top:1037px;font-size:8.55px;line-height:10px;color:#222;transform:scaleX(0.9150);-webkit-text-stroke:0.2px #222;">7I</span>
<div style="left:1367.02px;top:1011.70px;width:37.20px;height:35.60px;background:linear-gradient(#a2a2a2,#909090 12%,#7c7c7c 60%,#686868);border-radius:3.5px 3.5px 0 0;box-shadow:inset 0 1px 0 #b4b4b4,inset 1px 0 0 #9a9a9a,inset -1px 0 0 #767676;"></div>
<div style="left:1370.42px;top:1015.20px;width:30.20px;height:17.80px;background:#d08b66;border-radius:2.2px;box-shadow:inset 0 0 1.5px rgba(0,0,0,.55);"></div>
<span style="left:1381.49px;top:1037px;font-size:8.55px;line-height:10px;color:#222;transform:scaleX(0.9150);-webkit-text-stroke:0.2px #222;">7J</span>
<div style="left:1406.04px;top:1011.70px;width:37.20px;height:35.60px;background:linear-gradient(#a2a2a2,#909090 12%,#7c7c7c 60%,#686868);border-radius:3.5px 3.5px 0 0;box-shadow:inset 0 1px 0 #b4b4b4,inset 1px 0 0 #9a9a9a,inset -1px 0 0 #767676;"></div>
<div style="left:1409.44px;top:1015.20px;width:30.20px;height:17.80px;background:#d4946e;border-radius:2.2px;box-shadow:inset 0 0 1.5px rgba(0,0,0,.55);"></div>
<span style="left:1419.64px;top:1037px;font-size:8.55px;line-height:10px;color:#222;transform:scaleX(0.9150);-webkit-text-stroke:0.2px #222;">8D</span>
<div style="left:1445.06px;top:1011.70px;width:37.20px;height:35.60px;background:linear-gradient(#a2a2a2,#909090 12%,#7c7c7c 60%,#686868);border-radius:3.5px 3.5px 0 0;box-shadow:inset 0 1px 0 #b4b4b4,inset 1px 0 0 #9a9a9a,inset -1px 0 0 #767676;"></div>
<div style="left:1448.46px;top:1015.20px;width:30.20px;height:17.80px;background:#f2a27c;border-radius:2.2px;box-shadow:inset 0 0 1.5px rgba(0,0,0,.55);"></div>
<span style="left:1458.87px;top:1037px;font-size:8.55px;line-height:10px;color:#222;transform:scaleX(0.9150);-webkit-text-stroke:0.2px #222;">8E</span>
<div style="left:1484.08px;top:1011.70px;width:37.20px;height:35.60px;background:linear-gradient(#a2a2a2,#909090 12%,#7c7c7c 60%,#686868);border-radius:3.5px 3.5px 0 0;box-shadow:inset 0 1px 0 #b4b4b4,inset 1px 0 0 #9a9a9a,inset -1px 0 0 #767676;"></div>
<div style="left:1487.48px;top:1015.20px;width:30.20px;height:17.80px;background:#c99a76;border-radius:2.2px;box-shadow:inset 0 0 1.5px rgba(0,0,0,.55);"></div>
<span style="left:1498.11px;top:1037px;font-size:8.55px;line-height:10px;color:#222;transform:scaleX(0.9150);-webkit-text-stroke:0.2px #222;">8F</span>
<div style="left:1523.10px;top:1011.70px;width:37.20px;height:35.60px;background:linear-gradient(#a2a2a2,#909090 12%,#7c7c7c 60%,#686868);border-radius:3.5px 3.5px 0 0;box-shadow:inset 0 1px 0 #b4b4b4,inset 1px 0 0 #9a9a9a,inset -1px 0 0 #767676;"></div>
<div style="left:1526.50px;top:1015.20px;width:30.20px;height:17.80px;background:#cc9872;border-radius:2.2px;box-shadow:inset 0 0 1.5px rgba(0,0,0,.55);"></div>
<span style="left:1536.48px;top:1037px;font-size:8.55px;line-height:10px;color:#222;transform:scaleX(0.9150);-webkit-text-stroke:0.2px #222;">8G</span>
<div style="left:1562.12px;top:1011.70px;width:37.20px;height:35.60px;background:linear-gradient(#a2a2a2,#909090 12%,#7c7c7c 60%,#686868);border-radius:3.5px 3.5px 0 0;box-shadow:inset 0 1px 0 #b4b4b4,inset 1px 0 0 #9a9a9a,inset -1px 0 0 #767676;"></div>
<div style="left:1565.52px;top:1015.20px;width:30.20px;height:17.80px;background:#d19c72;border-radius:2.2px;box-shadow:inset 0 0 1.5px rgba(0,0,0,.55);"></div>
<span style="left:1575.72px;top:1037px;font-size:8.55px;line-height:10px;color:#222;transform:scaleX(0.9150);-webkit-text-stroke:0.2px #222;">8H</span>
<div style="left:1601.14px;top:1011.70px;width:37.20px;height:35.60px;background:linear-gradient(#a2a2a2,#909090 12%,#7c7c7c 60%,#686868);border-radius:3.5px 3.5px 0 0;box-shadow:inset 0 1px 0 #b4b4b4,inset 1px 0 0 #9a9a9a,inset -1px 0 0 #767676;"></div>
<div style="left:1604.54px;top:1015.20px;width:30.20px;height:17.80px;background:#815029;border-radius:2.2px;box-shadow:inset 0 0 1.5px rgba(0,0,0,.55);"></div>
<span style="left:1616.48px;top:1037px;font-size:8.55px;line-height:10px;color:#222;transform:scaleX(0.9150);-webkit-text-stroke:0.2px #222;">8I</span>
<div style="left:1640.16px;top:1011.70px;width:37.20px;height:35.60px;background:#2b2b2b;border-radius:3.5px 3.5px 0 0;"></div>
<div style="left:1643.56px;top:1015.20px;width:30.20px;height:17.80px;background:#e89a5e;border-radius:2.2px;box-shadow:inset 0 0 1.5px rgba(0,0,0,.55);"></div>
<span style="left:1654.41px;top:1037px;font-size:8.55px;line-height:10px;color:#fff;font-weight:700;transform:scaleX(0.9150);">8J</span>
<div style="left:150.50px;top:1011.70px;width:5.20px;height:35.60px;overflow:hidden;"><div style="left:-32.00px;top:0.00px;width:37.20px;height:35.60px;background:linear-gradient(#a2a2a2,#909090 12%,#7c7c7c 60%,#686868);border-radius:3.5px 3.5px 0 0;"></div><div style="left:-28.60px;top:3.50px;width:30.20px;height:17.80px;background:#e0a684;border-radius:2.2px;"></div><span style="left:0.30px;top:25px;font-size:8.55px;line-height:10px;color:#2c2c2c;transform:scaleX(0.9150);">n</span></div>
<div style="left:150.50px;top:1047.80px;width:1526.50px;height:9.00px;background:#5e5e5e;"></div>
<div style="left:150.50px;top:1056.80px;width:1526.50px;height:1.20px;background:#2c2c2c;"></div>
<div style="left:151.00px;top:1048.40px;width:8.20px;height:8.60px;background:linear-gradient(#7c7c7c,#6a6a6a);border-radius:2px;"></div>
<svg style="left:152.8px;top:1050.2px" width="4.6" height="5.6" viewBox="0 0 8 10"><path d="M7.4 0.4v9.2L0.6 5z" fill="#2e2e2e"/></svg>
<div style="left:1668.60px;top:1048.40px;width:8.20px;height:8.60px;background:linear-gradient(#7c7c7c,#6a6a6a);border-radius:2px;"></div>
<svg style="left:1670.6px;top:1050.2px" width="4.6" height="5.6" viewBox="0 0 8 10"><path d="M0.6 0.4v9.2L7.4 5z" fill="#2e2e2e"/></svg>
<div style="left:412.10px;top:1049.00px;width:1253.50px;height:7.20px;background:#454545;border-radius:3.6px;"></div>
<div style="left:1677.50px;top:1026.00px;width:35.50px;height:32.00px;background:linear-gradient(#7e7e7e,#6a6a6a);border-radius:3px 0 0 0;"></div>
<div style="left:1683.70px;top:1030.90px;width:22.60px;height:21.90px;background:linear-gradient(#8e8e8e,#787878);border:2px solid #1e1e1e;border-radius:4px;box-sizing:border-box;"></div>
<div style="left:1690.60px;top:1035.90px;width:10.00px;height:10.00px;background:#000;"></div>
<div style="left:1715.00px;top:1011.90px;width:33.40px;height:22.00px;background:linear-gradient(#909090,#7a7a7a 50%,#6a6a6a);border-radius:3px 0 0 0;"></div>
<div style="left:1725.20px;top:1016.00px;width:14.00px;height:14.00px;border-radius:50%;background:radial-gradient(circle at 50% 40%,#8a8a8a,#747474);box-shadow:0 1px 0 rgba(255,255,255,.18);"></div>
<div style="left:1749.40px;top:1011.90px;width:32.70px;height:22.00px;background:linear-gradient(#909090,#7a7a7a 50%,#6a6a6a);border-radius:0;"></div>
<div style="left:1759.25px;top:1016.00px;width:14.00px;height:14.00px;border-radius:50%;background:radial-gradient(circle at 50% 40%,#8a8a8a,#747474);box-shadow:0 1px 0 rgba(255,255,255,.18);"></div>
<div style="left:1783.10px;top:1011.90px;width:32.80px;height:22.00px;background:linear-gradient(#909090,#7a7a7a 50%,#6a6a6a);border-radius:0;"></div>
<div style="left:1793.00px;top:1016.00px;width:14.00px;height:14.00px;border-radius:50%;background:radial-gradient(circle at 50% 40%,#8a8a8a,#747474);box-shadow:0 1px 0 rgba(255,255,255,.18);"></div>
<div style="left:1816.90px;top:1011.90px;width:32.70px;height:22.00px;background:linear-gradient(#909090,#7a7a7a 50%,#6a6a6a);border-radius:0;"></div>
<div style="left:1826.75px;top:1016.00px;width:14.00px;height:14.00px;border-radius:50%;background:radial-gradient(circle at 50% 40%,#8a8a8a,#747474);box-shadow:0 1px 0 rgba(255,255,255,.18);"></div>
<div style="left:1850.60px;top:1011.90px;width:32.80px;height:22.00px;background:#2e2e2e;border-radius:0;"></div>
<div style="left:1860.50px;top:1016.00px;width:14.00px;height:14.00px;border-radius:50%;background:#3a3a3a;box-shadow:0 1px 0 rgba(255,255,255,.18);"></div>
<div style="left:1884.40px;top:1011.90px;width:32.70px;height:22.00px;background:linear-gradient(#909090,#7a7a7a 50%,#6a6a6a);border-radius:0;"></div>
<div style="left:1894.25px;top:1016.00px;width:14.00px;height:14.00px;border-radius:50%;background:radial-gradient(circle at 50% 40%,#8a8a8a,#747474);box-shadow:0 1px 0 rgba(255,255,255,.18);"></div>
<svg style="left:0;top:0" width="1920" height="1058" viewBox="0 0 1920 1058" fill="#2a2a2a" stroke="none"><rect x="1731.2" y="1019.5" width="2" height="7"/><path d="M1764.05 1019.4v7.2l5.4-3.6z"/><rect x="1797.4" y="1019.6" width="5.2" height="6.6" fill="none" stroke="#2a2a2a" stroke-width="1.1"/><path d="M1830.35 1024.2q1.7-3.4 3.4 0t3.4 0" fill="none" stroke="#2a2a2a" stroke-width="1.2"/><rect x="1864.5" y="1022.3" width="6" height="1.4" fill="#1a1a1a"/><circle cx="1901.25" cy="1023" r="2.4"/></svg>
<div style="left:1715.00px;top:1035.00px;width:101.30px;height:24.00px;background:linear-gradient(#aaaaaa,#9a9a9a 18%,#868686 60%,#767676);border-radius:3px 3px 0 0;box-shadow:inset 0 1px 0 #c4c4c4,inset 1px 0 0 #a8a8a8;"></div>
<div style="left:1817.50px;top:1035.00px;width:100.60px;height:24.00px;background:linear-gradient(#aaaaaa,#9a9a9a 18%,#868686 60%,#767676);border-radius:3px 3px 0 0;box-shadow:inset 0 1px 0 #c4c4c4,inset 1px 0 0 #a8a8a8;"></div>
<div style="left:1729.90px;top:1038.30px;width:15.20px;height:15.20px;border-radius:50%;background:radial-gradient(circle at 50% 35%,#9a9a9a,#868686);box-shadow:0 1px 0 rgba(255,255,255,.3),inset 0 1px 1px rgba(0,0,0,.25);"></div>
<div style="left:1889.90px;top:1038.30px;width:15.20px;height:15.20px;border-radius:50%;background:radial-gradient(circle at 50% 35%,#9a9a9a,#868686);box-shadow:0 1px 0 rgba(255,255,255,.3),inset 0 1px 1px rgba(0,0,0,.25);"></div>
<svg style="left:1733.2px;top:1041.6px" width="9" height="9" viewBox="0 0 9 9" fill="none" stroke="#2c2c2c" stroke-width="1.2"><path d="M4 0.8L1 4.5l3 3.7M8 0.8L5 4.5l3 3.7"/></svg>
<svg style="left:1893.2px;top:1041.6px" width="9" height="9" viewBox="0 0 9 9" fill="none" stroke="#2c2c2c" stroke-width="1.2"><path d="M1 0.8l3 3.7l-3 3.7M5 0.8l3 3.7l-3 3.7"/></svg>
<span style="left:1756.72px;top:1038px;font-size:15.80px;line-height:17px;color:#2a2a2a;-webkit-text-stroke-width:0.21px;transform:scaleX(1.0890);">Back</span>
<span style="left:1836.55px;top:1038px;font-size:15.80px;line-height:17px;color:#2a2a2a;-webkit-text-stroke-width:0.21px;transform:scaleX(1.2275);">Next</span>
<!-- wm -->
<svg style="left:0;top:0" width="1920" height="1058" viewBox="0 0 1920 1058" fill="none" stroke-linejoin="round" stroke-linecap="round"><path d="M1631.2 996L1670.2 1005L1671.6 1025.7L1640.5 1029.2" stroke="#fff" stroke-opacity=".5" stroke-width="5.6"/><path d="M1631.2 996L1633.3 1033.3L1656.4 1046.4L1697.8 1031.9L1675.7 1028.1" stroke="#fff" stroke-opacity=".5" stroke-width="5.6"/><path d="M1631.2 996L1670.2 1005L1671.6 1025.7L1640.5 1029.2" stroke="#8e1a20" stroke-opacity=".82" stroke-width="3.2"/><path d="M1631.2 996L1633.3 1033.3L1656.4 1046.4L1697.8 1031.9L1675.7 1028.1" stroke="#8e1a20" stroke-opacity=".82" stroke-width="3.2"/><path d="M1641 1030.6L1672 1027.2" stroke="#fff" stroke-opacity=".55" stroke-width="1.2"/><path d="M1641.9 1009.2C1646 1011 1650 1017 1653.6 1024.3C1658 1013 1665 1003 1674.3 995.4" stroke="#fff" stroke-opacity=".6" stroke-width="5.4"/><path d="M1641.9 1009.2C1646 1011 1650 1017 1653.6 1024.3C1658 1013 1665 1003 1674.3 995.4" stroke="#303030" stroke-opacity=".9" stroke-width="3.1"/></svg>
<span style="left:1675.03px;top:1000px;font-size:25.36px;line-height:28px;color:transparent;font-weight:700;transform:scaleX(1.0113);-webkit-text-stroke:4px rgba(255,255,255,.42);">NOTEBOOK</span>
<span style="left:1675.03px;top:1000px;font-size:25.36px;line-height:28px;color:rgba(140,24,34,.74);font-weight:700;transform:scaleX(1.0113);-webkit-text-stroke:1.3px rgba(140,24,34,.74);">NOTEBOOK</span>
<span style="left:1824.28px;top:1000px;font-size:25.36px;line-height:28px;color:transparent;transform:scaleX(0.9628);-webkit-text-stroke:4.2px rgba(255,255,255,.45);">CHECK</span>
<span style="left:1824.28px;top:1000px;font-size:25.36px;line-height:28px;color:rgba(44,44,44,.85);transform:scaleX(0.9628);-webkit-text-stroke:0.9px rgba(44,44,44,.85);">CHECK</span>
</div></body></html>
